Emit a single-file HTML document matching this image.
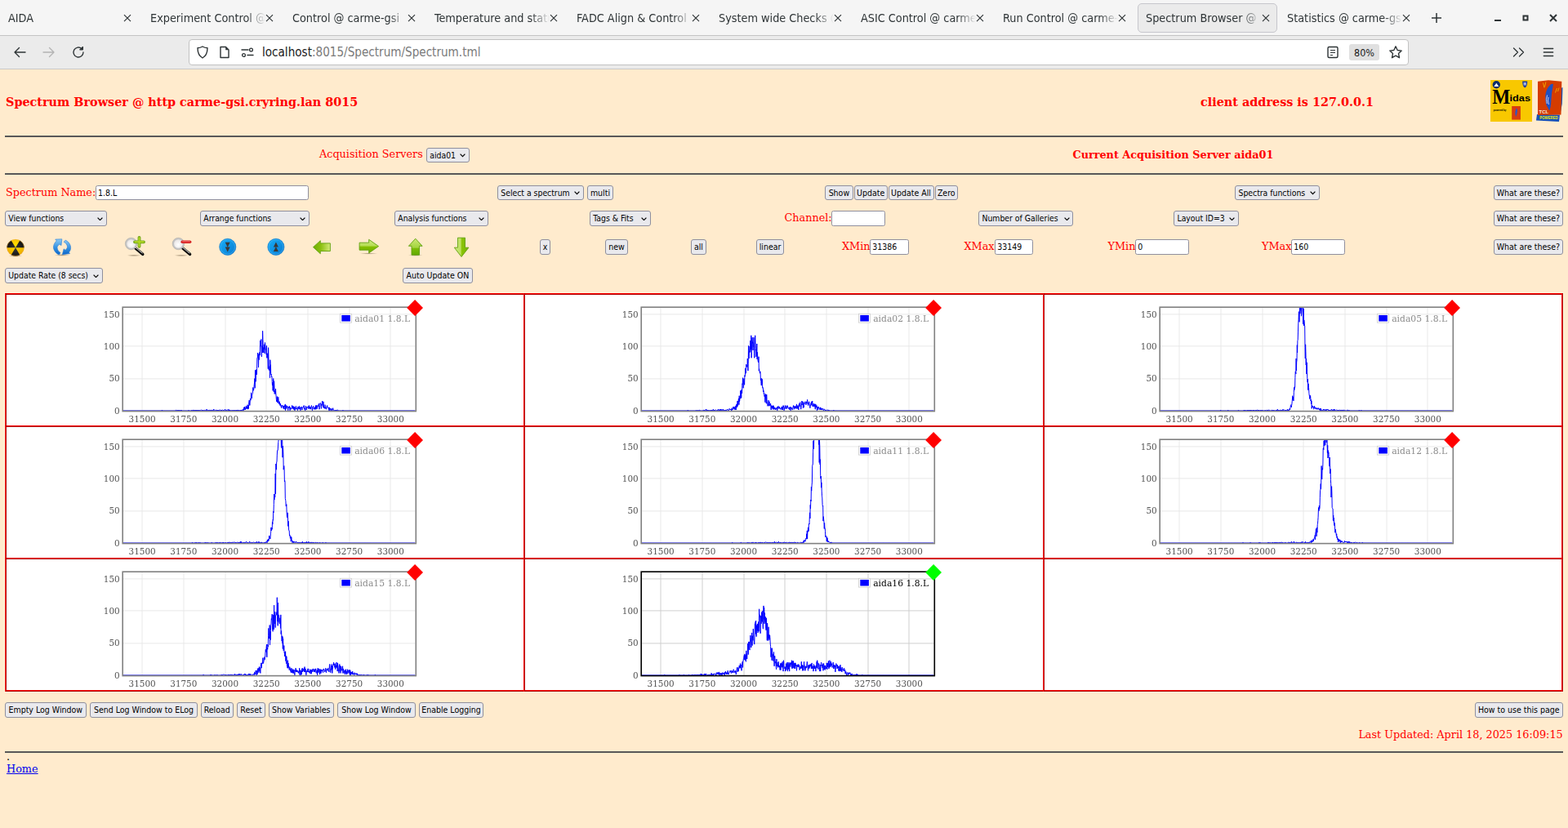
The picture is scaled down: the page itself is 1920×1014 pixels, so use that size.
<!DOCTYPE html>
<html lang="en"><head><meta charset="utf-8"><title>Spectrum Browser @ carme-gsi</title>
<style>
html,body{margin:0;padding:0}
body{width:1920px;height:1014px;overflow:hidden;background:#ffebcd;position:relative;font-family:"DejaVu Serif","Liberation Serif",serif;font-size:12.8px;color:#ff0000}
#chrome{position:absolute;left:0;top:0;width:1920px;height:85px;font-family:"DejaVu Sans Condensed","Liberation Sans",sans-serif;color:#2e3436}
#tabbar{position:absolute;left:0;top:0;width:1920px;height:43px;background:#f5f5f5;border-bottom:1px solid #c4c4c4}
#navbar{position:absolute;left:0;top:44px;width:1920px;height:40px;background:#ebebeb;border-bottom:1px solid #c9c9c9}
.tab{position:absolute;top:4px;height:36px;width:170px;box-sizing:border-box;border:1px solid transparent;border-radius:5px;font-size:14.3px;line-height:34px;white-space:nowrap;overflow:hidden}
.tab.sel{background:#ebebeb;border-color:#c6c6cc}
.tab .t{position:absolute;left:9px;top:0;width:141px;overflow:hidden;-webkit-mask-image:linear-gradient(90deg,#000 84%,transparent 100%);mask-image:linear-gradient(90deg,#000 84%,transparent 100%)}
.tab .x{position:absolute;right:6px;top:10px;width:14px;height:14px}
#urlbox{position:absolute;left:231px;top:4px;width:1492px;height:30px;background:#fff;border:1px solid #c2c2c2;border-radius:4px}
#url{position:absolute;left:89px;top:0;font-size:15.1px;line-height:30px;color:#7a7a7a}
#url b{font-weight:normal;color:#1a1a1a}
.ic{position:absolute}
.abs{position:absolute;white-space:nowrap}
.hr{position:absolute;left:6px;width:1907.7px;height:2px;background:#585858}
.btn,.dd,.inp{position:absolute;box-sizing:border-box;font-family:"DejaVu Sans Condensed","Liberation Sans",sans-serif;font-size:10.5px;color:#000;border:1px solid #8f8f9d;border-radius:3px;white-space:nowrap;overflow:hidden}
.btn{background:#e9e9ed;text-align:center;height:18.5px;line-height:17.3px}
.dd{background:#e9e9ed;height:19px;line-height:17px;padding-left:3.3px;font-size:10.35px}
.dd svg{position:absolute;right:3.4px;top:6.8px}
.inp{background:#fff;height:18.5px;line-height:17.8px;padding-left:2px;border-radius:2.5px}
#grid{position:absolute;left:6px;top:359px;width:1908px;height:488px;background:#fff;box-shadow:0 0 0 1px #fff8dc}
.gl{position:absolute;background:#dd0000}
.ch{position:absolute;overflow:visible;will-change:transform}
.tk{font-family:"DejaVu Serif","Liberation Serif",serif;font-size:10.4px;fill:#545454}
.lg{font-family:"DejaVu Serif","Liberation Serif",serif;font-size:10.75px}
</style></head><body>

<div id="chrome">
 <div id="tabbar">
  <div class="tab" style="left:0px"><span class="t">AIDA</span><svg class="x" viewBox="0 0 14 14"><path d="M3 3.200l8 8M11 3.200l-8 8" stroke="#2e3436" stroke-width="1.150" fill="none"/></svg></div>
  <div class="tab" style="left:174px"><span class="t">Experiment Control @ carme-gsi</span><svg class="x" viewBox="0 0 14 14"><path d="M3 3.200l8 8M11 3.200l-8 8" stroke="#2e3436" stroke-width="1.150" fill="none"/></svg></div>
  <div class="tab" style="left:348px"><span class="t">Control @ carme-gsi</span><svg class="x" viewBox="0 0 14 14"><path d="M3 3.200l8 8M11 3.200l-8 8" stroke="#2e3436" stroke-width="1.150" fill="none"/></svg></div>
  <div class="tab" style="left:522px"><span class="t">Temperature and status</span><svg class="x" viewBox="0 0 14 14"><path d="M3 3.200l8 8M11 3.200l-8 8" stroke="#2e3436" stroke-width="1.150" fill="none"/></svg></div>
  <div class="tab" style="left:696px"><span class="t">FADC Align &amp; Control @</span><svg class="x" viewBox="0 0 14 14"><path d="M3 3.200l8 8M11 3.200l-8 8" stroke="#2e3436" stroke-width="1.150" fill="none"/></svg></div>
  <div class="tab" style="left:870px"><span class="t">System wide Checks @</span><svg class="x" viewBox="0 0 14 14"><path d="M3 3.200l8 8M11 3.200l-8 8" stroke="#2e3436" stroke-width="1.150" fill="none"/></svg></div>
  <div class="tab" style="left:1044px"><span class="t">ASIC Control @ carme-gsi</span><svg class="x" viewBox="0 0 14 14"><path d="M3 3.200l8 8M11 3.200l-8 8" stroke="#2e3436" stroke-width="1.150" fill="none"/></svg></div>
  <div class="tab" style="left:1218px"><span class="t">Run Control @ carme-gsi</span><svg class="x" viewBox="0 0 14 14"><path d="M3 3.200l8 8M11 3.200l-8 8" stroke="#2e3436" stroke-width="1.150" fill="none"/></svg></div>
  <div class="tab sel" style="left:1393px;width:171px"><span class="t">Spectrum Browser @ carme-gsi</span><svg class="x" viewBox="0 0 14 14"><path d="M3 3.200l8 8M11 3.200l-8 8" stroke="#2e3436" stroke-width="1.150" fill="none"/></svg></div>
  <div class="tab" style="left:1566px"><span class="t">Statistics @ carme-gsi</span><svg class="x" viewBox="0 0 14 14"><path d="M3 3.200l8 8M11 3.200l-8 8" stroke="#2e3436" stroke-width="1.150" fill="none"/></svg></div>
  <svg class="ic" style="left:1751px;top:14px" width="16" height="16" viewBox="0 0 16 16"><path d="M8 2v12M2 8h12" stroke="#2e3436" stroke-width="1.5" fill="none"/></svg>
  <svg class="ic" style="left:1826px;top:14px" width="16" height="16" viewBox="0 0 16 16"><path d="M4 11h8" stroke="#2e3436" stroke-width="2" fill="none"/></svg>
  <svg class="ic" style="left:1860px;top:14.200px" width="16" height="16" viewBox="0 0 16 16"><rect x="5.500" y="5.500" width="5" height="5" stroke="#2e3436" stroke-width="2" fill="none"/></svg>
  <svg class="ic" style="left:1894px;top:14px" width="16" height="16" viewBox="0 0 16 16"><path d="M4 4l8 8M12 4l-8 8" stroke="#2e3436" stroke-width="2" fill="none"/></svg>
 </div>
 <div id="navbar">
  <svg class="ic" style="left:15px;top:11px" width="18" height="18" viewBox="0 0 18 18"><path d="M16 9H3M8.5 3.5L3 9l5.500 5.500" stroke="#2e3436" stroke-width="1.350" fill="none" stroke-linecap="round" stroke-linejoin="round"/></svg>
  <svg class="ic" style="left:51px;top:11px" width="18" height="18" viewBox="0 0 18 18"><path d="M2 9h13M9.500 3.500L15 9l-5.500 5.500" stroke="#b4b4b4" stroke-width="1.350" fill="none" stroke-linecap="round" stroke-linejoin="round"/></svg>
  <svg class="ic" style="left:87px;top:11px" width="18" height="18" viewBox="0 0 18 18"><path d="M15 9a6 6 0 1 1-2-4.500" stroke="#2e3436" stroke-width="1.350" fill="none" stroke-linecap="round"/><path d="M14.500 2v4h-4z" fill="#2e3436" stroke="#2e3436" stroke-width="1" stroke-linejoin="round"/></svg>
  <div id="urlbox">
   <svg class="ic" style="left:7px;top:6px" width="18" height="18" viewBox="0 0 18 18"><path d="M9 2c2 1.200 4 1.700 6 1.800 0 6-2 10-6 12.200C5 13.800 3 9.800 3 3.800 5 3.700 7 3.200 9 2z" stroke="#2e3436" stroke-width="1.4" fill="none" stroke-linejoin="round"/></svg>
   <svg class="ic" style="left:34px;top:6px" width="18" height="18" viewBox="0 0 18 18"><path d="M4 2.500h6.500l3.500 3.500v9.500h-10z" stroke="#2e3436" stroke-width="1.400" fill="none" stroke-linejoin="round"/><path d="M10.200 2.500v3.800h3.800z" fill="#2e3436"/></svg>
   <svg class="ic" style="left:62px;top:6px" width="18" height="18" viewBox="0 0 18 18"><path d="M2 6h8M9 12.500h7" stroke="#2e3436" stroke-width="1.400" fill="none" stroke-linecap="round"/><circle cx="13.500" cy="6" r="1.900" stroke="#2e3436" stroke-width="1.300" fill="none"/><circle cx="4.500" cy="12.500" r="1.900" stroke="#2e3436" stroke-width="1.300" fill="none"/></svg>
   <div id="url"><b>localhost</b>:8015/Spectrum/Spectrum.tml</div>
   <svg class="ic" style="left:1391px;top:6px" width="18" height="18" viewBox="0 0 18 18"><rect x="3" y="2.500" width="12" height="13" rx="1.500" stroke="#2e3436" stroke-width="1.400" fill="none"/><path d="M6 6.500h6M6 9.500h6M6 12.500h3" stroke="#2e3436" stroke-width="1.200" fill="none"/></svg>
   <div class="abs" style="left:1420px;top:5px;width:37px;height:20px;background:#e0e0e0;border-radius:3px;font-size:12.500px;line-height:21.500px;text-align:center;color:#1a1a1a">80%</div>
   <svg class="ic" style="left:1468px;top:6px" width="18" height="18" viewBox="0 0 18 18"><path d="M9 1.800l2.200 4.700 5 .6-3.700 3.500 1 5.100L9 13.200l-4.500 2.500 1-5.100L1.800 7.100l5-.6z" stroke="#2e3436" stroke-width="1.400" fill="none" stroke-linejoin="round"/></svg>
  </div>
  <svg class="ic" style="left:1850px;top:11px" width="18" height="18" viewBox="0 0 18 18"><path d="M3.500 4l5 5-5 5M10.500 4l5 5-5 5" stroke="#2e3436" stroke-width="1.300" fill="none" stroke-linecap="round" stroke-linejoin="round"/></svg>
  <svg class="ic" style="left:1887px;top:11px" width="18" height="18" viewBox="0 0 18 18"><path d="M3.300 4.500h11.400M3.300 9h11.400M3.300 13.500h11.400" stroke="#2e3436" stroke-width="1.300" fill="none" stroke-linecap="round"/></svg>
 </div>
</div>

<!-- page -->
<div class="abs" style="left:7px;top:116px;font-size:14.4px;font-weight:bold;line-height:18px">Spectrum Browser @ http carme-gsi.cryring.lan 8015</div>
<div class="abs" style="left:1470px;top:116px;font-size:14.4px;font-weight:bold;line-height:18px">client address is 127.0.0.1</div>
<!-- midas logo -->
<div class="abs" style="left:1825px;top:98px;width:51px;height:51px;background:#f8c800;overflow:hidden;color:#000">
 <svg class="ic" style="left:0;top:0" width="51" height="51" viewBox="0 0 51 51">
  <circle cx="7.300" cy="5.700" r="4.700" fill="#0c2c68"/>
  <path d="M4.300 8l3-4.200 3 4.200z" fill="#fff"/>
  <path d="M39.200 1.500h6c0 4-0.600 6.500-3 8-2.400-1.500-3-4-3-8z" fill="#1c3c9c"/>
  <path d="M40.600 3h3.200v3.500h-3.200z" fill="#c8d0f0" opacity="0.8"/>
  <rect x="26.200" y="32" width="10.700" height="16.600" fill="#d83c10"/>
  <path d="M31.800 34.500c1.500 1 1.500 4 0.500 7l-1 3.500c-1-3-1.500-6 0.500-10.500z" fill="#2858c8"/>
  <text x="2.200" y="28.500" font-family="'Liberation Serif','DejaVu Serif',serif" font-weight="bold" font-size="25" fill="#000" textLength="22" lengthAdjust="spacingAndGlyphs">M</text>
  <text x="23.500" y="26.200" font-family="'Liberation Sans','DejaVu Sans',sans-serif" font-weight="bold" font-size="11.500" fill="#000" textLength="25.500" lengthAdjust="spacingAndGlyphs">idas</text>
  <text x="3.800" y="37.500" font-family="'Liberation Sans','DejaVu Sans',sans-serif" font-weight="bold" font-size="3.800" fill="#000" textLength="15.500" lengthAdjust="spacingAndGlyphs">powered by</text>
 </svg>
</div>
<!-- tcl logo -->
<svg class="ic" style="left:1880px;top:97px" width="36" height="54" viewBox="0 0 36 54">
 <path d="M2 43L30 43.500 29 52 1 50.500z" fill="#1450b8"/>
 <path d="M31 11l2.500-1-0.700 20-2.500 14z" fill="#1450b8"/>
 <path d="M3 2.800L16 1.300 32.300 2.700 31.500 43.600 3 44z" fill="#d43c00"/>
 <path d="M21.900 6.100C20.500 5.200 19.500 5.800 18.700 6.500 16 9 14.300 12 13.600 14.200 12.600 17 12.200 19.500 12.300 21.800 12.300 24.500 12.500 27 12.900 28.900 13.400 31 14 32.800 14.900 34L16.800 37.900 17.400 37.900C18.400 35.500 18.800 33.500 19 31.500 19.400 27 19.500 23 20 18.600 20.500 14 21.500 10 21.900 6.100z" fill="#2050c0"/>
 <path d="M14.600 19.500l-1.200 5 0.800 5.500M16 22l-0.600 4 1 5" stroke="#e8e8f8" stroke-width="0.800" fill="none"/>
 <path d="M9.500 4.500l1.500 6M12.800 3.500l-1.200 6M26.500 11l-2 5.500M29 10.500l-1.500 4.500" stroke="#f0a000" stroke-width="1" fill="none"/>
 <text x="4.600" y="41.700" font-family="'Liberation Sans','DejaVu Sans',sans-serif" font-weight="bold" font-size="5.400" fill="#f4ece0" textLength="11.600" lengthAdjust="spacingAndGlyphs">TCL</text>
 <text x="5.300" y="48.800" font-family="'Liberation Sans','DejaVu Sans',sans-serif" font-weight="bold" font-size="4.800" fill="#f0f000" textLength="22.400" lengthAdjust="spacingAndGlyphs">POWERED</text>
</svg>

<div class="hr" style="top:165.5px"></div>
<div class="abs" style="left:391px;top:180.700px;line-height:16px">Acquisition Servers</div>
<div class="dd" style="left:522px;top:180.500px;width:52.500px;height:18px;line-height:16px">aida01<svg width="7" height="4.500" viewBox="0 0 7 4.500"><path d="M0.600 0.600L3.500 3.600l2.900-3" stroke="#000" stroke-width="1.200" fill="none"/></svg></div>
<div class="abs" style="left:1313.500px;top:181.800px;font-weight:bold;line-height:16px">Current Acquisition Server aida01</div>
<div class="hr" style="top:211.500px"></div>

<div class="abs" style="left:7px;top:227px;line-height:18px">Spectrum Name:</div>
<div class="inp" style="left:117px;top:226.700px;width:261px">1.8.L</div>
<div class="dd" style="left:609px;top:226.700px;width:105.500px;height:18.500px;line-height:16.500px">Select a spectrum<svg width="7" height="4.500" viewBox="0 0 7 4.500"><path d="M0.600 0.600L3.500 3.600l2.900-3" stroke="#000" stroke-width="1.200" fill="none"/></svg></div>
<div class="btn" style="left:719.200px;top:226.700px;width:31.600px">multi</div>
<div class="btn" style="left:1010.200px;top:226.700px;width:34.400px">Show</div>
<div class="btn" style="left:1045.500px;top:226.700px;width:41.300px">Update</div>
<div class="btn" style="left:1087.500px;top:226.700px;width:56px">Update All</div>
<div class="btn" style="left:1144.500px;top:226.700px;width:28.500px">Zero</div>
<div class="dd" style="left:1512.200px;top:226.700px;width:103.600px;height:18.500px;line-height:16.500px">Spectra functions<svg width="7" height="4.500" viewBox="0 0 7 4.500"><path d="M0.600 0.600L3.500 3.600l2.900-3" stroke="#000" stroke-width="1.200" fill="none"/></svg></div>
<div class="btn" style="left:1829px;top:226.700px;width:84.700px">What are these?</div>

<div class="dd" style="left:6px;top:258px;width:124.800px">View functions<svg width="7" height="4.500" viewBox="0 0 7 4.500"><path d="M0.600 0.600L3.500 3.600l2.900-3" stroke="#000" stroke-width="1.200" fill="none"/></svg></div>
<div class="dd" style="left:245px;top:258px;width:133.800px">Arrange functions<svg width="7" height="4.500" viewBox="0 0 7 4.500"><path d="M0.600 0.600L3.500 3.600l2.900-3" stroke="#000" stroke-width="1.200" fill="none"/></svg></div>
<div class="dd" style="left:483px;top:258px;width:114.800px">Analysis functions<svg width="7" height="4.500" viewBox="0 0 7 4.500"><path d="M0.600 0.600L3.500 3.600l2.900-3" stroke="#000" stroke-width="1.200" fill="none"/></svg></div>
<div class="dd" style="left:722px;top:258px;width:74.800px">Tags &amp; Fits<svg width="7" height="4.500" viewBox="0 0 7 4.500"><path d="M0.600 0.600L3.500 3.600l2.900-3" stroke="#000" stroke-width="1.200" fill="none"/></svg></div>
<div class="abs" style="left:960.500px;top:258px;line-height:18px">Channel:</div>
<div class="inp" style="left:1018.200px;top:258px;width:65.800px;height:19px"></div>
<div class="dd" style="left:1198.200px;top:258px;width:115.800px">Number of Galleries<svg width="7" height="4.500" viewBox="0 0 7 4.500"><path d="M0.600 0.600L3.500 3.600l2.900-3" stroke="#000" stroke-width="1.200" fill="none"/></svg></div>
<div class="dd" style="left:1437.200px;top:258px;width:79.700px">Layout ID=3<svg width="7" height="4.500" viewBox="0 0 7 4.500"><path d="M0.600 0.600L3.500 3.600l2.900-3" stroke="#000" stroke-width="1.200" fill="none"/></svg></div>
<div class="btn" style="left:1829px;top:258px;width:84.700px">What are these?</div>

<svg width="0" height="0" style="position:absolute"><defs>
 <radialGradient id="gy" cx="0.5" cy="0.35" r="0.75"><stop offset="0" stop-color="#ffe000"/><stop offset="0.7" stop-color="#f0b400"/><stop offset="1" stop-color="#c88600"/></radialGradient>
 <radialGradient id="gk" cx="0.5" cy="0.5" r="0.6"><stop offset="0" stop-color="#3a3a3a"/><stop offset="1" stop-color="#0a0a0a"/></radialGradient>
 <linearGradient id="gb" x1="0" y1="0" x2="0" y2="1"><stop offset="0" stop-color="#8ccaf4"/><stop offset="0.5" stop-color="#3a96e4"/><stop offset="1" stop-color="#0a64c8"/></linearGradient>
 <linearGradient id="gbc" x1="0" y1="0" x2="1" y2="1"><stop offset="0" stop-color="#18b0f8"/><stop offset="1" stop-color="#0878d0"/></linearGradient>
 <radialGradient id="gl" cx="0.5" cy="0.6" r="0.6"><stop offset="0" stop-color="#ffffff"/><stop offset="1" stop-color="#e4e0e0"/></radialGradient>
 <linearGradient id="ggh" x1="0" y1="0" x2="1" y2="0"><stop offset="0" stop-color="#6cae00"/><stop offset="0.45" stop-color="#8cc010"/><stop offset="1" stop-color="#d4ea78"/></linearGradient>
 <linearGradient id="ggv" x1="0" y1="0" x2="0" y2="1"><stop offset="0" stop-color="#d0ec88"/><stop offset="0.48" stop-color="#b4dc50"/><stop offset="0.52" stop-color="#86c000"/><stop offset="1" stop-color="#6cac00"/></linearGradient>
 <linearGradient id="ggu" x1="0" y1="0" x2="0" y2="1"><stop offset="0" stop-color="#cce874"/><stop offset="0.55" stop-color="#a4d440"/><stop offset="0.6" stop-color="#7cbc08"/><stop offset="1" stop-color="#62a800"/></linearGradient>
 <linearGradient id="ggd" x1="0" y1="0" x2="1" y2="0"><stop offset="0" stop-color="#cce880"/><stop offset="0.45" stop-color="#bce060"/><stop offset="0.5" stop-color="#8cc408"/><stop offset="1" stop-color="#74b400"/></linearGradient>
 <radialGradient id="gsh" cx="0.5" cy="0.5" r="0.5"><stop offset="0" stop-color="#5a4a30" stop-opacity="0.55"/><stop offset="1" stop-color="#5a4a30" stop-opacity="0"/></radialGradient>
</defs></svg>
<!-- nuke -->
<svg class="ic" style="left:6px;top:289px" width="28" height="28" viewBox="0 0 28 28">
 <ellipse cx="13" cy="24.300" rx="8.500" ry="1.500" fill="url(#gsh)"/>
 <ellipse cx="13" cy="14.300" rx="10.600" ry="10.200" fill="url(#gy)"/>
 <path d="M13 14.300L2.400 14.300A10.600 10.200 0 0 1 7.700 5.470zM13 14.300L18.300 5.470A10.600 10.200 0 0 1 23.600 14.300zM13 14.300L18.300 23.130A10.600 10.200 0 0 1 7.700 23.130z" fill="url(#gk)"/>
 <ellipse cx="13" cy="14.300" rx="10.400" ry="10" fill="none" stroke="#f0a848" stroke-width="0.600" opacity="0.700"/>
</svg>
<!-- refresh -->
<svg class="ic" style="left:62px;top:289px" width="28" height="28" viewBox="0 0 28 28">
 <ellipse cx="14" cy="23.400" rx="9.500" ry="1.400" fill="url(#gsh)"/>
 <path d="M5.700 4.100L13.800 3.800L13 11.600L10.900 10.100C9 11.500 8 13 8.100 14.500C8.300 17 9.800 19 12 20.500L10.400 23.100C7.500 22 4.500 19 3.600 15.500C2.900 12 4.500 8.500 7.300 5.900Z" fill="url(#gb)" stroke="#2a7cd4" stroke-width="0.600" stroke-linejoin="round"/>
 <path d="M14.300 22.800L16.100 15.800L18 17.300C19.800 16 20.600 14.200 20.500 13C20.200 10.500 18.500 8.500 16.100 7.200L18.200 5.100C21 6.500 23.400 9 24.300 12C25 15 24.500 18 22.400 20L23.500 21.600Z" fill="url(#gb)" stroke="#2a7cd4" stroke-width="0.600" stroke-linejoin="round"/>
</svg>
<!-- zoom in -->
<svg class="ic" style="left:150px;top:288px" width="30" height="28" viewBox="0 0 30 28">
 <ellipse cx="14" cy="24.800" rx="9" ry="1.300" fill="url(#gsh)"/>
 <path d="M15.600 15.800L24.800 23.400" stroke="#0a0a0a" stroke-width="3.400" stroke-linecap="round"/>
 <path d="M16.300 15.400L24.300 22" stroke="#ffffff" stroke-width="1" stroke-linecap="round" opacity="0.9"/>
 <circle cx="10.600" cy="10.500" r="6.300" fill="url(#gl)" stroke="#c4c4c4" stroke-width="2"/>
 <circle cx="10.600" cy="10.500" r="7.300" fill="none" stroke="#9a9a9a" stroke-width="0.400"/>
 <path d="M20.500 2.800v11M15 8.300h11" stroke="#6ea418" stroke-width="3.800" stroke-linecap="round"/>
 <path d="M20.500 3.200v10.200M15.400 8.300h10.200" stroke="#b4d824" stroke-width="2" stroke-linecap="round"/>
</svg>
<!-- zoom out -->
<svg class="ic" style="left:208px;top:288px" width="30" height="28" viewBox="0 0 30 28">
 <ellipse cx="14" cy="24.800" rx="9" ry="1.300" fill="url(#gsh)"/>
 <path d="M15.400 15.800L24.600 23.400" stroke="#0a0a0a" stroke-width="3.400" stroke-linecap="round"/>
 <path d="M16.100 15.400L24.100 22" stroke="#ffffff" stroke-width="1" stroke-linecap="round" opacity="0.9"/>
 <circle cx="10.400" cy="10.500" r="6.300" fill="url(#gl)" stroke="#c4c4c4" stroke-width="2"/>
 <circle cx="10.400" cy="10.500" r="7.300" fill="none" stroke="#9a9a9a" stroke-width="0.400"/>
 <path d="M15.200 8.300h9.400" stroke="#d42020" stroke-width="3.600" stroke-linecap="round"/>
 <path d="M15.600 7.900h8.600" stroke="#f06060" stroke-width="1.400" stroke-linecap="round"/>
</svg>
<!-- blue down -->
<svg class="ic" style="left:266px;top:290px" width="26" height="26" viewBox="0 0 26 26">
 <circle cx="12.750" cy="12.400" r="10.100" fill="url(#gbc)" stroke="#0a70c8" stroke-width="0.600"/>
 <circle cx="12.750" cy="12.400" r="8.800" fill="none" stroke="#58c0f8" stroke-width="0.600" opacity="0.8"/>
 <path d="M9.700 6.800h6l-3 6zM9.700 12.400h6l-3 6z" fill="#3a3836"/>
</svg>
<!-- blue up -->
<svg class="ic" style="left:325px;top:290px" width="26" height="26" viewBox="0 0 26 26">
 <circle cx="12.900" cy="12.400" r="10.100" fill="url(#gbc)" stroke="#0a70c8" stroke-width="0.600"/>
 <circle cx="12.900" cy="12.400" r="8.800" fill="none" stroke="#58c0f8" stroke-width="0.600" opacity="0.8"/>
 <path d="M9.900 12.400h6l-3-6zM9.900 18h6l-3-6z" fill="#3a3836"/>
</svg>
<!-- left arrow -->
<svg class="ic" style="left:380px;top:290px" width="28" height="26" viewBox="0 0 28 26">
 <path d="M3.500 12.700L12.300 4.700V7.900H24.400V17.500H12.300V20.700z" fill="url(#ggh)" stroke="#62a010" stroke-width="0.900" stroke-linejoin="round"/>
</svg>
<!-- right arrow -->
<svg class="ic" style="left:437px;top:290px" width="28" height="26" viewBox="0 0 28 26">
 <ellipse cx="14.500" cy="20.600" rx="11" ry="1" fill="url(#gsh)"/>
 <path d="M26.600 11.600L14.700 3.300V7.200H3.100V16.200H14.700V19.900z" fill="url(#ggv)" stroke="#62a010" stroke-width="0.900" stroke-linejoin="round"/>
</svg>
<!-- up arrow -->
<svg class="ic" style="left:496px;top:288px" width="26" height="28" viewBox="0 0 26 28">
 <ellipse cx="12.700" cy="24.600" rx="9" ry="1.200" fill="url(#gsh)"/>
 <path d="M12.750 4.200L21.100 13.300H17.500V24.200H8V13.300H4.400z" fill="url(#ggu)" stroke="#62a010" stroke-width="0.900" stroke-linejoin="round"/>
</svg>
<!-- down arrow -->
<svg class="ic" style="left:552px;top:288px" width="26" height="28" viewBox="0 0 26 28">
 <path d="M13 26.500L4.300 15.200H8.500V3.200H17.500V15.200H21.900z" fill="url(#ggd)" stroke="#62a010" stroke-width="0.900" stroke-linejoin="round"/>
</svg>

<div class="btn" style="left:661px;top:293.200px;width:13px">x</div>
<div class="btn" style="left:741.200px;top:293.200px;width:27.800px">new</div>
<div class="btn" style="left:846px;top:293.200px;width:18.800px">all</div>
<div class="btn" style="left:926.200px;top:293.200px;width:33.800px">linear</div>
<div class="abs" style="left:1031px;top:292.800px;line-height:18px">XMin</div>
<div class="inp" style="left:1065.200px;top:293.200px;width:47.500px">31386</div>
<div class="abs" style="left:1180.500px;top:292.800px;line-height:18px">XMax</div>
<div class="inp" style="left:1218.200px;top:293.200px;width:46.800px">33149</div>
<div class="abs" style="left:1356.500px;top:292.800px;line-height:18px">YMin</div>
<div class="inp" style="left:1390.200px;top:293.200px;width:65.800px">0</div>
<div class="abs" style="left:1545px;top:292.800px;line-height:18px">YMax</div>
<div class="inp" style="left:1581.200px;top:293.200px;width:65.800px">160</div>
<div class="btn" style="left:1829px;top:293.200px;width:84.700px">What are these?</div>

<div class="dd" style="left:6px;top:328px;width:119.800px">Update Rate (8 secs)<svg width="7" height="4.500" viewBox="0 0 7 4.500"><path d="M0.600 0.600L3.500 3.600l2.900-3" stroke="#000" stroke-width="1.200" fill="none"/></svg></div>
<div class="btn" style="left:493px;top:328px;width:85.800px;height:19px;line-height:17.500px">Auto Update ON</div>

<div id="grid">
 <div class="gl" style="left:0;top:0px;width:1908px;height:1px;background:#ff0000"></div><div class="gl" style="left:0;top:1px;width:1908px;height:1px;background:#aa0000"></div>
 <div class="gl" style="left:0;top:162px;width:1908px;height:1px;background:#ff0000"></div><div class="gl" style="left:0;top:163px;width:1908px;height:1px;background:#aa0000"></div>
 <div class="gl" style="left:0;top:324px;width:1908px;height:1px;background:#ff0000"></div><div class="gl" style="left:0;top:325px;width:1908px;height:1px;background:#aa0000"></div>
 <div class="gl" style="left:0;top:486px;width:1908px;height:1px;background:#ff0000"></div><div class="gl" style="left:0;top:487px;width:1908px;height:1px;background:#aa0000"></div>
 <div class="gl" style="left:0px;top:0;width:1px;height:488px;background:#ff0000"></div><div class="gl" style="left:1px;top:0;width:1px;height:488px;background:#aa0000"></div>
 <div class="gl" style="left:635px;top:0;width:1px;height:488px;background:#ff0000"></div><div class="gl" style="left:636px;top:0;width:1px;height:488px;background:#aa0000"></div>
 <div class="gl" style="left:1271px;top:0;width:1px;height:488px;background:#ff0000"></div><div class="gl" style="left:1272px;top:0;width:1px;height:488px;background:#aa0000"></div>
 <div class="gl" style="left:1906px;top:0;width:1px;height:488px;background:#ff0000"></div><div class="gl" style="left:1907px;top:0;width:1px;height:488px;background:#aa0000"></div>
</div>
<svg class="ch" style="left:110.5px;top:356.6px" width="420" height="160" viewBox="0 0 420 160">
<g transform="translate(40,20)">
<line x1="23.00" y1="0" x2="23.00" y2="125.8" stroke="#e9e9e9" stroke-width="1"/>
<line x1="74.00" y1="0" x2="74.00" y2="125.8" stroke="#e9e9e9" stroke-width="1"/>
<line x1="125.00" y1="0" x2="125.00" y2="125.8" stroke="#e9e9e9" stroke-width="1"/>
<line x1="175.00" y1="0" x2="175.00" y2="125.8" stroke="#e9e9e9" stroke-width="1"/>
<line x1="226.00" y1="0" x2="226.00" y2="125.8" stroke="#e9e9e9" stroke-width="1"/>
<line x1="277.00" y1="0" x2="277.00" y2="125.8" stroke="#e9e9e9" stroke-width="1"/>
<line x1="327.00" y1="0" x2="327.00" y2="125.8" stroke="#e9e9e9" stroke-width="1"/>
<line x1="0" y1="86.90" x2="357.5" y2="86.90" stroke="#e9e9e9" stroke-width="1"/>
<line x1="0" y1="46.90" x2="357.5" y2="46.90" stroke="#e9e9e9" stroke-width="1"/>
<line x1="0" y1="7.90" x2="357.5" y2="7.90" stroke="#e9e9e9" stroke-width="1"/>
<clipPath id="cp0"><rect x="0" y="0" width="357.5" height="126.8"/></clipPath>
<polyline clip-path="url(#cp0)" fill="none" stroke="#0000ff" stroke-width="1.0" stroke-linejoin="round" points="0.0,125.8 0.3,125.8 0.6,125.8 0.9,125.8 1.2,125.8 1.5,125.8 1.8,125.8 2.1,125.8 2.4,125.8 2.7,125.8 3.0,125.8 3.3,125.8 3.7,125.8 4.0,125.8 4.3,125.8 4.6,125.8 4.9,125.8 5.2,125.8 5.5,125.8 5.8,125.8 6.1,125.8 6.4,125.8 6.7,125.8 7.0,125.8 7.3,125.8 7.6,125.8 7.9,125.8 8.2,125.8 8.5,125.8 8.8,125.8 9.1,125.8 9.4,125.8 9.7,125.8 10.0,125.8 10.3,125.8 10.6,125.8 11.0,125.8 11.3,125.8 11.6,125.8 11.9,125.8 12.2,125.8 12.5,125.8 12.8,125.8 13.1,125.8 13.4,125.8 13.7,125.8 14.0,125.8 14.3,125.8 14.6,125.8 14.9,125.8 15.2,125.8 15.5,125.8 15.8,125.8 16.1,125.8 16.4,125.8 16.7,125.8 17.0,125.8 17.3,125.8 17.6,125.8 17.9,125.8 18.3,125.8 18.6,125.8 18.9,125.8 19.2,125.8 19.5,125.8 19.8,125.8 20.1,125.8 20.4,125.8 20.7,125.8 21.0,125.8 21.3,125.8 21.6,125.8 21.9,125.8 22.2,125.8 22.5,125.8 22.8,125.8 23.1,125.8 23.4,125.8 23.7,125.8 24.0,125.8 24.3,125.8 24.6,125.8 24.9,125.8 25.2,125.8 25.6,125.8 25.9,125.8 26.2,125.8 26.5,125.8 26.8,125.8 27.1,125.8 27.4,125.8 27.7,125.8 28.0,125.8 28.3,125.8 28.6,125.8 28.9,125.8 29.2,125.8 29.5,125.8 29.8,125.8 30.1,125.8 30.4,125.8 30.7,125.8 31.0,125.8 31.3,125.8 31.6,125.8 31.9,125.8 32.2,125.8 32.5,125.8 32.9,125.8 33.2,125.8 33.5,125.8 33.8,125.8 34.1,125.8 34.4,125.8 34.7,125.8 35.0,125.8 35.3,125.8 35.6,125.8 35.9,125.8 36.2,125.8 36.5,125.8 36.8,125.8 37.1,125.8 37.4,125.8 37.7,125.8 38.0,125.8 38.3,125.8 38.6,125.8 38.9,125.8 39.2,125.8 39.5,125.8 39.8,125.8 40.2,125.8 40.5,125.8 40.8,125.8 41.1,125.8 41.4,125.8 41.7,125.8 42.0,125.8 42.3,125.8 42.6,125.8 42.9,125.8 43.2,125.8 43.5,125.8 43.8,125.8 44.1,125.8 44.4,125.8 44.7,125.8 45.0,125.8 45.3,125.8 45.6,125.8 45.9,125.8 46.2,125.8 46.5,125.8 46.8,125.8 47.1,125.8 47.5,125.0 47.8,125.8 48.1,125.8 48.4,125.8 48.7,125.8 49.0,125.8 49.3,125.8 49.6,125.8 49.9,125.8 50.2,125.8 50.5,125.8 50.8,125.8 51.1,125.8 51.4,125.8 51.7,125.8 52.0,125.8 52.3,125.8 52.6,125.8 52.9,125.8 53.2,125.8 53.5,125.8 53.8,125.8 54.1,125.8 54.4,125.8 54.8,125.8 55.1,125.8 55.4,125.8 55.7,125.8 56.0,125.8 56.3,125.8 56.6,125.8 56.9,125.8 57.2,125.8 57.5,125.8 57.8,125.8 58.1,125.8 58.4,125.8 58.7,125.8 59.0,125.8 59.3,125.8 59.6,125.8 59.9,125.8 60.2,125.8 60.5,125.8 60.8,125.8 61.1,125.8 61.4,125.8 61.7,125.8 62.1,125.8 62.4,125.8 62.7,125.8 63.0,125.8 63.3,125.8 63.6,125.8 63.9,125.8 64.2,125.8 64.5,125.0 64.8,125.0 65.1,125.8 65.4,125.8 65.7,125.8 66.0,125.8 66.3,125.0 66.6,125.8 66.9,125.8 67.2,125.8 67.5,125.0 67.8,125.8 68.1,125.8 68.4,125.8 68.7,125.0 69.0,125.8 69.4,125.8 69.7,125.8 70.0,125.8 70.3,125.0 70.6,125.8 70.9,125.8 71.2,125.0 71.5,125.8 71.8,125.8 72.1,125.8 72.4,125.8 72.7,125.8 73.0,125.8 73.3,125.8 73.6,125.8 73.9,125.8 74.2,125.8 74.5,125.8 74.8,125.8 75.1,125.8 75.4,125.8 75.7,125.8 76.0,125.8 76.3,125.8 76.7,125.8 77.0,125.8 77.3,125.8 77.6,125.8 77.9,125.8 78.2,125.8 78.5,125.8 78.8,125.8 79.1,125.8 79.4,125.8 79.7,125.8 80.0,125.0 80.3,125.8 80.6,125.8 80.9,125.8 81.2,125.8 81.5,125.8 81.8,125.8 82.1,125.8 82.4,125.8 82.7,125.8 83.0,125.8 83.3,125.8 83.6,125.0 84.0,125.8 84.3,125.8 84.6,125.8 84.9,125.8 85.2,125.0 85.5,125.8 85.8,125.0 86.1,125.0 86.4,125.8 86.7,125.8 87.0,125.0 87.3,125.8 87.6,125.0 87.9,125.8 88.2,125.8 88.5,125.0 88.8,125.8 89.1,125.0 89.4,125.8 89.7,125.0 90.0,125.8 90.3,125.8 90.6,125.0 90.9,125.8 91.3,125.0 91.6,125.8 91.9,125.8 92.2,125.8 92.5,125.0 92.8,125.8 93.1,125.0 93.4,125.8 93.7,125.8 94.0,125.8 94.3,125.8 94.6,125.8 94.9,125.0 95.2,125.0 95.5,125.0 95.8,125.0 96.1,125.8 96.4,125.8 96.7,125.8 97.0,125.0 97.3,125.8 97.6,125.0 97.9,125.8 98.2,125.8 98.6,125.8 98.9,125.8 99.2,125.0 99.5,125.0 99.8,125.8 100.1,125.8 100.4,125.8 100.7,125.8 101.0,125.8 101.3,125.0 101.6,125.8 101.9,124.2 102.2,125.0 102.5,125.0 102.8,125.8 103.1,125.8 103.4,125.8 103.7,125.0 104.0,125.0 104.3,125.8 104.6,125.8 104.9,125.8 105.2,125.0 105.5,125.0 105.9,125.8 106.2,125.0 106.5,125.8 106.8,125.8 107.1,125.8 107.4,125.0 107.7,125.0 108.0,125.8 108.3,125.0 108.6,125.8 108.9,125.8 109.2,125.8 109.5,125.0 109.8,125.0 110.1,125.8 110.4,125.8 110.7,124.2 111.0,125.0 111.3,125.0 111.6,125.0 111.9,125.8 112.2,125.8 112.5,125.8 112.8,125.8 113.2,125.0 113.5,125.0 113.8,125.0 114.1,125.8 114.4,125.0 114.7,125.8 115.0,125.0 115.3,125.8 115.6,125.0 115.9,125.8 116.2,125.8 116.5,125.8 116.8,125.0 117.1,125.8 117.4,125.8 117.7,125.0 118.0,125.0 118.3,125.0 118.6,125.0 118.9,125.0 119.2,125.8 119.5,125.0 119.8,125.8 120.1,125.0 120.5,125.8 120.8,125.0 121.1,125.0 121.4,125.0 121.7,125.0 122.0,125.8 122.3,125.8 122.6,125.8 122.9,125.0 123.2,125.8 123.5,125.8 123.8,125.8 124.1,125.8 124.4,124.2 124.7,125.0 125.0,125.0 125.3,125.0 125.6,125.8 125.9,125.0 126.2,125.0 126.5,125.0 126.8,125.8 127.1,125.0 127.4,125.0 127.8,125.0 128.1,125.0 128.4,125.8 128.7,125.8 129.0,124.2 129.3,125.8 129.6,125.0 129.9,125.8 130.2,125.0 130.5,125.8 130.8,125.0 131.1,125.8 131.4,125.8 131.7,125.8 132.0,125.8 132.3,125.8 132.6,125.8 132.9,125.8 133.2,125.0 133.5,125.8 133.8,125.8 134.1,125.8 134.4,125.8 134.7,125.8 135.1,125.0 135.4,125.8 135.7,125.0 136.0,125.8 136.3,125.8 136.6,125.8 136.9,125.8 137.2,125.0 137.5,125.8 137.8,125.8 138.1,125.8 138.4,125.0 138.7,125.8 139.0,125.0 139.3,125.8 139.6,125.8 139.9,125.0 140.2,125.0 140.5,125.8 140.8,125.0 141.1,125.8 141.4,125.8 141.7,125.8 142.0,125.0 142.4,125.8 142.7,125.8 143.0,125.8 143.3,125.8 143.6,125.0 143.9,125.8 144.2,125.0 144.5,125.8 144.8,125.0 145.1,125.0 145.4,125.0 145.7,125.8 146.0,125.0 146.3,125.0 146.6,124.2 146.9,125.8 147.2,125.8 147.5,124.2 147.8,121.9 148.1,125.0 148.4,121.1 148.7,124.2 149.0,121.9 149.3,125.0 149.7,124.2 150.0,124.2 150.3,120.3 150.6,123.4 150.9,123.4 151.2,123.4 151.5,121.1 151.8,123.4 152.1,118.7 152.4,121.9 152.7,124.2 153.0,119.5 153.3,123.4 153.6,118.7 153.9,114.8 154.2,113.2 154.5,115.6 154.8,119.5 155.1,116.4 155.4,111.6 155.7,110.9 156.0,113.2 156.3,109.3 156.6,103.8 157.0,105.4 157.3,110.9 157.6,106.9 157.9,106.1 158.2,105.4 158.5,104.6 158.8,97.5 159.1,101.4 159.4,100.6 159.7,100.6 160.0,96.7 160.3,93.6 160.6,91.2 160.9,86.5 161.2,98.3 161.5,76.3 161.8,79.4 162.1,90.4 162.4,84.1 162.7,76.3 163.0,75.5 163.3,81.8 163.6,74.7 163.9,61.3 164.3,61.3 164.6,55.0 164.9,56.6 165.2,60.5 165.5,73.1 165.8,56.6 166.1,63.7 166.4,58.2 166.7,56.6 167.0,54.3 167.3,58.2 167.6,40.1 167.9,47.2 168.2,40.1 168.5,44.8 168.8,38.5 169.1,50.3 169.4,59.8 169.7,50.3 170.0,46.4 170.3,55.0 170.6,28.3 170.9,38.5 171.2,47.2 171.6,55.0 171.9,48.7 172.2,51.1 172.5,46.4 172.8,44.8 173.1,55.8 173.4,42.5 173.7,44.8 174.0,47.2 174.3,51.1 174.6,51.1 174.9,51.1 175.2,57.4 175.5,46.4 175.8,61.3 176.1,58.2 176.4,55.8 176.7,61.3 177.0,62.9 177.3,74.7 177.6,48.7 177.9,59.8 178.2,76.3 178.5,76.3 178.9,74.7 179.2,71.5 179.5,85.7 179.8,63.7 180.1,68.4 180.4,69.2 180.7,80.2 181.0,81.8 181.3,81.0 181.6,84.9 181.9,84.1 182.2,90.4 182.5,95.1 182.8,91.2 183.1,101.4 183.4,95.9 183.7,86.5 184.0,95.9 184.3,103.0 184.6,89.6 184.9,95.9 185.2,105.4 185.5,103.0 185.8,101.4 186.2,105.4 186.5,99.1 186.8,104.6 187.1,108.5 187.4,112.4 187.7,114.8 188.0,111.6 188.3,108.5 188.6,115.6 188.9,112.4 189.2,116.4 189.5,110.9 189.8,109.3 190.1,113.2 190.4,114.8 190.7,117.9 191.0,117.2 191.3,114.8 191.6,118.7 191.9,119.5 192.2,117.9 192.5,117.2 192.8,120.3 193.1,119.5 193.5,122.7 193.8,120.3 194.1,119.5 194.4,119.5 194.7,120.3 195.0,119.5 195.3,121.9 195.6,122.7 195.9,120.3 196.2,123.4 196.5,120.3 196.8,122.7 197.1,124.2 197.4,119.5 197.7,121.1 198.0,119.5 198.3,117.9 198.6,125.8 198.9,123.4 199.2,121.1 199.5,119.5 199.8,123.4 200.1,122.7 200.4,121.1 200.8,120.3 201.1,120.3 201.4,123.4 201.7,125.8 202.0,122.7 202.3,122.7 202.6,121.1 202.9,121.9 203.2,122.7 203.5,120.3 203.8,121.9 204.1,125.8 204.4,121.9 204.7,123.4 205.0,122.7 205.3,123.4 205.6,124.2 205.9,123.4 206.2,123.4 206.5,119.5 206.8,121.1 207.1,121.9 207.4,123.4 207.7,120.3 208.1,120.3 208.4,122.7 208.7,124.2 209.0,121.1 209.3,125.0 209.6,121.1 209.9,125.8 210.2,122.7 210.5,122.7 210.8,122.7 211.1,123.4 211.4,120.3 211.7,124.2 212.0,124.2 212.3,123.4 212.6,122.7 212.9,123.4 213.2,124.2 213.5,125.8 213.8,121.1 214.1,121.9 214.4,121.9 214.7,123.4 215.0,124.2 215.4,120.3 215.7,123.4 216.0,122.7 216.3,123.4 216.6,121.9 216.9,125.8 217.2,122.7 217.5,122.7 217.8,121.1 218.1,121.1 218.4,123.4 218.7,124.2 219.0,125.0 219.3,121.9 219.6,121.9 219.9,121.9 220.2,121.9 220.5,121.1 220.8,121.9 221.1,119.5 221.4,124.2 221.7,123.4 222.0,124.2 222.3,122.7 222.7,125.8 223.0,122.7 223.3,120.3 223.6,121.1 223.9,121.1 224.2,125.0 224.5,122.7 224.8,121.9 225.1,121.1 225.4,121.9 225.7,121.1 226.0,121.9 226.3,123.4 226.6,123.4 226.9,120.3 227.2,121.1 227.5,119.5 227.8,123.4 228.1,121.1 228.4,123.4 228.7,121.1 229.0,124.2 229.3,121.9 229.6,123.4 230.0,121.9 230.3,119.5 230.6,121.1 230.9,121.1 231.2,125.0 231.5,125.8 231.8,121.9 232.1,121.9 232.4,121.9 232.7,120.3 233.0,123.4 233.3,124.2 233.6,122.7 233.9,122.7 234.2,124.2 234.5,121.9 234.8,124.2 235.1,121.1 235.4,124.2 235.7,119.5 236.0,124.2 236.3,119.5 236.6,119.5 236.9,122.7 237.3,123.4 237.6,123.4 237.9,119.5 238.2,119.5 238.5,121.1 238.8,120.3 239.1,117.9 239.4,117.9 239.7,117.2 240.0,124.2 240.3,122.7 240.6,121.1 240.9,119.5 241.2,116.4 241.5,117.2 241.8,117.9 242.1,117.9 242.4,123.4 242.7,117.9 243.0,119.5 243.3,117.2 243.6,114.0 243.9,117.2 244.2,118.7 244.6,121.9 244.9,114.8 245.2,117.2 245.5,122.7 245.8,121.9 246.1,121.1 246.4,122.7 246.7,123.4 247.0,118.7 247.3,119.5 247.6,120.3 247.9,123.4 248.2,121.9 248.5,124.2 248.8,121.9 249.1,121.1 249.4,121.1 249.7,119.5 250.0,121.9 250.3,122.7 250.6,122.7 250.9,121.9 251.2,121.9 251.5,122.7 251.9,125.8 252.2,122.7 252.5,121.9 252.8,125.8 253.1,125.0 253.4,123.4 253.7,123.4 254.0,123.4 254.3,125.8 254.6,124.2 254.9,123.4 255.2,124.2 255.5,124.2 255.8,125.8 256.1,125.8 256.4,124.2 256.7,122.7 257.0,125.0 257.3,125.0 257.6,125.0 257.9,125.8 258.2,125.8 258.5,125.8 258.8,125.8 259.2,125.0 259.5,125.8 259.8,125.8 260.1,125.0 260.4,125.8 260.7,125.0 261.0,125.8 261.3,125.0 261.6,125.0 261.9,125.8 262.2,125.0 262.5,125.0 262.8,125.0 263.1,125.8 263.4,125.8 263.7,125.8 264.0,125.8 264.3,125.8 264.6,125.8 264.9,125.8 265.2,125.8 265.5,125.8 265.8,125.8 266.1,125.8 266.5,125.8 266.8,125.8 267.1,125.8 267.4,125.8 267.7,125.8 268.0,125.8 268.3,125.8 268.6,125.8 268.9,125.0 269.2,125.8 269.5,125.8 269.8,125.8 270.1,125.8 270.4,125.8 270.7,125.8 271.0,125.8 271.3,125.8 271.6,125.8 271.9,125.8 272.2,125.8 272.5,125.8 272.8,125.8 273.1,125.8 273.4,125.8 273.8,125.8 274.1,125.8 274.4,125.8 274.7,125.8 275.0,125.8 275.3,125.8 275.6,125.8 275.9,125.8 276.2,125.8 276.5,125.8 276.8,125.8 277.1,125.8 277.4,125.8 277.7,125.8 278.0,125.8 278.3,125.8 278.6,125.8 278.9,125.8 279.2,125.8 279.5,125.8 279.8,125.8 280.1,125.8 280.4,125.8 280.7,125.8 281.1,125.8 281.4,125.8 281.7,125.8 282.0,125.8 282.3,125.8 282.6,125.8 282.9,125.8 283.2,125.8 283.5,125.8 283.8,125.8 284.1,125.8 284.4,125.8 284.7,125.8 285.0,125.8 285.3,125.8 285.6,125.8 285.9,125.8 286.2,125.8 286.5,125.8 286.8,125.8 287.1,125.8 287.4,125.8 287.7,125.8 288.0,125.8 288.4,125.8 288.7,125.8 289.0,125.8 289.3,125.8 289.6,125.8 289.9,125.8 290.2,125.8 290.5,125.8 290.8,125.8 291.1,125.8 291.4,125.8 291.7,125.8 292.0,125.8 292.3,125.8 292.6,125.8 292.9,125.8 293.2,125.8 293.5,125.8 293.8,125.8 294.1,125.8 294.4,125.8 294.7,125.8 295.0,125.8 295.3,125.8 295.7,125.8 296.0,125.8 296.3,125.8 296.6,125.8 296.9,125.8 297.2,125.8 297.5,125.8 297.8,125.8 298.1,125.8 298.4,125.8 298.7,125.8 299.0,125.8 299.3,125.8 299.6,125.8 299.9,125.8 300.2,125.8 300.5,125.8 300.8,125.8 301.1,125.8 301.4,125.8 301.7,125.8 302.0,125.8 302.3,125.8 302.6,125.8 303.0,125.8 303.3,125.8 303.6,125.8 303.9,125.8 304.2,125.8 304.5,125.8 304.8,125.8 305.1,125.8 305.4,125.8 305.7,125.8 306.0,125.8 306.3,125.8 306.6,125.8 306.9,125.8 307.2,125.8 307.5,125.8 307.8,125.8 308.1,125.8 308.4,125.8 308.7,125.8 309.0,125.8 309.3,125.8 309.6,125.8 309.9,125.8 310.3,125.8 310.6,125.8 310.9,125.8 311.2,125.8 311.5,125.8 311.8,125.8 312.1,125.8 312.4,125.8 312.7,125.8 313.0,125.8 313.3,125.8 313.6,125.8 313.9,125.8 314.2,125.8 314.5,125.8 314.8,125.8 315.1,125.8 315.4,125.8 315.7,125.8 316.0,125.8 316.3,125.8 316.6,125.8 316.9,125.8 317.2,125.8 317.6,125.8 317.9,125.8 318.2,125.8 318.5,125.8 318.8,125.8 319.1,125.8 319.4,125.8 319.7,125.8 320.0,125.8 320.3,125.8 320.6,125.8 320.9,125.8 321.2,125.8 321.5,125.8 321.8,125.8 322.1,125.8 322.4,125.8 322.7,125.8 323.0,125.8 323.3,125.8 323.6,125.8 323.9,125.8 324.2,125.8 324.5,125.8 324.9,125.8 325.2,125.8 325.5,125.8 325.8,125.8 326.1,125.8 326.4,125.8 326.7,125.8 327.0,125.8 327.3,125.8 327.6,125.8 327.9,125.8 328.2,125.8 328.5,125.8 328.8,125.8 329.1,125.8 329.4,125.8 329.7,125.8 330.0,125.8 330.3,125.8 330.6,125.8 330.9,125.8 331.2,125.8 331.5,125.8 331.8,125.8 332.2,125.8 332.5,125.8 332.8,125.8 333.1,125.8 333.4,125.8 333.7,125.8 334.0,125.8 334.3,125.8 334.6,125.8 334.9,125.8 335.2,125.8 335.5,125.8 335.8,125.8 336.1,125.8 336.4,125.8 336.7,125.8 337.0,125.8 337.3,125.8 337.6,125.8 337.9,125.8 338.2,125.8 338.5,125.8 338.8,125.8 339.1,125.8 339.5,125.8 339.8,125.8 340.1,125.8 340.4,125.8 340.7,125.8 341.0,125.8 341.3,125.8 341.6,125.8 341.9,125.8 342.2,125.8 342.5,125.8 342.8,125.8 343.1,125.8 343.4,125.8 343.7,125.8 344.0,125.8 344.3,125.8 344.6,125.8 344.9,125.8 345.2,125.8 345.5,125.8 345.8,125.8 346.1,125.8 346.4,125.8 346.8,125.8 347.1,125.8 347.4,125.8 347.7,125.8 348.0,125.8 348.3,125.8 348.6,125.8 348.9,125.8 349.2,125.8 349.5,125.8 349.8,125.8 350.1,125.8 350.4,125.8 350.7,125.8 351.0,125.8 351.3,125.8 351.6,125.8 351.9,125.8 352.2,125.8 352.5,125.8 352.8,125.8 353.1,125.8 353.4,125.8 353.7,125.8 354.1,125.8 354.4,125.8 354.7,125.8 355.0,125.8 355.3,125.8 355.6,125.8 355.9,125.8 356.2,125.8 356.5,125.8 356.8,125.8 357.1,125.8 357.4,125.8"/>
<rect x="-0.8" y="-0.8" width="359.1" height="127.4" fill="none" stroke="#808080" stroke-width="1.6"/>
<text class="tk" x="23.1" y="139.6" text-anchor="middle">31500</text>
<text class="tk" x="73.8" y="139.6" text-anchor="middle">31750</text>
<text class="tk" x="124.5" y="139.6" text-anchor="middle">32000</text>
<text class="tk" x="175.2" y="139.6" text-anchor="middle">32250</text>
<text class="tk" x="225.9" y="139.6" text-anchor="middle">32500</text>
<text class="tk" x="276.6" y="139.6" text-anchor="middle">32750</text>
<text class="tk" x="327.3" y="139.6" text-anchor="middle">33000</text>
<text class="tk" x="-4.4" y="129.6" text-anchor="end">0</text>
<text class="tk" x="-4.4" y="90.3" text-anchor="end">50</text>
<text class="tk" x="-4.4" y="51.0" text-anchor="end">100</text>
<text class="tk" x="-4.4" y="11.7" text-anchor="end">150</text>
<rect x="265.5" y="7.3" width="14" height="10.8" fill="#fff" stroke="#ccc" stroke-width="0.8"/>
<rect x="267.3" y="8.9" width="10.6" height="7.6" fill="#0000ff"/>
<text class="lg" x="283.2" y="17.1" fill="#8c8c8c">aida01 1.8.L</text>
<path d="M357.1,-9.9 l9.9,9.9 l-9.9,9.9 l-9.9,-9.9 z" fill="#ff0000"/>
</g></svg>
<svg class="ch" style="left:745.5px;top:356.6px" width="420" height="160" viewBox="0 0 420 160">
<g transform="translate(40,20)">
<line x1="23.00" y1="0" x2="23.00" y2="125.8" stroke="#e9e9e9" stroke-width="1"/>
<line x1="74.00" y1="0" x2="74.00" y2="125.8" stroke="#e9e9e9" stroke-width="1"/>
<line x1="125.00" y1="0" x2="125.00" y2="125.8" stroke="#e9e9e9" stroke-width="1"/>
<line x1="175.00" y1="0" x2="175.00" y2="125.8" stroke="#e9e9e9" stroke-width="1"/>
<line x1="226.00" y1="0" x2="226.00" y2="125.8" stroke="#e9e9e9" stroke-width="1"/>
<line x1="277.00" y1="0" x2="277.00" y2="125.8" stroke="#e9e9e9" stroke-width="1"/>
<line x1="327.00" y1="0" x2="327.00" y2="125.8" stroke="#e9e9e9" stroke-width="1"/>
<line x1="0" y1="86.90" x2="357.5" y2="86.90" stroke="#e9e9e9" stroke-width="1"/>
<line x1="0" y1="46.90" x2="357.5" y2="46.90" stroke="#e9e9e9" stroke-width="1"/>
<line x1="0" y1="7.90" x2="357.5" y2="7.90" stroke="#e9e9e9" stroke-width="1"/>
<clipPath id="cp1"><rect x="0" y="0" width="357.5" height="126.8"/></clipPath>
<polyline clip-path="url(#cp1)" fill="none" stroke="#0000ff" stroke-width="1.0" stroke-linejoin="round" points="0.0,125.8 0.3,125.8 0.6,125.8 0.9,125.8 1.2,125.8 1.5,125.8 1.8,125.8 2.1,125.8 2.4,125.8 2.7,125.8 3.0,125.8 3.3,125.8 3.7,125.8 4.0,125.8 4.3,125.8 4.6,125.8 4.9,125.8 5.2,125.8 5.5,125.8 5.8,125.8 6.1,125.8 6.4,125.8 6.7,125.8 7.0,125.8 7.3,125.8 7.6,125.8 7.9,125.8 8.2,125.8 8.5,125.8 8.8,125.8 9.1,125.8 9.4,125.8 9.7,125.8 10.0,125.8 10.3,125.8 10.6,125.8 11.0,125.8 11.3,125.8 11.6,125.8 11.9,125.8 12.2,125.8 12.5,125.8 12.8,125.8 13.1,125.8 13.4,125.8 13.7,125.8 14.0,125.8 14.3,125.8 14.6,125.8 14.9,125.8 15.2,125.8 15.5,125.8 15.8,125.8 16.1,125.8 16.4,125.8 16.7,125.8 17.0,125.8 17.3,125.8 17.6,125.8 17.9,125.8 18.3,125.8 18.6,125.8 18.9,125.8 19.2,125.8 19.5,125.8 19.8,125.8 20.1,125.8 20.4,125.8 20.7,125.8 21.0,125.8 21.3,125.8 21.6,125.8 21.9,125.8 22.2,125.8 22.5,125.8 22.8,125.8 23.1,125.8 23.4,125.8 23.7,125.8 24.0,125.8 24.3,125.8 24.6,125.8 24.9,125.8 25.2,125.8 25.6,125.8 25.9,125.8 26.2,125.8 26.5,125.8 26.8,125.8 27.1,125.8 27.4,125.8 27.7,125.8 28.0,125.8 28.3,125.8 28.6,125.8 28.9,125.8 29.2,125.8 29.5,125.8 29.8,125.8 30.1,125.8 30.4,125.8 30.7,125.8 31.0,125.8 31.3,125.8 31.6,125.8 31.9,125.8 32.2,125.8 32.5,125.8 32.9,125.8 33.2,125.8 33.5,125.8 33.8,125.8 34.1,125.8 34.4,125.8 34.7,125.8 35.0,125.8 35.3,125.8 35.6,125.8 35.9,125.8 36.2,125.8 36.5,125.8 36.8,125.8 37.1,125.8 37.4,125.8 37.7,125.8 38.0,125.8 38.3,125.8 38.6,125.8 38.9,125.8 39.2,125.8 39.5,125.8 39.8,125.8 40.2,125.8 40.5,125.8 40.8,125.8 41.1,125.8 41.4,125.8 41.7,125.8 42.0,125.8 42.3,125.8 42.6,125.8 42.9,125.8 43.2,125.8 43.5,125.8 43.8,125.8 44.1,125.8 44.4,125.8 44.7,125.8 45.0,125.8 45.3,125.8 45.6,125.8 45.9,125.8 46.2,125.8 46.5,125.8 46.8,125.8 47.1,125.8 47.5,125.8 47.8,125.8 48.1,125.8 48.4,125.8 48.7,125.8 49.0,125.8 49.3,125.8 49.6,125.8 49.9,125.8 50.2,125.8 50.5,125.8 50.8,125.8 51.1,125.8 51.4,125.8 51.7,125.8 52.0,125.8 52.3,125.8 52.6,125.8 52.9,125.8 53.2,125.8 53.5,125.8 53.8,125.8 54.1,125.8 54.4,125.8 54.8,125.8 55.1,125.8 55.4,125.8 55.7,125.8 56.0,125.8 56.3,125.0 56.6,125.8 56.9,125.8 57.2,125.8 57.5,125.8 57.8,125.8 58.1,125.8 58.4,125.8 58.7,125.8 59.0,125.8 59.3,125.8 59.6,125.8 59.9,125.8 60.2,125.8 60.5,125.8 60.8,125.8 61.1,125.8 61.4,125.8 61.7,125.8 62.1,125.8 62.4,125.8 62.7,125.8 63.0,125.8 63.3,125.8 63.6,125.8 63.9,125.8 64.2,125.8 64.5,125.8 64.8,125.8 65.1,125.8 65.4,125.8 65.7,125.8 66.0,125.8 66.3,125.8 66.6,125.0 66.9,125.8 67.2,125.8 67.5,125.8 67.8,125.8 68.1,125.8 68.4,125.8 68.7,125.0 69.0,125.8 69.4,125.8 69.7,125.8 70.0,125.8 70.3,125.8 70.6,125.0 70.9,125.0 71.2,125.8 71.5,125.8 71.8,125.8 72.1,125.8 72.4,125.8 72.7,125.8 73.0,125.8 73.3,125.8 73.6,125.8 73.9,125.8 74.2,125.8 74.5,125.8 74.8,125.8 75.1,125.8 75.4,125.0 75.7,125.0 76.0,125.8 76.3,125.0 76.7,125.8 77.0,125.0 77.3,125.0 77.6,125.0 77.9,125.0 78.2,125.8 78.5,125.0 78.8,124.2 79.1,125.0 79.4,125.0 79.7,125.8 80.0,125.0 80.3,125.8 80.6,125.0 80.9,125.8 81.2,125.0 81.5,125.8 81.8,125.8 82.1,125.8 82.4,125.8 82.7,125.8 83.0,125.0 83.3,125.8 83.6,125.8 84.0,125.8 84.3,125.8 84.6,125.0 84.9,125.8 85.2,125.8 85.5,125.0 85.8,125.8 86.1,125.0 86.4,125.8 86.7,125.8 87.0,125.8 87.3,124.2 87.6,125.0 87.9,125.8 88.2,125.0 88.5,125.8 88.8,125.8 89.1,125.0 89.4,125.8 89.7,125.0 90.0,125.0 90.3,125.0 90.6,125.0 90.9,125.0 91.3,125.8 91.6,125.8 91.9,125.8 92.2,125.8 92.5,125.0 92.8,125.0 93.1,125.8 93.4,124.2 93.7,125.0 94.0,125.0 94.3,125.8 94.6,125.8 94.9,125.8 95.2,124.2 95.5,125.8 95.8,125.0 96.1,125.8 96.4,124.2 96.7,125.0 97.0,125.8 97.3,125.8 97.6,125.8 97.9,124.2 98.2,125.8 98.6,125.8 98.9,125.8 99.2,125.0 99.5,124.2 99.8,125.8 100.1,125.8 100.4,125.8 100.7,125.0 101.0,125.0 101.3,125.8 101.6,125.8 101.9,125.0 102.2,125.0 102.5,125.8 102.8,125.0 103.1,125.0 103.4,125.0 103.7,125.8 104.0,125.0 104.3,125.0 104.6,124.2 104.9,125.0 105.2,125.0 105.5,125.0 105.9,125.0 106.2,125.8 106.5,125.0 106.8,125.0 107.1,123.4 107.4,124.2 107.7,124.2 108.0,124.2 108.3,125.0 108.6,124.2 108.9,125.0 109.2,124.2 109.5,125.8 109.8,125.8 110.1,122.7 110.4,125.0 110.7,125.0 111.0,125.0 111.3,124.2 111.6,124.2 111.9,121.1 112.2,122.7 112.5,123.4 112.8,121.1 113.2,124.2 113.5,121.9 113.8,121.9 114.1,125.0 114.4,120.3 114.7,120.3 115.0,121.9 115.3,125.0 115.6,118.7 115.9,119.5 116.2,117.9 116.5,121.9 116.8,116.4 117.1,114.0 117.4,120.3 117.7,114.0 118.0,114.8 118.3,111.6 118.6,110.9 118.9,118.7 119.2,107.7 119.5,114.8 119.8,113.2 120.1,110.1 120.5,110.9 120.8,101.4 121.1,110.9 121.4,101.4 121.7,110.1 122.0,101.4 122.3,99.9 122.6,104.6 122.9,92.8 123.2,93.6 123.5,85.7 123.8,88.8 124.1,98.3 124.4,93.6 124.7,88.8 125.0,86.5 125.3,89.6 125.6,94.3 125.9,82.6 126.2,84.1 126.5,82.6 126.8,73.9 127.1,79.4 127.4,80.2 127.8,69.2 128.1,71.5 128.4,70.8 128.7,72.3 129.0,72.3 129.3,62.1 129.6,69.2 129.9,77.1 130.2,68.4 130.5,46.4 130.8,52.7 131.1,62.1 131.4,53.5 131.7,54.3 132.0,47.2 132.3,48.7 132.6,54.3 132.9,40.1 133.2,51.1 133.5,51.1 133.8,33.8 134.1,61.3 134.4,54.3 134.7,38.5 135.1,36.2 135.4,40.9 135.7,44.8 136.0,51.9 136.3,42.5 136.6,48.0 136.9,36.2 137.2,47.2 137.5,55.8 137.8,61.3 138.1,49.5 138.4,45.6 138.7,33.8 139.0,44.0 139.3,51.9 139.6,51.1 139.9,59.8 140.2,58.2 140.5,53.5 140.8,44.0 141.1,62.9 141.4,54.3 141.7,59.0 142.0,64.5 142.4,66.0 142.7,66.8 143.0,59.8 143.3,77.1 143.6,74.7 143.9,77.8 144.2,77.8 144.5,80.2 144.8,77.8 145.1,79.4 145.4,88.8 145.7,86.5 146.0,92.0 146.3,95.1 146.6,86.5 146.9,92.0 147.2,87.3 147.5,94.3 147.8,98.3 148.1,97.5 148.4,98.3 148.7,103.0 149.0,101.4 149.3,105.4 149.7,104.6 150.0,108.5 150.3,106.9 150.6,107.7 150.9,115.6 151.2,105.4 151.5,110.9 151.8,106.1 152.1,116.4 152.4,117.2 152.7,106.1 153.0,112.4 153.3,114.8 153.6,115.6 153.9,120.3 154.2,119.5 154.5,119.5 154.8,117.9 155.1,113.2 155.4,118.7 155.7,120.3 156.0,114.8 156.3,119.5 156.6,118.7 157.0,119.5 157.3,118.7 157.6,117.2 157.9,121.1 158.2,125.0 158.5,119.5 158.8,121.9 159.1,121.1 159.4,120.3 159.7,122.7 160.0,120.3 160.3,124.2 160.6,119.5 160.9,124.2 161.2,124.2 161.5,120.3 161.8,124.2 162.1,123.4 162.4,121.9 162.7,124.2 163.0,122.7 163.3,123.4 163.6,125.0 163.9,122.7 164.3,123.4 164.6,124.2 164.9,123.4 165.2,121.9 165.5,121.9 165.8,125.8 166.1,121.1 166.4,122.7 166.7,122.7 167.0,120.3 167.3,123.4 167.6,122.7 167.9,122.7 168.2,122.7 168.5,121.1 168.8,123.4 169.1,122.7 169.4,124.2 169.7,124.2 170.0,123.4 170.3,124.2 170.6,123.4 170.9,122.7 171.2,121.1 171.6,125.0 171.9,121.1 172.2,125.0 172.5,122.7 172.8,121.1 173.1,119.5 173.4,121.9 173.7,120.3 174.0,125.8 174.3,125.0 174.6,124.2 174.9,121.9 175.2,123.4 175.5,119.5 175.8,121.1 176.1,120.3 176.4,122.7 176.7,123.4 177.0,123.4 177.3,121.9 177.6,123.4 177.9,119.5 178.2,121.9 178.5,120.3 178.9,121.9 179.2,122.7 179.5,123.4 179.8,123.4 180.1,121.9 180.4,121.9 180.7,125.0 181.0,122.7 181.3,121.9 181.6,123.4 181.9,121.1 182.2,125.8 182.5,125.0 182.8,122.7 183.1,121.9 183.4,123.4 183.7,123.4 184.0,122.7 184.3,125.0 184.6,125.0 184.9,123.4 185.2,121.1 185.5,119.5 185.8,121.9 186.2,120.3 186.5,124.2 186.8,122.7 187.1,121.1 187.4,121.1 187.7,122.7 188.0,120.3 188.3,123.4 188.6,121.1 188.9,121.1 189.2,119.5 189.5,117.9 189.8,123.4 190.1,121.1 190.4,120.3 190.7,123.4 191.0,119.5 191.3,121.9 191.6,123.4 191.9,125.0 192.2,120.3 192.5,117.2 192.8,121.1 193.1,120.3 193.5,116.4 193.8,115.6 194.1,118.7 194.4,121.1 194.7,124.2 195.0,122.7 195.3,117.9 195.6,118.7 195.9,114.0 196.2,118.7 196.5,117.9 196.8,118.7 197.1,114.8 197.4,122.7 197.7,118.7 198.0,119.5 198.3,121.9 198.6,116.4 198.9,117.9 199.2,115.6 199.5,115.6 199.8,114.8 200.1,114.8 200.4,117.2 200.8,118.7 201.1,118.7 201.4,116.4 201.7,114.8 202.0,116.4 202.3,117.2 202.6,112.4 202.9,115.6 203.2,117.2 203.5,119.5 203.8,116.4 204.1,117.9 204.4,117.9 204.7,114.8 205.0,117.9 205.3,119.5 205.6,118.7 205.9,122.7 206.2,119.5 206.5,119.5 206.8,119.5 207.1,116.4 207.4,118.7 207.7,114.8 208.1,119.5 208.4,118.7 208.7,114.0 209.0,117.2 209.3,121.1 209.6,118.7 209.9,120.3 210.2,120.3 210.5,117.2 210.8,117.9 211.1,121.1 211.4,117.9 211.7,121.1 212.0,121.1 212.3,124.2 212.6,117.9 212.9,117.9 213.2,121.9 213.5,121.9 213.8,119.5 214.1,119.5 214.4,125.8 214.7,123.4 215.0,121.1 215.4,124.2 215.7,125.0 216.0,121.1 216.3,121.1 216.6,122.7 216.9,123.4 217.2,123.4 217.5,122.7 217.8,123.4 218.1,125.0 218.4,121.9 218.7,121.9 219.0,125.0 219.3,122.7 219.6,124.2 219.9,123.4 220.2,125.0 220.5,125.0 220.8,123.4 221.1,123.4 221.4,124.2 221.7,123.4 222.0,124.2 222.3,125.8 222.7,125.0 223.0,124.2 223.3,124.2 223.6,124.2 223.9,124.2 224.2,125.8 224.5,125.0 224.8,125.8 225.1,125.0 225.4,125.8 225.7,125.8 226.0,125.8 226.3,125.0 226.6,125.0 226.9,125.0 227.2,125.0 227.5,125.0 227.8,125.8 228.1,125.0 228.4,125.0 228.7,125.8 229.0,125.0 229.3,125.8 229.6,125.8 230.0,125.8 230.3,125.8 230.6,125.8 230.9,125.8 231.2,125.8 231.5,125.8 231.8,125.8 232.1,125.8 232.4,125.8 232.7,125.8 233.0,125.8 233.3,125.8 233.6,125.8 233.9,125.8 234.2,125.8 234.5,125.8 234.8,125.0 235.1,125.8 235.4,125.8 235.7,125.8 236.0,125.8 236.3,125.8 236.6,125.8 236.9,125.8 237.3,125.8 237.6,125.8 237.9,125.8 238.2,125.8 238.5,125.8 238.8,125.8 239.1,125.8 239.4,125.8 239.7,125.8 240.0,125.8 240.3,125.8 240.6,125.8 240.9,125.8 241.2,125.8 241.5,125.8 241.8,125.8 242.1,125.8 242.4,125.8 242.7,125.8 243.0,125.8 243.3,125.8 243.6,125.8 243.9,125.8 244.2,125.8 244.6,125.8 244.9,125.8 245.2,125.8 245.5,125.8 245.8,125.8 246.1,125.8 246.4,125.8 246.7,125.8 247.0,125.8 247.3,125.8 247.6,125.8 247.9,125.8 248.2,125.8 248.5,125.8 248.8,125.8 249.1,125.8 249.4,125.8 249.7,125.8 250.0,125.8 250.3,125.8 250.6,125.8 250.9,125.8 251.2,125.8 251.5,125.8 251.9,125.8 252.2,125.8 252.5,125.8 252.8,125.8 253.1,125.8 253.4,125.8 253.7,125.8 254.0,125.8 254.3,125.8 254.6,125.8 254.9,125.8 255.2,125.8 255.5,125.8 255.8,125.8 256.1,125.8 256.4,125.8 256.7,125.8 257.0,125.8 257.3,125.8 257.6,125.8 257.9,125.8 258.2,125.8 258.5,125.8 258.8,125.8 259.2,125.8 259.5,125.8 259.8,125.8 260.1,125.8 260.4,125.8 260.7,125.8 261.0,125.8 261.3,125.8 261.6,125.8 261.9,125.8 262.2,125.8 262.5,125.8 262.8,125.8 263.1,125.8 263.4,125.8 263.7,125.8 264.0,125.8 264.3,125.8 264.6,125.8 264.9,125.8 265.2,125.8 265.5,125.8 265.8,125.8 266.1,125.8 266.5,125.8 266.8,125.8 267.1,125.8 267.4,125.8 267.7,125.8 268.0,125.8 268.3,125.8 268.6,125.8 268.9,125.8 269.2,125.8 269.5,125.8 269.8,125.8 270.1,125.8 270.4,125.8 270.7,125.8 271.0,125.8 271.3,125.8 271.6,125.8 271.9,125.8 272.2,125.8 272.5,125.8 272.8,125.8 273.1,125.8 273.4,125.8 273.8,125.8 274.1,125.8 274.4,125.8 274.7,125.8 275.0,125.8 275.3,125.8 275.6,125.8 275.9,125.8 276.2,125.8 276.5,125.8 276.8,125.8 277.1,125.8 277.4,125.8 277.7,125.8 278.0,125.8 278.3,125.8 278.6,125.8 278.9,125.8 279.2,125.8 279.5,125.8 279.8,125.8 280.1,125.8 280.4,125.8 280.7,125.8 281.1,125.8 281.4,125.8 281.7,125.8 282.0,125.8 282.3,125.8 282.6,125.8 282.9,125.8 283.2,125.8 283.5,125.8 283.8,125.8 284.1,125.8 284.4,125.8 284.7,125.8 285.0,125.8 285.3,125.8 285.6,125.8 285.9,125.8 286.2,125.8 286.5,125.8 286.8,125.8 287.1,125.8 287.4,125.8 287.7,125.8 288.0,125.8 288.4,125.8 288.7,125.8 289.0,125.8 289.3,125.8 289.6,125.8 289.9,125.8 290.2,125.8 290.5,125.8 290.8,125.8 291.1,125.8 291.4,125.8 291.7,125.8 292.0,125.8 292.3,125.8 292.6,125.8 292.9,125.8 293.2,125.8 293.5,125.8 293.8,125.8 294.1,125.8 294.4,125.8 294.7,125.8 295.0,125.8 295.3,125.8 295.7,125.8 296.0,125.8 296.3,125.8 296.6,125.8 296.9,125.8 297.2,125.8 297.5,125.8 297.8,125.8 298.1,125.8 298.4,125.8 298.7,125.8 299.0,125.8 299.3,125.8 299.6,125.8 299.9,125.8 300.2,125.8 300.5,125.8 300.8,125.8 301.1,125.8 301.4,125.8 301.7,125.8 302.0,125.8 302.3,125.8 302.6,125.8 303.0,125.8 303.3,125.8 303.6,125.8 303.9,125.8 304.2,125.8 304.5,125.8 304.8,125.8 305.1,125.8 305.4,125.8 305.7,125.8 306.0,125.8 306.3,125.8 306.6,125.8 306.9,125.8 307.2,125.8 307.5,125.8 307.8,125.8 308.1,125.8 308.4,125.8 308.7,125.8 309.0,125.8 309.3,125.8 309.6,125.8 309.9,125.8 310.3,125.8 310.6,125.8 310.9,125.8 311.2,125.8 311.5,125.8 311.8,125.8 312.1,125.8 312.4,125.8 312.7,125.8 313.0,125.8 313.3,125.8 313.6,125.8 313.9,125.8 314.2,125.8 314.5,125.8 314.8,125.8 315.1,125.8 315.4,125.8 315.7,125.8 316.0,125.8 316.3,125.8 316.6,125.8 316.9,125.8 317.2,125.8 317.6,125.8 317.9,125.8 318.2,125.8 318.5,125.8 318.8,125.8 319.1,125.8 319.4,125.8 319.7,125.8 320.0,125.8 320.3,125.8 320.6,125.8 320.9,125.8 321.2,125.8 321.5,125.8 321.8,125.8 322.1,125.8 322.4,125.8 322.7,125.8 323.0,125.8 323.3,125.8 323.6,125.8 323.9,125.8 324.2,125.8 324.5,125.8 324.9,125.8 325.2,125.8 325.5,125.8 325.8,125.8 326.1,125.8 326.4,125.8 326.7,125.8 327.0,125.8 327.3,125.8 327.6,125.8 327.9,125.8 328.2,125.8 328.5,125.8 328.8,125.8 329.1,125.8 329.4,125.8 329.7,125.8 330.0,125.8 330.3,125.8 330.6,125.8 330.9,125.8 331.2,125.8 331.5,125.8 331.8,125.8 332.2,125.8 332.5,125.8 332.8,125.8 333.1,125.8 333.4,125.8 333.7,125.8 334.0,125.8 334.3,125.8 334.6,125.8 334.9,125.8 335.2,125.8 335.5,125.8 335.8,125.8 336.1,125.8 336.4,125.8 336.7,125.8 337.0,125.8 337.3,125.8 337.6,125.8 337.9,125.8 338.2,125.8 338.5,125.8 338.8,125.8 339.1,125.8 339.5,125.8 339.8,125.8 340.1,125.8 340.4,125.8 340.7,125.8 341.0,125.8 341.3,125.8 341.6,125.8 341.9,125.8 342.2,125.8 342.5,125.8 342.8,125.8 343.1,125.8 343.4,125.8 343.7,125.8 344.0,125.8 344.3,125.8 344.6,125.8 344.9,125.8 345.2,125.8 345.5,125.8 345.8,125.8 346.1,125.8 346.4,125.8 346.8,125.8 347.1,125.8 347.4,125.8 347.7,125.8 348.0,125.8 348.3,125.8 348.6,125.8 348.9,125.8 349.2,125.8 349.5,125.8 349.8,125.8 350.1,125.8 350.4,125.8 350.7,125.8 351.0,125.8 351.3,125.8 351.6,125.8 351.9,125.8 352.2,125.8 352.5,125.8 352.8,125.8 353.1,125.8 353.4,125.8 353.7,125.8 354.1,125.8 354.4,125.8 354.7,125.8 355.0,125.8 355.3,125.8 355.6,125.8 355.9,125.8 356.2,125.8 356.5,125.8 356.8,125.8 357.1,125.8 357.4,125.8"/>
<rect x="-0.8" y="-0.8" width="359.1" height="127.4" fill="none" stroke="#808080" stroke-width="1.6"/>
<text class="tk" x="23.1" y="139.6" text-anchor="middle">31500</text>
<text class="tk" x="73.8" y="139.6" text-anchor="middle">31750</text>
<text class="tk" x="124.5" y="139.6" text-anchor="middle">32000</text>
<text class="tk" x="175.2" y="139.6" text-anchor="middle">32250</text>
<text class="tk" x="225.9" y="139.6" text-anchor="middle">32500</text>
<text class="tk" x="276.6" y="139.6" text-anchor="middle">32750</text>
<text class="tk" x="327.3" y="139.6" text-anchor="middle">33000</text>
<text class="tk" x="-4.4" y="129.6" text-anchor="end">0</text>
<text class="tk" x="-4.4" y="90.3" text-anchor="end">50</text>
<text class="tk" x="-4.4" y="51.0" text-anchor="end">100</text>
<text class="tk" x="-4.4" y="11.7" text-anchor="end">150</text>
<rect x="265.5" y="7.3" width="14" height="10.8" fill="#fff" stroke="#ccc" stroke-width="0.8"/>
<rect x="267.3" y="8.9" width="10.6" height="7.6" fill="#0000ff"/>
<text class="lg" x="283.2" y="17.1" fill="#8c8c8c">aida02 1.8.L</text>
<path d="M357.1,-9.9 l9.9,9.9 l-9.9,9.9 l-9.9,-9.9 z" fill="#ff0000"/>
</g></svg>
<svg class="ch" style="left:1380.5px;top:356.6px" width="420" height="160" viewBox="0 0 420 160">
<g transform="translate(40,20)">
<line x1="23.00" y1="0" x2="23.00" y2="125.8" stroke="#e9e9e9" stroke-width="1"/>
<line x1="74.00" y1="0" x2="74.00" y2="125.8" stroke="#e9e9e9" stroke-width="1"/>
<line x1="125.00" y1="0" x2="125.00" y2="125.8" stroke="#e9e9e9" stroke-width="1"/>
<line x1="175.00" y1="0" x2="175.00" y2="125.8" stroke="#e9e9e9" stroke-width="1"/>
<line x1="226.00" y1="0" x2="226.00" y2="125.8" stroke="#e9e9e9" stroke-width="1"/>
<line x1="277.00" y1="0" x2="277.00" y2="125.8" stroke="#e9e9e9" stroke-width="1"/>
<line x1="327.00" y1="0" x2="327.00" y2="125.8" stroke="#e9e9e9" stroke-width="1"/>
<line x1="0" y1="86.90" x2="357.5" y2="86.90" stroke="#e9e9e9" stroke-width="1"/>
<line x1="0" y1="46.90" x2="357.5" y2="46.90" stroke="#e9e9e9" stroke-width="1"/>
<line x1="0" y1="7.90" x2="357.5" y2="7.90" stroke="#e9e9e9" stroke-width="1"/>
<clipPath id="cp2"><rect x="0" y="0" width="357.5" height="126.8"/></clipPath>
<polyline clip-path="url(#cp2)" fill="none" stroke="#0000ff" stroke-width="1.0" stroke-linejoin="round" points="0.0,125.8 0.3,125.8 0.6,125.8 0.9,125.8 1.2,125.8 1.5,125.8 1.8,125.8 2.1,125.8 2.4,125.8 2.7,125.8 3.0,125.8 3.3,125.8 3.7,125.8 4.0,125.8 4.3,125.8 4.6,125.8 4.9,125.8 5.2,125.8 5.5,125.8 5.8,125.8 6.1,125.8 6.4,125.8 6.7,125.8 7.0,125.8 7.3,125.8 7.6,125.8 7.9,125.8 8.2,125.8 8.5,125.8 8.8,125.8 9.1,125.8 9.4,125.8 9.7,125.8 10.0,125.8 10.3,125.8 10.6,125.8 11.0,125.8 11.3,125.8 11.6,125.8 11.9,125.8 12.2,125.8 12.5,125.8 12.8,125.8 13.1,125.8 13.4,125.8 13.7,125.8 14.0,125.8 14.3,125.8 14.6,125.8 14.9,125.8 15.2,125.8 15.5,125.8 15.8,125.8 16.1,125.8 16.4,125.8 16.7,125.8 17.0,125.8 17.3,125.8 17.6,125.8 17.9,125.8 18.3,125.8 18.6,125.8 18.9,125.8 19.2,125.8 19.5,125.8 19.8,125.8 20.1,125.8 20.4,125.8 20.7,125.8 21.0,125.8 21.3,125.8 21.6,125.8 21.9,125.8 22.2,125.8 22.5,125.8 22.8,125.8 23.1,125.8 23.4,125.8 23.7,125.8 24.0,125.8 24.3,125.8 24.6,125.8 24.9,125.8 25.2,125.8 25.6,125.8 25.9,125.8 26.2,125.8 26.5,125.8 26.8,125.8 27.1,125.8 27.4,125.8 27.7,125.8 28.0,125.8 28.3,125.8 28.6,125.8 28.9,125.8 29.2,125.8 29.5,125.8 29.8,125.8 30.1,125.8 30.4,125.8 30.7,125.8 31.0,125.8 31.3,125.8 31.6,125.8 31.9,125.8 32.2,125.8 32.5,125.8 32.9,125.8 33.2,125.8 33.5,125.8 33.8,125.8 34.1,125.8 34.4,125.8 34.7,125.8 35.0,125.8 35.3,125.8 35.6,125.8 35.9,125.8 36.2,125.8 36.5,125.8 36.8,125.8 37.1,125.8 37.4,125.8 37.7,125.8 38.0,125.8 38.3,125.8 38.6,125.8 38.9,125.8 39.2,125.8 39.5,125.8 39.8,125.8 40.2,125.8 40.5,125.8 40.8,125.8 41.1,125.8 41.4,125.8 41.7,125.8 42.0,125.8 42.3,125.8 42.6,125.8 42.9,125.8 43.2,125.8 43.5,125.8 43.8,125.8 44.1,125.8 44.4,125.8 44.7,125.8 45.0,125.8 45.3,125.8 45.6,125.8 45.9,125.8 46.2,125.8 46.5,125.8 46.8,125.8 47.1,125.8 47.5,125.8 47.8,125.8 48.1,125.8 48.4,125.8 48.7,125.8 49.0,125.8 49.3,125.8 49.6,125.8 49.9,125.8 50.2,125.8 50.5,125.8 50.8,125.8 51.1,125.8 51.4,125.8 51.7,125.8 52.0,125.8 52.3,125.8 52.6,125.8 52.9,125.8 53.2,125.8 53.5,125.8 53.8,125.8 54.1,125.8 54.4,125.8 54.8,125.8 55.1,125.8 55.4,125.8 55.7,125.8 56.0,125.8 56.3,125.8 56.6,125.8 56.9,125.8 57.2,125.8 57.5,125.8 57.8,125.8 58.1,125.8 58.4,125.8 58.7,125.8 59.0,125.8 59.3,125.8 59.6,125.8 59.9,125.8 60.2,125.8 60.5,125.8 60.8,125.8 61.1,125.8 61.4,125.8 61.7,125.8 62.1,125.8 62.4,125.8 62.7,125.8 63.0,125.8 63.3,125.8 63.6,125.8 63.9,125.8 64.2,125.8 64.5,125.8 64.8,125.8 65.1,125.8 65.4,125.8 65.7,125.8 66.0,125.8 66.3,125.8 66.6,125.8 66.9,125.8 67.2,125.8 67.5,125.8 67.8,125.8 68.1,125.8 68.4,125.8 68.7,125.8 69.0,125.8 69.4,125.8 69.7,125.8 70.0,125.8 70.3,125.8 70.6,125.8 70.9,125.8 71.2,125.8 71.5,125.8 71.8,125.8 72.1,125.8 72.4,125.8 72.7,125.8 73.0,125.8 73.3,125.8 73.6,125.0 73.9,125.8 74.2,125.8 74.5,125.8 74.8,125.8 75.1,125.8 75.4,125.8 75.7,125.8 76.0,125.8 76.3,125.8 76.7,125.8 77.0,125.8 77.3,125.8 77.6,125.8 77.9,125.8 78.2,125.8 78.5,125.8 78.8,125.8 79.1,125.8 79.4,125.8 79.7,125.8 80.0,125.8 80.3,125.8 80.6,125.8 80.9,125.8 81.2,125.8 81.5,125.8 81.8,125.8 82.1,125.8 82.4,125.8 82.7,125.0 83.0,125.8 83.3,125.8 83.6,125.8 84.0,125.8 84.3,125.8 84.6,125.8 84.9,125.8 85.2,125.8 85.5,125.8 85.8,125.8 86.1,125.8 86.4,125.8 86.7,125.8 87.0,125.8 87.3,125.8 87.6,125.8 87.9,125.8 88.2,125.8 88.5,125.8 88.8,125.8 89.1,125.8 89.4,125.8 89.7,125.8 90.0,125.8 90.3,125.8 90.6,125.8 90.9,125.8 91.3,125.8 91.6,125.8 91.9,125.8 92.2,125.8 92.5,125.8 92.8,125.8 93.1,125.8 93.4,125.8 93.7,125.8 94.0,125.8 94.3,125.8 94.6,125.8 94.9,125.8 95.2,125.8 95.5,125.0 95.8,125.8 96.1,125.8 96.4,125.8 96.7,125.8 97.0,125.8 97.3,125.8 97.6,125.8 97.9,125.8 98.2,125.8 98.6,125.8 98.9,125.8 99.2,125.8 99.5,125.8 99.8,125.8 100.1,125.8 100.4,125.8 100.7,125.8 101.0,125.8 101.3,125.8 101.6,125.8 101.9,125.8 102.2,125.0 102.5,125.8 102.8,125.0 103.1,125.8 103.4,125.8 103.7,125.8 104.0,125.0 104.3,125.8 104.6,125.8 104.9,125.8 105.2,125.8 105.5,125.8 105.9,125.8 106.2,125.0 106.5,125.8 106.8,125.0 107.1,125.8 107.4,125.8 107.7,125.0 108.0,125.8 108.3,125.8 108.6,125.8 108.9,125.0 109.2,125.8 109.5,125.0 109.8,125.8 110.1,125.0 110.4,125.8 110.7,125.0 111.0,125.8 111.3,125.8 111.6,125.8 111.9,125.0 112.2,125.8 112.5,125.8 112.8,125.8 113.2,125.8 113.5,125.0 113.8,125.8 114.1,125.0 114.4,125.8 114.7,125.0 115.0,125.8 115.3,125.8 115.6,125.8 115.9,125.8 116.2,125.8 116.5,125.0 116.8,125.8 117.1,125.8 117.4,125.0 117.7,125.8 118.0,125.8 118.3,125.0 118.6,125.0 118.9,125.0 119.2,125.8 119.5,125.0 119.8,125.8 120.1,125.0 120.5,125.8 120.8,125.0 121.1,125.8 121.4,125.8 121.7,125.8 122.0,125.8 122.3,125.8 122.6,125.0 122.9,125.8 123.2,125.8 123.5,125.8 123.8,125.0 124.1,125.8 124.4,125.8 124.7,125.8 125.0,125.0 125.3,125.8 125.6,125.8 125.9,125.8 126.2,125.8 126.5,125.8 126.8,125.8 127.1,125.8 127.4,125.8 127.8,125.8 128.1,125.0 128.4,125.8 128.7,125.8 129.0,125.8 129.3,125.8 129.6,125.8 129.9,125.8 130.2,125.0 130.5,125.0 130.8,125.8 131.1,125.8 131.4,125.8 131.7,125.0 132.0,125.8 132.3,125.0 132.6,125.0 132.9,125.0 133.2,125.0 133.5,125.8 133.8,125.8 134.1,125.8 134.4,125.8 134.7,125.8 135.1,125.8 135.4,125.8 135.7,125.8 136.0,125.8 136.3,125.0 136.6,125.0 136.9,125.8 137.2,125.8 137.5,125.8 137.8,125.0 138.1,125.8 138.4,125.8 138.7,125.8 139.0,125.0 139.3,125.8 139.6,125.8 139.9,125.8 140.2,125.8 140.5,125.8 140.8,125.8 141.1,125.8 141.4,125.8 141.7,125.0 142.0,125.8 142.4,125.0 142.7,125.8 143.0,125.8 143.3,124.2 143.6,125.8 143.9,125.8 144.2,125.0 144.5,125.8 144.8,125.8 145.1,125.0 145.4,125.8 145.7,125.8 146.0,125.8 146.3,125.8 146.6,125.0 146.9,125.0 147.2,125.8 147.5,125.0 147.8,125.0 148.1,125.8 148.4,125.8 148.7,125.0 149.0,125.8 149.3,125.8 149.7,125.0 150.0,124.2 150.3,125.8 150.6,125.8 150.9,125.0 151.2,125.0 151.5,125.0 151.8,125.0 152.1,125.8 152.4,125.8 152.7,125.0 153.0,125.8 153.3,125.0 153.6,125.8 153.9,125.8 154.2,125.8 154.5,125.0 154.8,125.0 155.1,125.8 155.4,125.8 155.7,124.2 156.0,125.0 156.3,125.8 156.6,125.0 157.0,125.0 157.3,125.8 157.6,125.0 157.9,125.0 158.2,123.4 158.5,125.0 158.8,122.7 159.1,121.9 159.4,119.5 159.7,118.7 160.0,119.5 160.3,121.9 160.6,119.5 160.9,117.9 161.2,114.8 161.5,110.9 161.8,107.7 162.1,112.4 162.4,109.3 162.7,113.2 163.0,114.0 163.3,103.8 163.6,97.5 163.9,100.6 164.3,96.7 164.6,97.5 164.9,85.7 165.2,77.8 165.5,78.6 165.8,81.0 166.1,62.1 166.4,77.1 166.7,66.0 167.0,64.5 167.3,45.6 167.6,55.0 167.9,40.1 168.2,39.3 168.5,29.1 168.8,18.9 169.1,14.2 169.4,4.7 169.7,11.8 170.0,17.3 170.3,3.9 170.6,-0.8 170.9,7.1 171.2,2.4 171.6,-11.0 171.9,3.1 172.2,-3.1 172.5,10.2 172.8,6.3 173.1,0.8 173.4,-16.5 173.7,-18.9 174.0,0.0 174.3,-7.1 174.6,19.7 174.9,4.7 175.2,0.8 175.5,22.0 175.8,14.9 176.1,16.5 176.4,21.2 176.7,22.0 177.0,48.7 177.3,62.1 177.6,44.8 177.9,53.5 178.2,70.0 178.5,62.1 178.9,81.0 179.2,66.8 179.5,78.6 179.8,86.5 180.1,91.2 180.4,87.3 180.7,100.6 181.0,92.8 181.3,97.5 181.6,98.3 181.9,104.6 182.2,106.9 182.5,108.5 182.8,111.6 183.1,106.9 183.4,110.1 183.7,108.5 184.0,114.0 184.3,112.4 184.6,117.9 184.9,114.0 185.2,123.4 185.5,119.5 185.8,121.9 186.2,120.3 186.5,120.3 186.8,121.9 187.1,121.1 187.4,121.1 187.7,124.2 188.0,123.4 188.3,122.7 188.6,120.3 188.9,122.7 189.2,122.7 189.5,122.7 189.8,123.4 190.1,121.9 190.4,122.7 190.7,124.2 191.0,122.7 191.3,123.4 191.6,123.4 191.9,124.2 192.2,124.2 192.5,122.7 192.8,124.2 193.1,123.4 193.5,122.7 193.8,124.2 194.1,124.2 194.4,124.2 194.7,125.0 195.0,123.4 195.3,125.8 195.6,123.4 195.9,125.8 196.2,125.0 196.5,123.4 196.8,125.8 197.1,125.0 197.4,125.0 197.7,125.8 198.0,125.8 198.3,125.8 198.6,125.0 198.9,125.0 199.2,125.0 199.5,124.2 199.8,125.8 200.1,125.8 200.4,125.0 200.8,124.2 201.1,125.0 201.4,125.0 201.7,125.8 202.0,125.0 202.3,125.8 202.6,125.0 202.9,124.2 203.2,125.8 203.5,125.8 203.8,125.0 204.1,124.2 204.4,125.0 204.7,125.0 205.0,124.2 205.3,125.0 205.6,125.8 205.9,125.8 206.2,125.0 206.5,125.8 206.8,125.8 207.1,125.0 207.4,125.8 207.7,125.8 208.1,125.0 208.4,125.0 208.7,125.0 209.0,125.8 209.3,125.0 209.6,124.2 209.9,125.0 210.2,125.0 210.5,125.8 210.8,125.0 211.1,125.8 211.4,125.8 211.7,125.0 212.0,124.2 212.3,125.8 212.6,125.0 212.9,125.8 213.2,124.2 213.5,125.8 213.8,125.8 214.1,125.8 214.4,125.8 214.7,125.8 215.0,125.0 215.4,125.0 215.7,125.0 216.0,125.0 216.3,125.8 216.6,125.8 216.9,125.0 217.2,125.0 217.5,125.8 217.8,125.8 218.1,125.0 218.4,125.8 218.7,125.8 219.0,125.8 219.3,125.0 219.6,125.0 219.9,125.0 220.2,125.8 220.5,125.0 220.8,125.8 221.1,125.0 221.4,125.0 221.7,125.8 222.0,125.8 222.3,125.0 222.7,125.8 223.0,125.0 223.3,125.0 223.6,125.8 223.9,125.0 224.2,125.0 224.5,125.8 224.8,125.8 225.1,125.8 225.4,125.0 225.7,125.0 226.0,125.8 226.3,125.8 226.6,125.8 226.9,125.8 227.2,125.8 227.5,125.8 227.8,125.8 228.1,125.8 228.4,125.8 228.7,125.0 229.0,125.0 229.3,125.0 229.6,125.8 230.0,125.8 230.3,125.8 230.6,125.8 230.9,125.0 231.2,125.8 231.5,125.8 231.8,125.8 232.1,125.8 232.4,125.8 232.7,125.8 233.0,125.8 233.3,125.8 233.6,125.8 233.9,125.8 234.2,125.8 234.5,125.8 234.8,125.8 235.1,125.8 235.4,125.8 235.7,125.8 236.0,125.8 236.3,125.8 236.6,125.8 236.9,125.8 237.3,125.8 237.6,125.8 237.9,125.8 238.2,125.8 238.5,125.8 238.8,125.8 239.1,125.8 239.4,125.8 239.7,125.8 240.0,125.8 240.3,125.8 240.6,125.8 240.9,125.8 241.2,125.8 241.5,125.8 241.8,125.8 242.1,125.8 242.4,125.8 242.7,125.8 243.0,125.8 243.3,125.0 243.6,125.8 243.9,125.8 244.2,125.8 244.6,125.8 244.9,125.8 245.2,125.8 245.5,125.8 245.8,125.0 246.1,125.8 246.4,125.8 246.7,125.8 247.0,125.8 247.3,125.8 247.6,125.8 247.9,125.8 248.2,125.8 248.5,125.8 248.8,125.8 249.1,125.8 249.4,125.8 249.7,125.8 250.0,125.8 250.3,125.8 250.6,125.8 250.9,125.8 251.2,125.8 251.5,125.8 251.9,125.8 252.2,125.8 252.5,125.8 252.8,125.8 253.1,125.8 253.4,125.8 253.7,125.8 254.0,125.8 254.3,125.8 254.6,125.8 254.9,125.8 255.2,125.8 255.5,125.8 255.8,125.8 256.1,125.8 256.4,125.8 256.7,125.8 257.0,125.8 257.3,125.8 257.6,125.8 257.9,125.8 258.2,125.8 258.5,125.8 258.8,125.8 259.2,125.8 259.5,125.8 259.8,125.8 260.1,125.8 260.4,125.8 260.7,125.8 261.0,125.8 261.3,125.8 261.6,125.8 261.9,125.8 262.2,125.8 262.5,125.8 262.8,125.8 263.1,125.8 263.4,125.8 263.7,125.8 264.0,125.8 264.3,125.8 264.6,125.8 264.9,125.8 265.2,125.8 265.5,125.8 265.8,125.8 266.1,125.8 266.5,125.8 266.8,125.8 267.1,125.8 267.4,125.8 267.7,125.8 268.0,125.8 268.3,125.8 268.6,125.8 268.9,125.8 269.2,125.8 269.5,125.8 269.8,125.8 270.1,125.8 270.4,125.8 270.7,125.8 271.0,125.8 271.3,125.8 271.6,125.8 271.9,125.8 272.2,125.8 272.5,125.8 272.8,125.8 273.1,125.8 273.4,125.8 273.8,125.8 274.1,125.8 274.4,125.8 274.7,125.8 275.0,125.8 275.3,125.8 275.6,125.8 275.9,125.8 276.2,125.8 276.5,125.8 276.8,125.8 277.1,125.8 277.4,125.8 277.7,125.8 278.0,125.8 278.3,125.8 278.6,125.8 278.9,125.8 279.2,125.8 279.5,125.8 279.8,125.8 280.1,125.8 280.4,125.8 280.7,125.8 281.1,125.8 281.4,125.8 281.7,125.8 282.0,125.8 282.3,125.8 282.6,125.8 282.9,125.8 283.2,125.8 283.5,125.8 283.8,125.8 284.1,125.8 284.4,125.8 284.7,125.8 285.0,125.8 285.3,125.8 285.6,125.8 285.9,125.8 286.2,125.8 286.5,125.8 286.8,125.8 287.1,125.8 287.4,125.8 287.7,125.8 288.0,125.8 288.4,125.8 288.7,125.8 289.0,125.8 289.3,125.8 289.6,125.8 289.9,125.8 290.2,125.8 290.5,125.8 290.8,125.8 291.1,125.8 291.4,125.8 291.7,125.8 292.0,125.8 292.3,125.8 292.6,125.8 292.9,125.8 293.2,125.8 293.5,125.8 293.8,125.8 294.1,125.8 294.4,125.8 294.7,125.8 295.0,125.8 295.3,125.8 295.7,125.8 296.0,125.8 296.3,125.8 296.6,125.8 296.9,125.8 297.2,125.8 297.5,125.8 297.8,125.8 298.1,125.8 298.4,125.8 298.7,125.8 299.0,125.8 299.3,125.8 299.6,125.8 299.9,125.8 300.2,125.8 300.5,125.8 300.8,125.8 301.1,125.8 301.4,125.8 301.7,125.8 302.0,125.8 302.3,125.8 302.6,125.8 303.0,125.8 303.3,125.8 303.6,125.8 303.9,125.8 304.2,125.8 304.5,125.8 304.8,125.8 305.1,125.8 305.4,125.8 305.7,125.8 306.0,125.8 306.3,125.8 306.6,125.8 306.9,125.8 307.2,125.8 307.5,125.8 307.8,125.8 308.1,125.8 308.4,125.8 308.7,125.8 309.0,125.8 309.3,125.8 309.6,125.8 309.9,125.8 310.3,125.8 310.6,125.8 310.9,125.8 311.2,125.8 311.5,125.8 311.8,125.8 312.1,125.8 312.4,125.8 312.7,125.8 313.0,125.8 313.3,125.8 313.6,125.8 313.9,125.8 314.2,125.8 314.5,125.8 314.8,125.8 315.1,125.8 315.4,125.8 315.7,125.8 316.0,125.8 316.3,125.8 316.6,125.8 316.9,125.8 317.2,125.8 317.6,125.8 317.9,125.8 318.2,125.8 318.5,125.8 318.8,125.8 319.1,125.8 319.4,125.8 319.7,125.8 320.0,125.8 320.3,125.8 320.6,125.8 320.9,125.8 321.2,125.8 321.5,125.8 321.8,125.8 322.1,125.8 322.4,125.8 322.7,125.8 323.0,125.8 323.3,125.8 323.6,125.8 323.9,125.8 324.2,125.8 324.5,125.8 324.9,125.8 325.2,125.8 325.5,125.8 325.8,125.8 326.1,125.8 326.4,125.8 326.7,125.8 327.0,125.8 327.3,125.8 327.6,125.8 327.9,125.8 328.2,125.8 328.5,125.8 328.8,125.8 329.1,125.8 329.4,125.8 329.7,125.8 330.0,125.8 330.3,125.8 330.6,125.8 330.9,125.8 331.2,125.8 331.5,125.8 331.8,125.8 332.2,125.8 332.5,125.8 332.8,125.8 333.1,125.8 333.4,125.8 333.7,125.8 334.0,125.8 334.3,125.8 334.6,125.8 334.9,125.8 335.2,125.8 335.5,125.8 335.8,125.8 336.1,125.8 336.4,125.8 336.7,125.8 337.0,125.8 337.3,125.8 337.6,125.8 337.9,125.8 338.2,125.8 338.5,125.8 338.8,125.8 339.1,125.8 339.5,125.8 339.8,125.8 340.1,125.8 340.4,125.8 340.7,125.8 341.0,125.8 341.3,125.8 341.6,125.8 341.9,125.8 342.2,125.8 342.5,125.8 342.8,125.8 343.1,125.8 343.4,125.8 343.7,125.8 344.0,125.8 344.3,125.8 344.6,125.8 344.9,125.8 345.2,125.8 345.5,125.8 345.8,125.8 346.1,125.8 346.4,125.8 346.8,125.8 347.1,125.8 347.4,125.8 347.7,125.8 348.0,125.8 348.3,125.8 348.6,125.8 348.9,125.8 349.2,125.8 349.5,125.8 349.8,125.8 350.1,125.8 350.4,125.8 350.7,125.8 351.0,125.8 351.3,125.8 351.6,125.8 351.9,125.8 352.2,125.8 352.5,125.8 352.8,125.8 353.1,125.8 353.4,125.8 353.7,125.8 354.1,125.8 354.4,125.8 354.7,125.8 355.0,125.8 355.3,125.8 355.6,125.8 355.9,125.8 356.2,125.8 356.5,125.8 356.8,125.8 357.1,125.8 357.4,125.8"/>
<rect x="-0.8" y="-0.8" width="359.1" height="127.4" fill="none" stroke="#808080" stroke-width="1.6"/>
<text class="tk" x="23.1" y="139.6" text-anchor="middle">31500</text>
<text class="tk" x="73.8" y="139.6" text-anchor="middle">31750</text>
<text class="tk" x="124.5" y="139.6" text-anchor="middle">32000</text>
<text class="tk" x="175.2" y="139.6" text-anchor="middle">32250</text>
<text class="tk" x="225.9" y="139.6" text-anchor="middle">32500</text>
<text class="tk" x="276.6" y="139.6" text-anchor="middle">32750</text>
<text class="tk" x="327.3" y="139.6" text-anchor="middle">33000</text>
<text class="tk" x="-4.4" y="129.6" text-anchor="end">0</text>
<text class="tk" x="-4.4" y="90.3" text-anchor="end">50</text>
<text class="tk" x="-4.4" y="51.0" text-anchor="end">100</text>
<text class="tk" x="-4.4" y="11.7" text-anchor="end">150</text>
<rect x="265.5" y="7.3" width="14" height="10.8" fill="#fff" stroke="#ccc" stroke-width="0.8"/>
<rect x="267.3" y="8.9" width="10.6" height="7.6" fill="#0000ff"/>
<text class="lg" x="283.2" y="17.1" fill="#8c8c8c">aida05 1.8.L</text>
<path d="M357.1,-9.9 l9.9,9.9 l-9.9,9.9 l-9.9,-9.9 z" fill="#ff0000"/>
</g></svg>
<svg class="ch" style="left:110.5px;top:518.6px" width="420" height="160" viewBox="0 0 420 160">
<g transform="translate(40,20)">
<line x1="23.00" y1="0" x2="23.00" y2="125.8" stroke="#e9e9e9" stroke-width="1"/>
<line x1="74.00" y1="0" x2="74.00" y2="125.8" stroke="#e9e9e9" stroke-width="1"/>
<line x1="125.00" y1="0" x2="125.00" y2="125.8" stroke="#e9e9e9" stroke-width="1"/>
<line x1="175.00" y1="0" x2="175.00" y2="125.8" stroke="#e9e9e9" stroke-width="1"/>
<line x1="226.00" y1="0" x2="226.00" y2="125.8" stroke="#e9e9e9" stroke-width="1"/>
<line x1="277.00" y1="0" x2="277.00" y2="125.8" stroke="#e9e9e9" stroke-width="1"/>
<line x1="327.00" y1="0" x2="327.00" y2="125.8" stroke="#e9e9e9" stroke-width="1"/>
<line x1="0" y1="86.90" x2="357.5" y2="86.90" stroke="#e9e9e9" stroke-width="1"/>
<line x1="0" y1="46.90" x2="357.5" y2="46.90" stroke="#e9e9e9" stroke-width="1"/>
<line x1="0" y1="7.90" x2="357.5" y2="7.90" stroke="#e9e9e9" stroke-width="1"/>
<clipPath id="cp3"><rect x="0" y="0" width="357.5" height="126.8"/></clipPath>
<polyline clip-path="url(#cp3)" fill="none" stroke="#0000ff" stroke-width="1.0" stroke-linejoin="round" points="0.0,125.8 0.3,125.8 0.6,125.8 0.9,125.8 1.2,125.8 1.5,125.8 1.8,125.8 2.1,125.8 2.4,125.8 2.7,125.8 3.0,125.8 3.3,125.8 3.7,125.8 4.0,125.8 4.3,125.8 4.6,125.8 4.9,125.8 5.2,125.8 5.5,125.8 5.8,125.8 6.1,125.8 6.4,125.8 6.7,125.8 7.0,125.8 7.3,125.8 7.6,125.8 7.9,125.8 8.2,125.8 8.5,125.8 8.8,125.8 9.1,125.8 9.4,125.8 9.7,125.8 10.0,125.8 10.3,125.8 10.6,125.8 11.0,125.8 11.3,125.8 11.6,125.8 11.9,125.8 12.2,125.8 12.5,125.8 12.8,125.8 13.1,125.8 13.4,125.8 13.7,125.8 14.0,125.8 14.3,125.8 14.6,125.8 14.9,125.8 15.2,125.8 15.5,125.8 15.8,125.8 16.1,125.8 16.4,125.8 16.7,125.8 17.0,125.8 17.3,125.8 17.6,125.8 17.9,125.8 18.3,125.8 18.6,125.8 18.9,125.8 19.2,125.8 19.5,125.8 19.8,125.8 20.1,125.8 20.4,125.8 20.7,125.8 21.0,125.8 21.3,125.8 21.6,125.8 21.9,125.8 22.2,125.8 22.5,125.8 22.8,125.8 23.1,125.8 23.4,125.8 23.7,125.8 24.0,125.8 24.3,125.8 24.6,125.8 24.9,125.8 25.2,125.8 25.6,125.8 25.9,125.8 26.2,125.8 26.5,125.8 26.8,125.8 27.1,125.8 27.4,125.8 27.7,125.8 28.0,125.8 28.3,125.8 28.6,125.8 28.9,125.8 29.2,125.8 29.5,125.8 29.8,125.8 30.1,125.8 30.4,125.8 30.7,125.8 31.0,125.8 31.3,125.8 31.6,125.8 31.9,125.8 32.2,125.8 32.5,125.8 32.9,125.8 33.2,125.8 33.5,125.8 33.8,125.8 34.1,125.8 34.4,125.8 34.7,125.8 35.0,125.8 35.3,125.8 35.6,125.8 35.9,125.8 36.2,125.8 36.5,125.8 36.8,125.8 37.1,125.8 37.4,125.8 37.7,125.8 38.0,125.8 38.3,125.8 38.6,125.8 38.9,125.8 39.2,125.8 39.5,125.8 39.8,125.8 40.2,125.8 40.5,125.8 40.8,125.8 41.1,125.8 41.4,125.8 41.7,125.8 42.0,125.8 42.3,125.8 42.6,125.8 42.9,125.8 43.2,125.8 43.5,125.8 43.8,125.8 44.1,125.8 44.4,125.8 44.7,125.8 45.0,125.8 45.3,125.8 45.6,125.8 45.9,125.8 46.2,125.8 46.5,125.8 46.8,125.8 47.1,125.8 47.5,125.8 47.8,125.8 48.1,125.8 48.4,125.8 48.7,125.8 49.0,125.8 49.3,125.8 49.6,125.8 49.9,125.8 50.2,125.8 50.5,125.8 50.8,125.8 51.1,125.8 51.4,125.8 51.7,125.8 52.0,125.8 52.3,125.8 52.6,125.8 52.9,125.8 53.2,125.8 53.5,125.8 53.8,125.8 54.1,125.8 54.4,125.8 54.8,125.8 55.1,125.8 55.4,125.8 55.7,125.8 56.0,125.8 56.3,125.8 56.6,125.8 56.9,125.8 57.2,125.8 57.5,125.8 57.8,125.8 58.1,125.8 58.4,125.8 58.7,125.8 59.0,125.8 59.3,125.8 59.6,125.8 59.9,125.8 60.2,125.8 60.5,125.8 60.8,125.8 61.1,125.8 61.4,125.8 61.7,125.8 62.1,125.8 62.4,125.8 62.7,125.8 63.0,125.8 63.3,125.8 63.6,125.8 63.9,125.8 64.2,125.8 64.5,125.8 64.8,125.8 65.1,125.8 65.4,125.8 65.7,125.8 66.0,125.8 66.3,125.8 66.6,125.8 66.9,125.8 67.2,125.8 67.5,125.8 67.8,125.8 68.1,125.8 68.4,125.8 68.7,125.8 69.0,125.8 69.4,125.8 69.7,125.8 70.0,125.8 70.3,125.8 70.6,125.8 70.9,125.8 71.2,125.8 71.5,125.8 71.8,125.8 72.1,125.8 72.4,125.8 72.7,125.8 73.0,125.8 73.3,125.8 73.6,125.8 73.9,125.8 74.2,125.8 74.5,125.8 74.8,125.8 75.1,125.8 75.4,125.8 75.7,125.8 76.0,125.8 76.3,125.8 76.7,125.8 77.0,125.8 77.3,125.8 77.6,125.8 77.9,125.8 78.2,125.8 78.5,125.8 78.8,125.8 79.1,125.8 79.4,125.8 79.7,125.8 80.0,125.8 80.3,125.8 80.6,125.8 80.9,125.8 81.2,125.8 81.5,125.8 81.8,125.8 82.1,125.8 82.4,125.8 82.7,125.8 83.0,125.8 83.3,125.8 83.6,125.8 84.0,125.8 84.3,125.8 84.6,125.0 84.9,125.8 85.2,125.8 85.5,125.8 85.8,125.8 86.1,125.8 86.4,125.8 86.7,125.8 87.0,125.8 87.3,125.8 87.6,125.8 87.9,125.8 88.2,125.0 88.5,125.8 88.8,125.8 89.1,125.8 89.4,125.8 89.7,125.0 90.0,125.8 90.3,125.8 90.6,125.8 90.9,125.8 91.3,125.8 91.6,125.8 91.9,125.8 92.2,125.0 92.5,125.8 92.8,125.8 93.1,125.8 93.4,125.8 93.7,125.8 94.0,125.0 94.3,125.8 94.6,125.8 94.9,125.8 95.2,125.8 95.5,125.8 95.8,125.8 96.1,125.8 96.4,125.8 96.7,125.8 97.0,125.8 97.3,125.8 97.6,125.8 97.9,125.8 98.2,125.8 98.6,125.8 98.9,125.8 99.2,125.8 99.5,125.8 99.8,125.8 100.1,125.0 100.4,125.8 100.7,125.8 101.0,125.8 101.3,125.0 101.6,125.8 101.9,125.8 102.2,125.8 102.5,125.8 102.8,125.8 103.1,125.8 103.4,125.0 103.7,125.8 104.0,125.8 104.3,125.8 104.6,125.8 104.9,125.8 105.2,125.8 105.5,125.8 105.9,125.8 106.2,125.8 106.5,125.8 106.8,125.8 107.1,125.8 107.4,125.8 107.7,125.8 108.0,125.8 108.3,125.0 108.6,125.8 108.9,125.8 109.2,125.8 109.5,125.8 109.8,125.8 110.1,125.8 110.4,125.8 110.7,125.8 111.0,125.8 111.3,125.8 111.6,125.8 111.9,125.8 112.2,125.8 112.5,125.8 112.8,125.8 113.2,125.0 113.5,125.8 113.8,125.8 114.1,125.0 114.4,125.8 114.7,125.8 115.0,125.8 115.3,125.8 115.6,125.0 115.9,125.8 116.2,125.8 116.5,125.8 116.8,125.8 117.1,125.8 117.4,125.8 117.7,125.0 118.0,125.8 118.3,125.8 118.6,125.8 118.9,125.8 119.2,125.0 119.5,125.0 119.8,125.8 120.1,125.8 120.5,125.8 120.8,125.8 121.1,125.8 121.4,125.8 121.7,125.0 122.0,125.8 122.3,125.0 122.6,125.8 122.9,125.0 123.2,125.8 123.5,125.8 123.8,125.8 124.1,125.8 124.4,125.8 124.7,125.8 125.0,125.8 125.3,125.0 125.6,125.8 125.9,125.8 126.2,125.8 126.5,125.8 126.8,125.8 127.1,125.8 127.4,125.8 127.8,125.0 128.1,125.8 128.4,125.0 128.7,125.0 129.0,125.8 129.3,125.0 129.6,125.0 129.9,125.8 130.2,125.0 130.5,125.0 130.8,125.0 131.1,125.8 131.4,125.8 131.7,125.0 132.0,125.8 132.3,125.8 132.6,125.0 132.9,125.8 133.2,125.8 133.5,125.0 133.8,125.0 134.1,125.0 134.4,125.0 134.7,125.8 135.1,125.0 135.4,125.0 135.7,125.0 136.0,125.0 136.3,125.0 136.6,125.0 136.9,125.8 137.2,125.0 137.5,125.8 137.8,125.8 138.1,125.0 138.4,125.8 138.7,125.8 139.0,125.8 139.3,125.0 139.6,125.0 139.9,125.0 140.2,125.0 140.5,125.8 140.8,125.8 141.1,125.0 141.4,125.8 141.7,125.0 142.0,125.8 142.4,125.8 142.7,125.0 143.0,125.8 143.3,124.2 143.6,125.8 143.9,125.8 144.2,124.2 144.5,125.8 144.8,125.0 145.1,125.0 145.4,125.8 145.7,125.8 146.0,125.8 146.3,125.8 146.6,125.8 146.9,125.0 147.2,125.0 147.5,125.8 147.8,125.8 148.1,125.0 148.4,125.8 148.7,125.8 149.0,125.0 149.3,125.0 149.7,125.8 150.0,125.0 150.3,125.0 150.6,124.2 150.9,125.0 151.2,125.0 151.5,125.8 151.8,125.8 152.1,125.8 152.4,125.8 152.7,125.0 153.0,125.8 153.3,125.8 153.6,125.8 153.9,125.8 154.2,125.8 154.5,124.2 154.8,125.0 155.1,125.0 155.4,125.0 155.7,125.0 156.0,125.8 156.3,125.0 156.6,125.8 157.0,125.8 157.3,125.8 157.6,125.8 157.9,125.0 158.2,125.8 158.5,125.8 158.8,125.0 159.1,125.0 159.4,125.0 159.7,125.0 160.0,125.0 160.3,125.8 160.6,125.8 160.9,125.0 161.2,125.0 161.5,125.8 161.8,125.8 162.1,125.8 162.4,125.0 162.7,125.8 163.0,125.0 163.3,124.2 163.6,125.0 163.9,125.8 164.3,125.0 164.6,125.0 164.9,125.8 165.2,125.8 165.5,125.8 165.8,124.2 166.1,124.2 166.4,125.8 166.7,125.0 167.0,125.8 167.3,125.8 167.6,125.8 167.9,125.8 168.2,125.0 168.5,125.8 168.8,125.0 169.1,125.0 169.4,125.8 169.7,125.0 170.0,125.0 170.3,125.8 170.6,125.8 170.9,125.8 171.2,125.8 171.6,125.8 171.9,125.8 172.2,125.8 172.5,125.0 172.8,125.8 173.1,125.0 173.4,125.8 173.7,125.8 174.0,125.0 174.3,125.8 174.6,125.8 174.9,124.2 175.2,124.2 175.5,124.2 175.8,124.2 176.1,125.8 176.4,121.9 176.7,123.4 177.0,124.2 177.3,122.7 177.6,121.1 177.9,123.4 178.2,121.9 178.5,117.2 178.9,117.2 179.2,117.9 179.5,118.7 179.8,121.1 180.1,118.7 180.4,114.8 180.7,112.4 181.0,106.9 181.3,110.9 181.6,107.7 181.9,107.7 182.2,109.3 182.5,99.9 182.8,103.0 183.1,97.5 183.4,98.3 183.7,87.3 184.0,88.8 184.3,78.6 184.6,66.0 184.9,73.1 185.2,66.8 185.5,69.2 185.8,70.0 186.2,40.9 186.5,66.0 186.8,29.1 187.1,31.5 187.4,36.2 187.7,26.7 188.0,26.7 188.3,18.1 188.6,12.6 188.9,12.6 189.2,12.6 189.5,7.1 189.8,2.4 190.1,0.0 190.4,-3.9 190.7,-11.0 191.0,-7.1 191.3,-8.6 191.6,-5.5 191.9,-9.4 192.2,-10.2 192.5,-9.4 192.8,-11.0 193.1,-1.6 193.5,9.4 193.8,-11.0 194.1,-5.5 194.4,-3.9 194.7,0.0 195.0,21.2 195.3,7.1 195.6,11.0 195.9,17.3 196.2,36.2 196.5,33.0 196.8,31.5 197.1,35.4 197.4,51.1 197.7,49.5 198.0,51.1 198.3,71.5 198.6,73.1 198.9,74.7 199.2,81.0 199.5,81.0 199.8,78.6 200.1,88.1 200.4,93.6 200.8,95.1 201.1,88.8 201.4,91.2 201.7,105.4 202.0,99.1 202.3,102.2 202.6,110.1 202.9,110.9 203.2,110.9 203.5,117.2 203.8,116.4 204.1,116.4 204.4,120.3 204.7,119.5 205.0,117.9 205.3,124.2 205.6,118.7 205.9,118.7 206.2,122.7 206.5,122.7 206.8,123.4 207.1,125.8 207.4,123.4 207.7,125.0 208.1,124.2 208.4,125.8 208.7,124.2 209.0,125.0 209.3,125.0 209.6,125.0 209.9,124.2 210.2,125.8 210.5,125.8 210.8,125.8 211.1,125.0 211.4,125.0 211.7,124.2 212.0,125.0 212.3,125.0 212.6,125.0 212.9,125.8 213.2,125.8 213.5,125.0 213.8,125.8 214.1,125.8 214.4,125.8 214.7,125.0 215.0,125.8 215.4,125.0 215.7,125.8 216.0,125.8 216.3,125.8 216.6,125.0 216.9,125.0 217.2,125.8 217.5,125.8 217.8,125.8 218.1,125.0 218.4,125.8 218.7,125.0 219.0,125.8 219.3,124.2 219.6,125.8 219.9,125.8 220.2,125.0 220.5,125.8 220.8,125.8 221.1,125.8 221.4,125.0 221.7,125.8 222.0,125.0 222.3,125.0 222.7,125.8 223.0,125.0 223.3,125.0 223.6,125.8 223.9,125.0 224.2,125.8 224.5,124.2 224.8,125.8 225.1,125.0 225.4,125.8 225.7,125.8 226.0,125.0 226.3,125.8 226.6,125.0 226.9,124.2 227.2,125.0 227.5,125.8 227.8,125.8 228.1,125.0 228.4,125.8 228.7,125.8 229.0,125.0 229.3,125.0 229.6,125.8 230.0,125.0 230.3,125.0 230.6,125.8 230.9,125.8 231.2,125.0 231.5,125.0 231.8,125.8 232.1,125.8 232.4,125.0 232.7,125.8 233.0,125.8 233.3,125.8 233.6,125.0 233.9,125.8 234.2,125.8 234.5,125.8 234.8,125.8 235.1,125.8 235.4,125.8 235.7,125.0 236.0,125.0 236.3,125.8 236.6,125.8 236.9,125.8 237.3,125.8 237.6,125.8 237.9,125.0 238.2,125.8 238.5,125.8 238.8,125.8 239.1,125.8 239.4,125.8 239.7,125.8 240.0,125.8 240.3,125.8 240.6,125.0 240.9,125.8 241.2,125.8 241.5,125.8 241.8,125.8 242.1,125.8 242.4,125.8 242.7,125.8 243.0,125.8 243.3,125.8 243.6,125.8 243.9,125.8 244.2,125.0 244.6,125.8 244.9,125.8 245.2,125.8 245.5,125.8 245.8,125.8 246.1,125.8 246.4,125.8 246.7,125.8 247.0,125.8 247.3,125.8 247.6,125.8 247.9,125.0 248.2,125.8 248.5,125.8 248.8,125.8 249.1,125.8 249.4,125.8 249.7,125.8 250.0,125.8 250.3,125.8 250.6,125.8 250.9,125.8 251.2,125.8 251.5,125.8 251.9,125.8 252.2,125.8 252.5,125.8 252.8,125.8 253.1,125.8 253.4,125.8 253.7,125.8 254.0,125.8 254.3,125.8 254.6,125.8 254.9,125.8 255.2,125.8 255.5,125.8 255.8,125.8 256.1,125.8 256.4,125.8 256.7,125.8 257.0,125.8 257.3,125.8 257.6,125.8 257.9,125.8 258.2,125.8 258.5,125.8 258.8,125.8 259.2,125.8 259.5,125.8 259.8,125.8 260.1,125.8 260.4,125.8 260.7,125.8 261.0,125.8 261.3,125.8 261.6,125.8 261.9,125.8 262.2,125.8 262.5,125.8 262.8,125.8 263.1,125.8 263.4,125.8 263.7,125.8 264.0,125.8 264.3,125.8 264.6,125.8 264.9,125.8 265.2,125.8 265.5,125.8 265.8,125.8 266.1,125.8 266.5,125.8 266.8,125.8 267.1,125.8 267.4,125.8 267.7,125.8 268.0,125.8 268.3,125.8 268.6,125.8 268.9,125.8 269.2,125.8 269.5,125.8 269.8,125.8 270.1,125.8 270.4,125.8 270.7,125.8 271.0,125.8 271.3,125.8 271.6,125.8 271.9,125.8 272.2,125.8 272.5,125.8 272.8,125.8 273.1,125.8 273.4,125.8 273.8,125.8 274.1,125.8 274.4,125.8 274.7,125.8 275.0,125.8 275.3,125.8 275.6,125.8 275.9,125.8 276.2,125.8 276.5,125.8 276.8,125.8 277.1,125.8 277.4,125.8 277.7,125.8 278.0,125.8 278.3,125.8 278.6,125.8 278.9,125.8 279.2,125.8 279.5,125.8 279.8,125.8 280.1,125.8 280.4,125.8 280.7,125.8 281.1,125.8 281.4,125.8 281.7,125.8 282.0,125.8 282.3,125.8 282.6,125.8 282.9,125.8 283.2,125.8 283.5,125.8 283.8,125.8 284.1,125.8 284.4,125.8 284.7,125.8 285.0,125.8 285.3,125.8 285.6,125.8 285.9,125.8 286.2,125.8 286.5,125.8 286.8,125.8 287.1,125.8 287.4,125.8 287.7,125.8 288.0,125.8 288.4,125.8 288.7,125.8 289.0,125.8 289.3,125.8 289.6,125.8 289.9,125.8 290.2,125.8 290.5,125.8 290.8,125.8 291.1,125.8 291.4,125.8 291.7,125.8 292.0,125.8 292.3,125.8 292.6,125.8 292.9,125.8 293.2,125.8 293.5,125.8 293.8,125.8 294.1,125.8 294.4,125.8 294.7,125.8 295.0,125.8 295.3,125.8 295.7,125.8 296.0,125.8 296.3,125.8 296.6,125.8 296.9,125.8 297.2,125.8 297.5,125.8 297.8,125.8 298.1,125.8 298.4,125.8 298.7,125.8 299.0,125.8 299.3,125.8 299.6,125.8 299.9,125.8 300.2,125.8 300.5,125.8 300.8,125.8 301.1,125.8 301.4,125.8 301.7,125.8 302.0,125.8 302.3,125.8 302.6,125.8 303.0,125.8 303.3,125.8 303.6,125.8 303.9,125.8 304.2,125.8 304.5,125.8 304.8,125.8 305.1,125.8 305.4,125.8 305.7,125.8 306.0,125.8 306.3,125.8 306.6,125.8 306.9,125.8 307.2,125.8 307.5,125.8 307.8,125.8 308.1,125.8 308.4,125.8 308.7,125.8 309.0,125.8 309.3,125.8 309.6,125.8 309.9,125.8 310.3,125.8 310.6,125.8 310.9,125.8 311.2,125.8 311.5,125.8 311.8,125.8 312.1,125.8 312.4,125.8 312.7,125.8 313.0,125.8 313.3,125.8 313.6,125.8 313.9,125.8 314.2,125.8 314.5,125.8 314.8,125.8 315.1,125.8 315.4,125.8 315.7,125.8 316.0,125.8 316.3,125.8 316.6,125.8 316.9,125.8 317.2,125.8 317.6,125.8 317.9,125.8 318.2,125.8 318.5,125.8 318.8,125.8 319.1,125.8 319.4,125.8 319.7,125.8 320.0,125.8 320.3,125.8 320.6,125.8 320.9,125.8 321.2,125.8 321.5,125.8 321.8,125.8 322.1,125.8 322.4,125.8 322.7,125.8 323.0,125.8 323.3,125.8 323.6,125.8 323.9,125.8 324.2,125.8 324.5,125.8 324.9,125.8 325.2,125.8 325.5,125.8 325.8,125.8 326.1,125.8 326.4,125.8 326.7,125.8 327.0,125.8 327.3,125.8 327.6,125.8 327.9,125.8 328.2,125.8 328.5,125.8 328.8,125.8 329.1,125.8 329.4,125.8 329.7,125.8 330.0,125.8 330.3,125.8 330.6,125.8 330.9,125.8 331.2,125.8 331.5,125.8 331.8,125.8 332.2,125.8 332.5,125.8 332.8,125.8 333.1,125.8 333.4,125.8 333.7,125.8 334.0,125.8 334.3,125.8 334.6,125.8 334.9,125.8 335.2,125.8 335.5,125.8 335.8,125.8 336.1,125.8 336.4,125.8 336.7,125.8 337.0,125.8 337.3,125.8 337.6,125.8 337.9,125.8 338.2,125.8 338.5,125.8 338.8,125.8 339.1,125.8 339.5,125.8 339.8,125.8 340.1,125.8 340.4,125.8 340.7,125.8 341.0,125.8 341.3,125.8 341.6,125.8 341.9,125.8 342.2,125.8 342.5,125.8 342.8,125.8 343.1,125.8 343.4,125.8 343.7,125.8 344.0,125.8 344.3,125.8 344.6,125.8 344.9,125.8 345.2,125.8 345.5,125.8 345.8,125.8 346.1,125.8 346.4,125.8 346.8,125.8 347.1,125.8 347.4,125.8 347.7,125.8 348.0,125.8 348.3,125.8 348.6,125.8 348.9,125.8 349.2,125.8 349.5,125.8 349.8,125.8 350.1,125.8 350.4,125.8 350.7,125.8 351.0,125.8 351.3,125.8 351.6,125.8 351.9,125.8 352.2,125.8 352.5,125.8 352.8,125.8 353.1,125.8 353.4,125.8 353.7,125.8 354.1,125.8 354.4,125.8 354.7,125.8 355.0,125.8 355.3,125.8 355.6,125.8 355.9,125.8 356.2,125.8 356.5,125.8 356.8,125.8 357.1,125.8 357.4,125.8"/>
<rect x="-0.8" y="-0.8" width="359.1" height="127.4" fill="none" stroke="#808080" stroke-width="1.6"/>
<text class="tk" x="23.1" y="139.6" text-anchor="middle">31500</text>
<text class="tk" x="73.8" y="139.6" text-anchor="middle">31750</text>
<text class="tk" x="124.5" y="139.6" text-anchor="middle">32000</text>
<text class="tk" x="175.2" y="139.6" text-anchor="middle">32250</text>
<text class="tk" x="225.9" y="139.6" text-anchor="middle">32500</text>
<text class="tk" x="276.6" y="139.6" text-anchor="middle">32750</text>
<text class="tk" x="327.3" y="139.6" text-anchor="middle">33000</text>
<text class="tk" x="-4.4" y="129.6" text-anchor="end">0</text>
<text class="tk" x="-4.4" y="90.3" text-anchor="end">50</text>
<text class="tk" x="-4.4" y="51.0" text-anchor="end">100</text>
<text class="tk" x="-4.4" y="11.7" text-anchor="end">150</text>
<rect x="265.5" y="7.3" width="14" height="10.8" fill="#fff" stroke="#ccc" stroke-width="0.8"/>
<rect x="267.3" y="8.9" width="10.6" height="7.6" fill="#0000ff"/>
<text class="lg" x="283.2" y="17.1" fill="#8c8c8c">aida06 1.8.L</text>
<path d="M357.1,-9.9 l9.9,9.9 l-9.9,9.9 l-9.9,-9.9 z" fill="#ff0000"/>
</g></svg>
<svg class="ch" style="left:745.5px;top:518.6px" width="420" height="160" viewBox="0 0 420 160">
<g transform="translate(40,20)">
<line x1="23.00" y1="0" x2="23.00" y2="125.8" stroke="#e9e9e9" stroke-width="1"/>
<line x1="74.00" y1="0" x2="74.00" y2="125.8" stroke="#e9e9e9" stroke-width="1"/>
<line x1="125.00" y1="0" x2="125.00" y2="125.8" stroke="#e9e9e9" stroke-width="1"/>
<line x1="175.00" y1="0" x2="175.00" y2="125.8" stroke="#e9e9e9" stroke-width="1"/>
<line x1="226.00" y1="0" x2="226.00" y2="125.8" stroke="#e9e9e9" stroke-width="1"/>
<line x1="277.00" y1="0" x2="277.00" y2="125.8" stroke="#e9e9e9" stroke-width="1"/>
<line x1="327.00" y1="0" x2="327.00" y2="125.8" stroke="#e9e9e9" stroke-width="1"/>
<line x1="0" y1="86.90" x2="357.5" y2="86.90" stroke="#e9e9e9" stroke-width="1"/>
<line x1="0" y1="46.90" x2="357.5" y2="46.90" stroke="#e9e9e9" stroke-width="1"/>
<line x1="0" y1="7.90" x2="357.5" y2="7.90" stroke="#e9e9e9" stroke-width="1"/>
<clipPath id="cp4"><rect x="0" y="0" width="357.5" height="126.8"/></clipPath>
<polyline clip-path="url(#cp4)" fill="none" stroke="#0000ff" stroke-width="1.0" stroke-linejoin="round" points="0.0,125.8 0.3,125.8 0.6,125.8 0.9,125.8 1.2,125.8 1.5,125.8 1.8,125.8 2.1,125.8 2.4,125.8 2.7,125.8 3.0,125.8 3.3,125.8 3.7,125.8 4.0,125.8 4.3,125.8 4.6,125.8 4.9,125.8 5.2,125.8 5.5,125.8 5.8,125.8 6.1,125.8 6.4,125.8 6.7,125.8 7.0,125.8 7.3,125.8 7.6,125.8 7.9,125.8 8.2,125.8 8.5,125.8 8.8,125.8 9.1,125.8 9.4,125.8 9.7,125.8 10.0,125.8 10.3,125.8 10.6,125.8 11.0,125.8 11.3,125.8 11.6,125.8 11.9,125.8 12.2,125.8 12.5,125.8 12.8,125.8 13.1,125.8 13.4,125.8 13.7,125.8 14.0,125.8 14.3,125.8 14.6,125.8 14.9,125.8 15.2,125.8 15.5,125.8 15.8,125.8 16.1,125.8 16.4,125.8 16.7,125.8 17.0,125.8 17.3,125.8 17.6,125.8 17.9,125.8 18.3,125.8 18.6,125.8 18.9,125.8 19.2,125.8 19.5,125.8 19.8,125.8 20.1,125.8 20.4,125.8 20.7,125.8 21.0,125.8 21.3,125.8 21.6,125.8 21.9,125.8 22.2,125.8 22.5,125.8 22.8,125.8 23.1,125.8 23.4,125.8 23.7,125.8 24.0,125.8 24.3,125.8 24.6,125.8 24.9,125.8 25.2,125.8 25.6,125.8 25.9,125.8 26.2,125.8 26.5,125.8 26.8,125.8 27.1,125.8 27.4,125.8 27.7,125.8 28.0,125.8 28.3,125.8 28.6,125.8 28.9,125.8 29.2,125.8 29.5,125.8 29.8,125.8 30.1,125.8 30.4,125.8 30.7,125.8 31.0,125.8 31.3,125.8 31.6,125.8 31.9,125.8 32.2,125.8 32.5,125.8 32.9,125.8 33.2,125.8 33.5,125.8 33.8,125.8 34.1,125.8 34.4,125.8 34.7,125.8 35.0,125.8 35.3,125.8 35.6,125.8 35.9,125.8 36.2,125.8 36.5,125.8 36.8,125.8 37.1,125.8 37.4,125.8 37.7,125.8 38.0,125.8 38.3,125.8 38.6,125.8 38.9,125.8 39.2,125.8 39.5,125.8 39.8,125.8 40.2,125.8 40.5,125.8 40.8,125.8 41.1,125.8 41.4,125.8 41.7,125.8 42.0,125.8 42.3,125.8 42.6,125.8 42.9,125.8 43.2,125.8 43.5,125.8 43.8,125.8 44.1,125.8 44.4,125.8 44.7,125.8 45.0,125.8 45.3,125.8 45.6,125.8 45.9,125.8 46.2,125.8 46.5,125.8 46.8,125.8 47.1,125.8 47.5,125.8 47.8,125.8 48.1,125.8 48.4,125.8 48.7,125.8 49.0,125.8 49.3,125.8 49.6,125.8 49.9,125.8 50.2,125.8 50.5,125.8 50.8,125.8 51.1,125.8 51.4,125.8 51.7,125.8 52.0,125.8 52.3,125.8 52.6,125.8 52.9,125.8 53.2,125.8 53.5,125.8 53.8,125.8 54.1,125.8 54.4,125.8 54.8,125.8 55.1,125.8 55.4,125.8 55.7,125.8 56.0,125.8 56.3,125.8 56.6,125.8 56.9,125.8 57.2,125.8 57.5,125.8 57.8,125.8 58.1,125.8 58.4,125.8 58.7,125.8 59.0,125.8 59.3,125.8 59.6,125.8 59.9,125.8 60.2,125.8 60.5,125.8 60.8,125.8 61.1,125.8 61.4,125.8 61.7,125.8 62.1,125.8 62.4,125.8 62.7,125.8 63.0,125.8 63.3,125.8 63.6,125.8 63.9,125.8 64.2,125.8 64.5,125.8 64.8,125.8 65.1,125.8 65.4,125.8 65.7,125.8 66.0,125.8 66.3,125.8 66.6,125.8 66.9,125.8 67.2,125.8 67.5,125.8 67.8,125.8 68.1,125.8 68.4,125.8 68.7,125.8 69.0,125.8 69.4,125.8 69.7,125.8 70.0,125.8 70.3,125.8 70.6,125.8 70.9,125.8 71.2,125.8 71.5,125.8 71.8,125.8 72.1,125.8 72.4,125.8 72.7,125.8 73.0,125.8 73.3,125.8 73.6,125.8 73.9,125.8 74.2,125.8 74.5,125.8 74.8,125.8 75.1,125.8 75.4,125.8 75.7,125.8 76.0,125.8 76.3,125.8 76.7,125.8 77.0,125.8 77.3,125.8 77.6,125.8 77.9,125.8 78.2,125.8 78.5,125.8 78.8,125.8 79.1,125.8 79.4,125.8 79.7,125.8 80.0,125.8 80.3,125.8 80.6,125.8 80.9,125.8 81.2,125.8 81.5,125.8 81.8,125.8 82.1,125.8 82.4,125.8 82.7,125.8 83.0,125.8 83.3,125.8 83.6,125.8 84.0,125.8 84.3,125.8 84.6,125.8 84.9,125.8 85.2,125.8 85.5,125.8 85.8,125.8 86.1,125.8 86.4,125.8 86.7,125.8 87.0,125.8 87.3,125.8 87.6,125.8 87.9,125.8 88.2,125.8 88.5,125.8 88.8,125.8 89.1,125.8 89.4,125.8 89.7,125.8 90.0,125.8 90.3,125.8 90.6,125.8 90.9,125.8 91.3,125.8 91.6,125.8 91.9,125.8 92.2,125.8 92.5,125.8 92.8,125.8 93.1,125.8 93.4,125.8 93.7,125.8 94.0,125.8 94.3,125.8 94.6,125.8 94.9,125.8 95.2,125.8 95.5,125.8 95.8,125.8 96.1,125.8 96.4,125.8 96.7,125.8 97.0,125.8 97.3,125.8 97.6,125.8 97.9,125.8 98.2,125.8 98.6,125.8 98.9,125.8 99.2,125.8 99.5,125.8 99.8,125.8 100.1,125.8 100.4,125.8 100.7,125.8 101.0,125.8 101.3,125.8 101.6,125.8 101.9,125.8 102.2,125.8 102.5,125.8 102.8,125.8 103.1,125.8 103.4,125.8 103.7,125.8 104.0,125.8 104.3,125.8 104.6,125.8 104.9,125.8 105.2,125.8 105.5,125.8 105.9,125.8 106.2,125.8 106.5,125.8 106.8,125.8 107.1,125.8 107.4,125.8 107.7,125.8 108.0,125.8 108.3,125.8 108.6,125.8 108.9,125.8 109.2,125.8 109.5,125.8 109.8,125.8 110.1,125.8 110.4,125.8 110.7,125.0 111.0,125.8 111.3,125.8 111.6,125.8 111.9,125.8 112.2,125.8 112.5,125.8 112.8,125.8 113.2,125.8 113.5,125.8 113.8,125.8 114.1,125.8 114.4,125.8 114.7,125.8 115.0,125.8 115.3,125.8 115.6,125.8 115.9,125.8 116.2,125.8 116.5,125.8 116.8,125.8 117.1,125.8 117.4,125.8 117.7,125.8 118.0,125.8 118.3,125.8 118.6,125.8 118.9,125.8 119.2,125.8 119.5,125.8 119.8,125.8 120.1,125.8 120.5,125.8 120.8,125.8 121.1,125.0 121.4,125.0 121.7,125.8 122.0,125.8 122.3,125.8 122.6,125.8 122.9,125.8 123.2,125.8 123.5,125.8 123.8,125.8 124.1,125.8 124.4,125.8 124.7,125.8 125.0,125.8 125.3,125.8 125.6,125.8 125.9,125.8 126.2,125.8 126.5,125.8 126.8,125.8 127.1,125.8 127.4,125.8 127.8,125.8 128.1,125.8 128.4,125.8 128.7,125.8 129.0,125.8 129.3,125.0 129.6,125.8 129.9,125.8 130.2,125.8 130.5,125.8 130.8,125.8 131.1,125.0 131.4,125.8 131.7,125.8 132.0,125.8 132.3,125.8 132.6,125.8 132.9,125.8 133.2,125.8 133.5,125.8 133.8,125.8 134.1,125.0 134.4,125.8 134.7,125.8 135.1,125.0 135.4,125.0 135.7,125.8 136.0,125.0 136.3,125.0 136.6,125.8 136.9,125.8 137.2,125.8 137.5,125.8 137.8,125.8 138.1,125.8 138.4,125.8 138.7,125.0 139.0,125.8 139.3,125.0 139.6,125.8 139.9,125.8 140.2,125.0 140.5,125.8 140.8,125.8 141.1,125.8 141.4,125.8 141.7,125.8 142.0,125.8 142.4,125.8 142.7,125.0 143.0,125.8 143.3,125.8 143.6,125.8 143.9,125.0 144.2,125.0 144.5,125.8 144.8,125.0 145.1,125.8 145.4,125.8 145.7,125.0 146.0,125.0 146.3,125.8 146.6,125.8 146.9,125.8 147.2,125.0 147.5,125.8 147.8,125.0 148.1,125.8 148.4,125.8 148.7,125.8 149.0,125.8 149.3,125.8 149.7,125.8 150.0,125.0 150.3,125.0 150.6,125.8 150.9,125.0 151.2,125.0 151.5,125.0 151.8,125.0 152.1,125.0 152.4,125.0 152.7,125.8 153.0,125.8 153.3,125.8 153.6,125.8 153.9,125.0 154.2,125.8 154.5,125.0 154.8,125.8 155.1,125.8 155.4,125.8 155.7,125.8 156.0,125.0 156.3,125.8 156.6,125.0 157.0,125.8 157.3,125.8 157.6,125.8 157.9,125.0 158.2,125.8 158.5,125.8 158.8,125.8 159.1,125.8 159.4,125.0 159.7,125.0 160.0,125.8 160.3,125.0 160.6,125.8 160.9,125.8 161.2,125.8 161.5,125.8 161.8,125.0 162.1,125.0 162.4,124.2 162.7,125.8 163.0,125.8 163.3,125.0 163.6,125.8 163.9,125.0 164.3,125.0 164.6,125.0 164.9,125.0 165.2,125.8 165.5,125.8 165.8,125.0 166.1,125.8 166.4,125.0 166.7,125.8 167.0,125.0 167.3,124.2 167.6,125.0 167.9,125.8 168.2,125.8 168.5,125.8 168.8,125.0 169.1,125.8 169.4,125.0 169.7,125.0 170.0,125.8 170.3,125.8 170.6,125.0 170.9,125.8 171.2,125.8 171.6,125.8 171.9,125.8 172.2,125.8 172.5,125.8 172.8,125.0 173.1,125.8 173.4,125.0 173.7,125.0 174.0,125.8 174.3,125.0 174.6,125.0 174.9,125.0 175.2,125.0 175.5,125.8 175.8,125.0 176.1,125.8 176.4,125.8 176.7,125.8 177.0,125.0 177.3,125.0 177.6,125.0 177.9,125.8 178.2,125.8 178.5,125.8 178.9,125.8 179.2,125.8 179.5,125.8 179.8,125.0 180.1,125.8 180.4,125.0 180.7,125.0 181.0,125.0 181.3,125.8 181.6,125.8 181.9,125.0 182.2,125.8 182.5,125.0 182.8,125.8 183.1,125.8 183.4,125.0 183.7,125.0 184.0,125.8 184.3,125.8 184.6,125.0 184.9,125.8 185.2,125.8 185.5,125.8 185.8,125.0 186.2,125.0 186.5,125.0 186.8,125.8 187.1,125.0 187.4,125.0 187.7,125.0 188.0,125.8 188.3,125.0 188.6,125.8 188.9,125.8 189.2,125.8 189.5,125.8 189.8,125.8 190.1,125.8 190.4,125.8 190.7,125.0 191.0,125.0 191.3,125.8 191.6,125.8 191.9,125.8 192.2,125.8 192.5,125.8 192.8,125.8 193.1,125.8 193.5,125.8 193.8,125.8 194.1,125.8 194.4,125.0 194.7,125.0 195.0,125.0 195.3,125.8 195.6,125.0 195.9,125.8 196.2,125.8 196.5,125.0 196.8,125.8 197.1,125.0 197.4,124.2 197.7,125.0 198.0,125.8 198.3,122.7 198.6,125.0 198.9,122.7 199.2,122.7 199.5,122.7 199.8,123.4 200.1,124.2 200.4,121.1 200.8,120.3 201.1,121.1 201.4,121.1 201.7,114.8 202.0,118.7 202.3,110.9 202.6,121.1 202.9,110.9 203.2,112.4 203.5,106.9 203.8,106.9 204.1,111.6 204.4,103.0 204.7,102.2 205.0,103.0 205.3,93.6 205.6,88.8 205.9,95.9 206.2,79.4 206.5,84.1 206.8,73.1 207.1,74.7 207.4,57.4 207.7,62.1 208.1,55.0 208.4,51.9 208.7,31.5 209.0,29.9 209.3,29.9 209.6,14.9 209.9,0.8 210.2,8.6 210.5,11.0 210.8,-8.6 211.1,-7.1 211.4,-17.3 211.7,-11.8 212.0,-0.8 212.3,-18.1 212.6,-5.5 212.9,-25.2 213.2,-20.4 213.5,-25.2 213.8,-25.2 214.1,-25.2 214.4,-18.1 214.7,-9.4 215.0,-7.1 215.4,-14.9 215.7,-3.9 216.0,-9.4 216.3,-15.7 216.6,5.5 216.9,-4.7 217.2,27.5 217.5,0.0 217.8,8.6 218.1,29.9 218.4,23.6 218.7,43.2 219.0,47.2 219.3,44.0 219.6,58.2 219.9,51.9 220.2,62.1 220.5,68.4 220.8,70.8 221.1,79.4 221.4,81.0 221.7,80.2 222.0,99.1 222.3,93.6 222.7,97.5 223.0,100.6 223.3,108.5 223.6,101.4 223.9,107.7 224.2,107.7 224.5,111.6 224.8,118.7 225.1,117.2 225.4,117.2 225.7,117.9 226.0,118.7 226.3,124.2 226.6,118.7 226.9,121.1 227.2,120.3 227.5,123.4 227.8,125.0 228.1,123.4 228.4,125.0 228.7,124.2 229.0,125.0 229.3,125.0 229.6,125.0 230.0,125.0 230.3,125.0 230.6,125.8 230.9,125.8 231.2,125.0 231.5,125.8 231.8,125.0 232.1,125.0 232.4,125.0 232.7,125.8 233.0,125.8 233.3,125.8 233.6,125.8 233.9,125.8 234.2,125.8 234.5,125.8 234.8,125.8 235.1,125.8 235.4,125.8 235.7,125.8 236.0,125.8 236.3,125.8 236.6,125.8 236.9,125.8 237.3,125.8 237.6,125.8 237.9,125.8 238.2,125.8 238.5,125.8 238.8,125.8 239.1,125.8 239.4,125.8 239.7,125.8 240.0,125.8 240.3,125.8 240.6,125.8 240.9,125.8 241.2,125.8 241.5,125.8 241.8,125.8 242.1,125.8 242.4,125.8 242.7,125.8 243.0,125.8 243.3,125.8 243.6,125.8 243.9,125.8 244.2,125.8 244.6,125.8 244.9,125.8 245.2,125.8 245.5,125.8 245.8,125.8 246.1,125.8 246.4,125.8 246.7,125.8 247.0,125.8 247.3,125.8 247.6,125.8 247.9,125.8 248.2,125.8 248.5,125.8 248.8,125.8 249.1,125.8 249.4,125.8 249.7,125.8 250.0,125.8 250.3,125.8 250.6,125.8 250.9,125.8 251.2,125.8 251.5,125.8 251.9,125.8 252.2,125.8 252.5,125.8 252.8,125.8 253.1,125.8 253.4,125.8 253.7,125.8 254.0,125.8 254.3,125.8 254.6,125.8 254.9,125.8 255.2,125.8 255.5,125.8 255.8,125.8 256.1,125.8 256.4,125.8 256.7,125.8 257.0,125.8 257.3,125.8 257.6,125.8 257.9,125.8 258.2,125.8 258.5,125.8 258.8,125.8 259.2,125.8 259.5,125.8 259.8,125.8 260.1,125.8 260.4,125.8 260.7,125.8 261.0,125.8 261.3,125.8 261.6,125.8 261.9,125.8 262.2,125.8 262.5,125.8 262.8,125.8 263.1,125.8 263.4,125.8 263.7,125.8 264.0,125.8 264.3,125.8 264.6,125.8 264.9,125.8 265.2,125.8 265.5,125.8 265.8,125.8 266.1,125.8 266.5,125.8 266.8,125.8 267.1,125.8 267.4,125.8 267.7,125.8 268.0,125.8 268.3,125.8 268.6,125.8 268.9,125.8 269.2,125.8 269.5,125.8 269.8,125.8 270.1,125.8 270.4,125.8 270.7,125.8 271.0,125.8 271.3,125.8 271.6,125.8 271.9,125.8 272.2,125.8 272.5,125.8 272.8,125.8 273.1,125.8 273.4,125.8 273.8,125.8 274.1,125.8 274.4,125.8 274.7,125.8 275.0,125.8 275.3,125.8 275.6,125.8 275.9,125.8 276.2,125.8 276.5,125.8 276.8,125.8 277.1,125.8 277.4,125.8 277.7,125.8 278.0,125.8 278.3,125.8 278.6,125.8 278.9,125.8 279.2,125.8 279.5,125.8 279.8,125.8 280.1,125.8 280.4,125.8 280.7,125.8 281.1,125.8 281.4,125.8 281.7,125.8 282.0,125.8 282.3,125.8 282.6,125.8 282.9,125.8 283.2,125.8 283.5,125.8 283.8,125.8 284.1,125.8 284.4,125.8 284.7,125.8 285.0,125.8 285.3,125.8 285.6,125.8 285.9,125.8 286.2,125.8 286.5,125.8 286.8,125.8 287.1,125.8 287.4,125.8 287.7,125.8 288.0,125.8 288.4,125.8 288.7,125.8 289.0,125.8 289.3,125.8 289.6,125.8 289.9,125.8 290.2,125.8 290.5,125.8 290.8,125.8 291.1,125.8 291.4,125.8 291.7,125.8 292.0,125.8 292.3,125.8 292.6,125.8 292.9,125.8 293.2,125.8 293.5,125.8 293.8,125.8 294.1,125.8 294.4,125.8 294.7,125.8 295.0,125.8 295.3,125.8 295.7,125.8 296.0,125.8 296.3,125.8 296.6,125.8 296.9,125.8 297.2,125.8 297.5,125.8 297.8,125.8 298.1,125.8 298.4,125.8 298.7,125.8 299.0,125.8 299.3,125.8 299.6,125.8 299.9,125.8 300.2,125.8 300.5,125.8 300.8,125.8 301.1,125.8 301.4,125.8 301.7,125.8 302.0,125.8 302.3,125.8 302.6,125.8 303.0,125.8 303.3,125.8 303.6,125.8 303.9,125.8 304.2,125.8 304.5,125.8 304.8,125.8 305.1,125.8 305.4,125.8 305.7,125.8 306.0,125.8 306.3,125.8 306.6,125.8 306.9,125.8 307.2,125.8 307.5,125.8 307.8,125.8 308.1,125.8 308.4,125.8 308.7,125.8 309.0,125.8 309.3,125.8 309.6,125.8 309.9,125.8 310.3,125.8 310.6,125.8 310.9,125.8 311.2,125.8 311.5,125.8 311.8,125.8 312.1,125.8 312.4,125.8 312.7,125.8 313.0,125.8 313.3,125.8 313.6,125.8 313.9,125.8 314.2,125.8 314.5,125.8 314.8,125.8 315.1,125.8 315.4,125.8 315.7,125.8 316.0,125.8 316.3,125.8 316.6,125.8 316.9,125.8 317.2,125.8 317.6,125.8 317.9,125.8 318.2,125.8 318.5,125.8 318.8,125.8 319.1,125.8 319.4,125.8 319.7,125.8 320.0,125.8 320.3,125.8 320.6,125.8 320.9,125.8 321.2,125.8 321.5,125.8 321.8,125.8 322.1,125.8 322.4,125.8 322.7,125.8 323.0,125.8 323.3,125.8 323.6,125.8 323.9,125.8 324.2,125.8 324.5,125.8 324.9,125.8 325.2,125.8 325.5,125.8 325.8,125.8 326.1,125.8 326.4,125.8 326.7,125.8 327.0,125.8 327.3,125.8 327.6,125.8 327.9,125.8 328.2,125.8 328.5,125.8 328.8,125.8 329.1,125.8 329.4,125.8 329.7,125.8 330.0,125.8 330.3,125.8 330.6,125.8 330.9,125.8 331.2,125.8 331.5,125.8 331.8,125.8 332.2,125.8 332.5,125.8 332.8,125.8 333.1,125.8 333.4,125.8 333.7,125.8 334.0,125.8 334.3,125.8 334.6,125.8 334.9,125.8 335.2,125.8 335.5,125.8 335.8,125.8 336.1,125.8 336.4,125.8 336.7,125.8 337.0,125.8 337.3,125.8 337.6,125.8 337.9,125.8 338.2,125.8 338.5,125.8 338.8,125.8 339.1,125.8 339.5,125.8 339.8,125.8 340.1,125.8 340.4,125.8 340.7,125.8 341.0,125.8 341.3,125.8 341.6,125.8 341.9,125.8 342.2,125.8 342.5,125.8 342.8,125.8 343.1,125.8 343.4,125.8 343.7,125.8 344.0,125.8 344.3,125.8 344.6,125.8 344.9,125.8 345.2,125.8 345.5,125.8 345.8,125.8 346.1,125.8 346.4,125.8 346.8,125.8 347.1,125.8 347.4,125.8 347.7,125.8 348.0,125.8 348.3,125.8 348.6,125.8 348.9,125.8 349.2,125.8 349.5,125.8 349.8,125.8 350.1,125.8 350.4,125.8 350.7,125.8 351.0,125.8 351.3,125.8 351.6,125.8 351.9,125.8 352.2,125.8 352.5,125.8 352.8,125.8 353.1,125.8 353.4,125.8 353.7,125.8 354.1,125.8 354.4,125.8 354.7,125.8 355.0,125.8 355.3,125.8 355.6,125.8 355.9,125.8 356.2,125.8 356.5,125.8 356.8,125.8 357.1,125.8 357.4,125.8"/>
<rect x="-0.8" y="-0.8" width="359.1" height="127.4" fill="none" stroke="#808080" stroke-width="1.6"/>
<text class="tk" x="23.1" y="139.6" text-anchor="middle">31500</text>
<text class="tk" x="73.8" y="139.6" text-anchor="middle">31750</text>
<text class="tk" x="124.5" y="139.6" text-anchor="middle">32000</text>
<text class="tk" x="175.2" y="139.6" text-anchor="middle">32250</text>
<text class="tk" x="225.9" y="139.6" text-anchor="middle">32500</text>
<text class="tk" x="276.6" y="139.6" text-anchor="middle">32750</text>
<text class="tk" x="327.3" y="139.6" text-anchor="middle">33000</text>
<text class="tk" x="-4.4" y="129.6" text-anchor="end">0</text>
<text class="tk" x="-4.4" y="90.3" text-anchor="end">50</text>
<text class="tk" x="-4.4" y="51.0" text-anchor="end">100</text>
<text class="tk" x="-4.4" y="11.7" text-anchor="end">150</text>
<rect x="265.5" y="7.3" width="14" height="10.8" fill="#fff" stroke="#ccc" stroke-width="0.8"/>
<rect x="267.3" y="8.9" width="10.6" height="7.6" fill="#0000ff"/>
<text class="lg" x="283.2" y="17.1" fill="#8c8c8c">aida11 1.8.L</text>
<path d="M357.1,-9.9 l9.9,9.9 l-9.9,9.9 l-9.9,-9.9 z" fill="#ff0000"/>
</g></svg>
<svg class="ch" style="left:1380.5px;top:518.6px" width="420" height="160" viewBox="0 0 420 160">
<g transform="translate(40,20)">
<line x1="23.00" y1="0" x2="23.00" y2="125.8" stroke="#e9e9e9" stroke-width="1"/>
<line x1="74.00" y1="0" x2="74.00" y2="125.8" stroke="#e9e9e9" stroke-width="1"/>
<line x1="125.00" y1="0" x2="125.00" y2="125.8" stroke="#e9e9e9" stroke-width="1"/>
<line x1="175.00" y1="0" x2="175.00" y2="125.8" stroke="#e9e9e9" stroke-width="1"/>
<line x1="226.00" y1="0" x2="226.00" y2="125.8" stroke="#e9e9e9" stroke-width="1"/>
<line x1="277.00" y1="0" x2="277.00" y2="125.8" stroke="#e9e9e9" stroke-width="1"/>
<line x1="327.00" y1="0" x2="327.00" y2="125.8" stroke="#e9e9e9" stroke-width="1"/>
<line x1="0" y1="86.90" x2="357.5" y2="86.90" stroke="#e9e9e9" stroke-width="1"/>
<line x1="0" y1="46.90" x2="357.5" y2="46.90" stroke="#e9e9e9" stroke-width="1"/>
<line x1="0" y1="7.90" x2="357.5" y2="7.90" stroke="#e9e9e9" stroke-width="1"/>
<clipPath id="cp5"><rect x="0" y="0" width="357.5" height="126.8"/></clipPath>
<polyline clip-path="url(#cp5)" fill="none" stroke="#0000ff" stroke-width="1.0" stroke-linejoin="round" points="0.0,125.8 0.3,125.8 0.6,125.8 0.9,125.8 1.2,125.8 1.5,125.8 1.8,125.8 2.1,125.8 2.4,125.8 2.7,125.8 3.0,125.8 3.3,125.8 3.7,125.8 4.0,125.8 4.3,125.8 4.6,125.8 4.9,125.8 5.2,125.8 5.5,125.8 5.8,125.8 6.1,125.8 6.4,125.8 6.7,125.8 7.0,125.8 7.3,125.8 7.6,125.8 7.9,125.8 8.2,125.8 8.5,125.8 8.8,125.8 9.1,125.8 9.4,125.8 9.7,125.8 10.0,125.8 10.3,125.8 10.6,125.8 11.0,125.8 11.3,125.8 11.6,125.8 11.9,125.8 12.2,125.8 12.5,125.8 12.8,125.8 13.1,125.8 13.4,125.8 13.7,125.8 14.0,125.8 14.3,125.8 14.6,125.8 14.9,125.8 15.2,125.8 15.5,125.8 15.8,125.8 16.1,125.8 16.4,125.8 16.7,125.8 17.0,125.8 17.3,125.8 17.6,125.8 17.9,125.8 18.3,125.8 18.6,125.8 18.9,125.8 19.2,125.8 19.5,125.8 19.8,125.8 20.1,125.8 20.4,125.8 20.7,125.8 21.0,125.8 21.3,125.8 21.6,125.8 21.9,125.8 22.2,125.8 22.5,125.8 22.8,125.8 23.1,125.8 23.4,125.8 23.7,125.8 24.0,125.8 24.3,125.8 24.6,125.8 24.9,125.8 25.2,125.8 25.6,125.8 25.9,125.8 26.2,125.8 26.5,125.8 26.8,125.8 27.1,125.8 27.4,125.8 27.7,125.8 28.0,125.8 28.3,125.8 28.6,125.8 28.9,125.8 29.2,125.8 29.5,125.8 29.8,125.8 30.1,125.8 30.4,125.8 30.7,125.8 31.0,125.8 31.3,125.8 31.6,125.8 31.9,125.8 32.2,125.8 32.5,125.8 32.9,125.8 33.2,125.8 33.5,125.8 33.8,125.8 34.1,125.8 34.4,125.8 34.7,125.8 35.0,125.8 35.3,125.8 35.6,125.8 35.9,125.8 36.2,125.8 36.5,125.8 36.8,125.8 37.1,125.8 37.4,125.8 37.7,125.8 38.0,125.8 38.3,125.8 38.6,125.8 38.9,125.8 39.2,125.8 39.5,125.8 39.8,125.8 40.2,125.8 40.5,125.8 40.8,125.8 41.1,125.8 41.4,125.8 41.7,125.8 42.0,125.8 42.3,125.8 42.6,125.8 42.9,125.8 43.2,125.8 43.5,125.8 43.8,125.8 44.1,125.8 44.4,125.8 44.7,125.8 45.0,125.8 45.3,125.8 45.6,125.8 45.9,125.8 46.2,125.8 46.5,125.8 46.8,125.8 47.1,125.8 47.5,125.8 47.8,125.8 48.1,125.8 48.4,125.8 48.7,125.8 49.0,125.8 49.3,125.8 49.6,125.8 49.9,125.8 50.2,125.8 50.5,125.8 50.8,125.8 51.1,125.8 51.4,125.8 51.7,125.8 52.0,125.8 52.3,125.8 52.6,125.8 52.9,125.8 53.2,125.8 53.5,125.8 53.8,125.8 54.1,125.8 54.4,125.8 54.8,125.8 55.1,125.8 55.4,125.8 55.7,125.8 56.0,125.8 56.3,125.8 56.6,125.8 56.9,125.8 57.2,125.8 57.5,125.8 57.8,125.8 58.1,125.8 58.4,125.8 58.7,125.8 59.0,125.8 59.3,125.8 59.6,125.8 59.9,125.8 60.2,125.8 60.5,125.8 60.8,125.8 61.1,125.8 61.4,125.8 61.7,125.8 62.1,125.8 62.4,125.8 62.7,125.8 63.0,125.8 63.3,125.8 63.6,125.8 63.9,125.8 64.2,125.8 64.5,125.8 64.8,125.8 65.1,125.8 65.4,125.8 65.7,125.8 66.0,125.8 66.3,125.8 66.6,125.8 66.9,125.8 67.2,125.8 67.5,125.8 67.8,125.8 68.1,125.8 68.4,125.8 68.7,125.8 69.0,125.8 69.4,125.8 69.7,125.8 70.0,125.8 70.3,125.8 70.6,125.8 70.9,125.8 71.2,125.8 71.5,125.8 71.8,125.8 72.1,125.8 72.4,125.8 72.7,125.8 73.0,125.8 73.3,125.8 73.6,125.8 73.9,125.8 74.2,125.8 74.5,125.8 74.8,125.8 75.1,125.8 75.4,125.8 75.7,125.8 76.0,125.8 76.3,125.8 76.7,125.8 77.0,125.8 77.3,125.8 77.6,125.8 77.9,125.8 78.2,125.8 78.5,125.8 78.8,125.8 79.1,125.8 79.4,125.8 79.7,125.8 80.0,125.8 80.3,125.8 80.6,125.8 80.9,125.8 81.2,125.8 81.5,125.8 81.8,125.8 82.1,125.8 82.4,125.8 82.7,125.8 83.0,125.8 83.3,125.8 83.6,125.8 84.0,125.8 84.3,125.8 84.6,125.8 84.9,125.8 85.2,125.8 85.5,125.8 85.8,125.8 86.1,125.8 86.4,125.8 86.7,125.8 87.0,125.8 87.3,125.8 87.6,125.8 87.9,125.8 88.2,125.8 88.5,125.8 88.8,125.8 89.1,125.8 89.4,125.8 89.7,125.8 90.0,125.8 90.3,125.8 90.6,125.8 90.9,125.8 91.3,125.8 91.6,125.8 91.9,125.8 92.2,125.8 92.5,125.8 92.8,125.8 93.1,125.8 93.4,125.8 93.7,125.8 94.0,125.8 94.3,125.8 94.6,125.8 94.9,125.8 95.2,125.8 95.5,125.8 95.8,125.8 96.1,125.8 96.4,125.8 96.7,125.8 97.0,125.8 97.3,125.8 97.6,125.8 97.9,125.8 98.2,125.8 98.6,125.8 98.9,125.8 99.2,125.8 99.5,125.8 99.8,125.8 100.1,125.8 100.4,125.8 100.7,125.8 101.0,125.0 101.3,125.8 101.6,125.8 101.9,125.8 102.2,125.8 102.5,125.8 102.8,125.8 103.1,125.8 103.4,125.8 103.7,125.8 104.0,125.8 104.3,125.8 104.6,125.8 104.9,125.8 105.2,125.8 105.5,125.8 105.9,125.8 106.2,125.8 106.5,125.8 106.8,125.8 107.1,125.8 107.4,125.8 107.7,125.8 108.0,125.8 108.3,125.8 108.6,125.8 108.9,125.8 109.2,125.8 109.5,125.8 109.8,125.8 110.1,125.0 110.4,125.8 110.7,125.8 111.0,125.8 111.3,125.8 111.6,125.8 111.9,125.8 112.2,125.8 112.5,125.8 112.8,125.8 113.2,125.8 113.5,125.8 113.8,125.8 114.1,125.8 114.4,125.8 114.7,125.8 115.0,125.8 115.3,125.8 115.6,125.8 115.9,125.8 116.2,125.8 116.5,125.8 116.8,125.8 117.1,125.8 117.4,125.8 117.7,125.8 118.0,125.8 118.3,125.8 118.6,125.8 118.9,125.8 119.2,125.8 119.5,125.8 119.8,125.8 120.1,125.8 120.5,125.8 120.8,125.0 121.1,125.8 121.4,125.8 121.7,125.8 122.0,125.0 122.3,125.8 122.6,125.8 122.9,125.8 123.2,125.8 123.5,125.8 123.8,125.8 124.1,125.8 124.4,125.8 124.7,125.8 125.0,125.8 125.3,125.8 125.6,125.8 125.9,125.8 126.2,125.8 126.5,125.8 126.8,125.8 127.1,125.8 127.4,125.8 127.8,125.8 128.1,125.8 128.4,125.8 128.7,125.8 129.0,125.8 129.3,125.8 129.6,125.8 129.9,125.8 130.2,125.8 130.5,125.8 130.8,125.8 131.1,125.8 131.4,125.8 131.7,125.0 132.0,125.8 132.3,125.0 132.6,125.8 132.9,125.8 133.2,125.8 133.5,125.8 133.8,125.8 134.1,125.0 134.4,125.8 134.7,125.8 135.1,125.8 135.4,125.8 135.7,125.8 136.0,125.8 136.3,125.8 136.6,125.8 136.9,125.0 137.2,125.8 137.5,125.0 137.8,125.8 138.1,125.8 138.4,125.8 138.7,125.8 139.0,125.8 139.3,125.0 139.6,125.8 139.9,125.0 140.2,125.8 140.5,125.0 140.8,125.8 141.1,125.0 141.4,125.8 141.7,125.0 142.0,125.8 142.4,125.0 142.7,125.8 143.0,125.8 143.3,125.8 143.6,125.8 143.9,125.0 144.2,125.8 144.5,125.8 144.8,125.8 145.1,125.8 145.4,125.0 145.7,125.0 146.0,125.8 146.3,125.8 146.6,125.0 146.9,125.8 147.2,125.8 147.5,125.0 147.8,125.0 148.1,125.0 148.4,125.0 148.7,125.8 149.0,125.8 149.3,125.8 149.7,125.0 150.0,125.8 150.3,125.8 150.6,125.8 150.9,125.8 151.2,125.8 151.5,125.8 151.8,125.8 152.1,125.8 152.4,125.8 152.7,125.0 153.0,125.0 153.3,125.8 153.6,125.8 153.9,125.8 154.2,125.8 154.5,125.8 154.8,125.8 155.1,125.8 155.4,125.8 155.7,125.8 156.0,125.8 156.3,125.8 156.6,125.0 157.0,125.0 157.3,125.0 157.6,125.8 157.9,125.8 158.2,125.8 158.5,125.8 158.8,125.0 159.1,125.8 159.4,125.8 159.7,125.8 160.0,125.8 160.3,124.2 160.6,125.0 160.9,125.8 161.2,125.8 161.5,125.8 161.8,125.0 162.1,125.0 162.4,125.0 162.7,125.0 163.0,125.0 163.3,125.8 163.6,124.2 163.9,125.0 164.3,125.8 164.6,125.8 164.9,125.8 165.2,125.8 165.5,125.8 165.8,125.8 166.1,125.0 166.4,125.0 166.7,125.0 167.0,125.8 167.3,125.0 167.6,125.8 167.9,125.8 168.2,125.8 168.5,125.8 168.8,125.8 169.1,125.0 169.4,125.0 169.7,125.8 170.0,125.8 170.3,125.8 170.6,125.8 170.9,125.8 171.2,125.0 171.6,125.8 171.9,125.0 172.2,125.8 172.5,125.8 172.8,125.0 173.1,125.0 173.4,124.2 173.7,125.8 174.0,125.8 174.3,125.0 174.6,125.0 174.9,125.0 175.2,125.0 175.5,125.0 175.8,125.0 176.1,125.8 176.4,125.8 176.7,125.0 177.0,125.8 177.3,125.8 177.6,124.2 177.9,125.8 178.2,125.8 178.5,125.8 178.9,125.8 179.2,125.0 179.5,125.8 179.8,125.8 180.1,125.8 180.4,125.0 180.7,125.8 181.0,125.8 181.3,125.8 181.6,125.0 181.9,125.8 182.2,125.0 182.5,125.0 182.8,125.8 183.1,124.2 183.4,124.2 183.7,124.2 184.0,124.2 184.3,124.2 184.6,125.8 184.9,122.7 185.2,125.0 185.5,125.0 185.8,124.2 186.2,122.7 186.5,124.2 186.8,124.2 187.1,121.1 187.4,123.4 187.7,121.9 188.0,121.1 188.3,119.5 188.6,119.5 188.9,119.5 189.2,116.4 189.5,121.9 189.8,113.2 190.1,113.2 190.4,108.5 190.7,109.3 191.0,117.9 191.3,113.2 191.6,106.9 191.9,113.2 192.2,103.8 192.5,102.2 192.8,98.3 193.1,94.3 193.5,82.6 193.8,82.6 194.1,86.5 194.4,80.2 194.7,84.1 195.0,82.6 195.3,70.8 195.6,61.3 195.9,61.3 196.2,53.5 196.5,59.8 196.8,47.2 197.1,31.5 197.4,37.7 197.7,48.0 198.0,37.0 198.3,34.6 198.6,36.2 198.9,29.1 199.2,10.2 199.5,9.4 199.8,11.8 200.1,0.8 200.4,7.1 200.8,3.9 201.1,-7.9 201.4,-10.2 201.7,6.3 202.0,-11.8 202.3,-7.1 202.6,-13.4 202.9,-11.8 203.2,3.1 203.5,-24.4 203.8,-13.4 204.1,3.1 204.4,15.7 204.7,6.3 205.0,22.0 205.3,12.6 205.6,16.5 205.9,14.9 206.2,20.4 206.5,22.8 206.8,31.5 207.1,32.2 207.4,21.2 207.7,40.9 208.1,35.4 208.4,48.7 208.7,53.5 209.0,70.0 209.3,62.9 209.6,56.6 209.9,66.0 210.2,82.6 210.5,83.3 210.8,84.1 211.1,84.1 211.4,98.3 211.7,92.0 212.0,99.1 212.3,95.1 212.6,102.2 212.9,104.6 213.2,101.4 213.5,106.1 213.8,113.2 214.1,113.2 214.4,109.3 214.7,112.4 215.0,114.0 215.4,117.2 215.7,114.8 216.0,119.5 216.3,117.9 216.6,120.3 216.9,121.9 217.2,120.3 217.5,125.0 217.8,122.7 218.1,123.4 218.4,121.1 218.7,121.9 219.0,124.2 219.3,124.2 219.6,123.4 219.9,121.9 220.2,125.8 220.5,124.2 220.8,123.4 221.1,123.4 221.4,125.0 221.7,125.0 222.0,123.4 222.3,124.2 222.7,125.0 223.0,125.0 223.3,125.0 223.6,125.0 223.9,125.0 224.2,125.8 224.5,125.8 224.8,125.8 225.1,125.0 225.4,123.4 225.7,125.0 226.0,125.0 226.3,124.2 226.6,125.0 226.9,124.2 227.2,125.0 227.5,124.2 227.8,124.2 228.1,124.2 228.4,125.0 228.7,125.8 229.0,124.2 229.3,124.2 229.6,125.8 230.0,125.8 230.3,125.0 230.6,124.2 230.9,125.8 231.2,124.2 231.5,125.0 231.8,125.8 232.1,125.0 232.4,125.0 232.7,125.0 233.0,125.8 233.3,125.0 233.6,125.8 233.9,125.0 234.2,125.0 234.5,125.8 234.8,125.8 235.1,125.8 235.4,125.8 235.7,125.8 236.0,125.8 236.3,125.8 236.6,125.0 236.9,125.8 237.3,125.0 237.6,125.8 237.9,125.0 238.2,125.0 238.5,125.0 238.8,125.0 239.1,125.8 239.4,125.8 239.7,125.8 240.0,125.8 240.3,125.8 240.6,125.0 240.9,125.8 241.2,125.8 241.5,125.8 241.8,125.8 242.1,125.8 242.4,125.8 242.7,125.8 243.0,125.8 243.3,125.8 243.6,125.0 243.9,125.8 244.2,125.8 244.6,125.8 244.9,125.8 245.2,125.8 245.5,125.8 245.8,125.8 246.1,125.8 246.4,125.8 246.7,125.8 247.0,125.8 247.3,125.0 247.6,125.8 247.9,125.8 248.2,125.8 248.5,125.8 248.8,125.8 249.1,125.8 249.4,125.8 249.7,125.8 250.0,125.8 250.3,125.8 250.6,125.8 250.9,125.8 251.2,125.8 251.5,125.8 251.9,125.8 252.2,125.8 252.5,125.8 252.8,125.8 253.1,125.8 253.4,125.8 253.7,125.8 254.0,125.8 254.3,125.8 254.6,125.8 254.9,125.8 255.2,125.8 255.5,125.8 255.8,125.8 256.1,125.8 256.4,125.8 256.7,125.8 257.0,125.8 257.3,125.8 257.6,125.8 257.9,125.8 258.2,125.8 258.5,125.8 258.8,125.8 259.2,125.8 259.5,125.8 259.8,125.8 260.1,125.8 260.4,125.8 260.7,125.8 261.0,125.8 261.3,125.8 261.6,125.8 261.9,125.8 262.2,125.8 262.5,125.8 262.8,125.8 263.1,125.8 263.4,125.8 263.7,125.8 264.0,125.8 264.3,125.8 264.6,125.8 264.9,125.8 265.2,125.8 265.5,125.8 265.8,125.8 266.1,125.8 266.5,125.8 266.8,125.8 267.1,125.8 267.4,125.8 267.7,125.8 268.0,125.8 268.3,125.8 268.6,125.8 268.9,125.8 269.2,125.8 269.5,125.8 269.8,125.8 270.1,125.8 270.4,125.8 270.7,125.8 271.0,125.8 271.3,125.8 271.6,125.8 271.9,125.8 272.2,125.8 272.5,125.8 272.8,125.8 273.1,125.8 273.4,125.8 273.8,125.8 274.1,125.8 274.4,125.8 274.7,125.8 275.0,125.8 275.3,125.8 275.6,125.8 275.9,125.8 276.2,125.8 276.5,125.8 276.8,125.8 277.1,125.8 277.4,125.8 277.7,125.8 278.0,125.8 278.3,125.8 278.6,125.8 278.9,125.8 279.2,125.8 279.5,125.8 279.8,125.8 280.1,125.8 280.4,125.8 280.7,125.8 281.1,125.8 281.4,125.8 281.7,125.8 282.0,125.8 282.3,125.8 282.6,125.8 282.9,125.8 283.2,125.8 283.5,125.8 283.8,125.8 284.1,125.8 284.4,125.8 284.7,125.8 285.0,125.8 285.3,125.8 285.6,125.8 285.9,125.8 286.2,125.8 286.5,125.8 286.8,125.8 287.1,125.8 287.4,125.8 287.7,125.8 288.0,125.8 288.4,125.8 288.7,125.8 289.0,125.8 289.3,125.8 289.6,125.8 289.9,125.8 290.2,125.8 290.5,125.8 290.8,125.8 291.1,125.8 291.4,125.8 291.7,125.8 292.0,125.8 292.3,125.8 292.6,125.8 292.9,125.8 293.2,125.8 293.5,125.8 293.8,125.8 294.1,125.8 294.4,125.8 294.7,125.8 295.0,125.8 295.3,125.8 295.7,125.8 296.0,125.8 296.3,125.8 296.6,125.8 296.9,125.8 297.2,125.8 297.5,125.8 297.8,125.8 298.1,125.8 298.4,125.8 298.7,125.8 299.0,125.8 299.3,125.8 299.6,125.8 299.9,125.8 300.2,125.8 300.5,125.8 300.8,125.8 301.1,125.8 301.4,125.8 301.7,125.8 302.0,125.8 302.3,125.8 302.6,125.8 303.0,125.8 303.3,125.8 303.6,125.8 303.9,125.8 304.2,125.8 304.5,125.8 304.8,125.8 305.1,125.8 305.4,125.8 305.7,125.8 306.0,125.8 306.3,125.8 306.6,125.8 306.9,125.8 307.2,125.8 307.5,125.8 307.8,125.8 308.1,125.8 308.4,125.8 308.7,125.8 309.0,125.8 309.3,125.8 309.6,125.8 309.9,125.8 310.3,125.8 310.6,125.8 310.9,125.8 311.2,125.8 311.5,125.8 311.8,125.8 312.1,125.8 312.4,125.8 312.7,125.8 313.0,125.8 313.3,125.8 313.6,125.8 313.9,125.8 314.2,125.8 314.5,125.8 314.8,125.8 315.1,125.8 315.4,125.8 315.7,125.8 316.0,125.8 316.3,125.8 316.6,125.8 316.9,125.8 317.2,125.8 317.6,125.8 317.9,125.8 318.2,125.8 318.5,125.8 318.8,125.8 319.1,125.8 319.4,125.8 319.7,125.8 320.0,125.8 320.3,125.8 320.6,125.8 320.9,125.8 321.2,125.8 321.5,125.8 321.8,125.8 322.1,125.8 322.4,125.8 322.7,125.8 323.0,125.8 323.3,125.8 323.6,125.8 323.9,125.8 324.2,125.8 324.5,125.8 324.9,125.8 325.2,125.8 325.5,125.8 325.8,125.8 326.1,125.8 326.4,125.8 326.7,125.8 327.0,125.8 327.3,125.8 327.6,125.8 327.9,125.8 328.2,125.8 328.5,125.8 328.8,125.8 329.1,125.8 329.4,125.8 329.7,125.8 330.0,125.8 330.3,125.8 330.6,125.8 330.9,125.8 331.2,125.8 331.5,125.8 331.8,125.8 332.2,125.8 332.5,125.8 332.8,125.8 333.1,125.8 333.4,125.8 333.7,125.8 334.0,125.8 334.3,125.8 334.6,125.8 334.9,125.8 335.2,125.8 335.5,125.8 335.8,125.8 336.1,125.8 336.4,125.8 336.7,125.8 337.0,125.8 337.3,125.8 337.6,125.8 337.9,125.8 338.2,125.8 338.5,125.8 338.8,125.8 339.1,125.8 339.5,125.8 339.8,125.8 340.1,125.8 340.4,125.8 340.7,125.8 341.0,125.8 341.3,125.8 341.6,125.8 341.9,125.8 342.2,125.8 342.5,125.8 342.8,125.8 343.1,125.8 343.4,125.8 343.7,125.8 344.0,125.8 344.3,125.8 344.6,125.8 344.9,125.8 345.2,125.8 345.5,125.8 345.8,125.8 346.1,125.8 346.4,125.8 346.8,125.8 347.1,125.8 347.4,125.8 347.7,125.8 348.0,125.8 348.3,125.8 348.6,125.8 348.9,125.8 349.2,125.8 349.5,125.8 349.8,125.8 350.1,125.8 350.4,125.8 350.7,125.8 351.0,125.8 351.3,125.8 351.6,125.8 351.9,125.8 352.2,125.8 352.5,125.8 352.8,125.8 353.1,125.8 353.4,125.8 353.7,125.8 354.1,125.8 354.4,125.8 354.7,125.8 355.0,125.8 355.3,125.8 355.6,125.8 355.9,125.8 356.2,125.8 356.5,125.8 356.8,125.8 357.1,125.8 357.4,125.8"/>
<rect x="-0.8" y="-0.8" width="359.1" height="127.4" fill="none" stroke="#808080" stroke-width="1.6"/>
<text class="tk" x="23.1" y="139.6" text-anchor="middle">31500</text>
<text class="tk" x="73.8" y="139.6" text-anchor="middle">31750</text>
<text class="tk" x="124.5" y="139.6" text-anchor="middle">32000</text>
<text class="tk" x="175.2" y="139.6" text-anchor="middle">32250</text>
<text class="tk" x="225.9" y="139.6" text-anchor="middle">32500</text>
<text class="tk" x="276.6" y="139.6" text-anchor="middle">32750</text>
<text class="tk" x="327.3" y="139.6" text-anchor="middle">33000</text>
<text class="tk" x="-4.4" y="129.6" text-anchor="end">0</text>
<text class="tk" x="-4.4" y="90.3" text-anchor="end">50</text>
<text class="tk" x="-4.4" y="51.0" text-anchor="end">100</text>
<text class="tk" x="-4.4" y="11.7" text-anchor="end">150</text>
<rect x="265.5" y="7.3" width="14" height="10.8" fill="#fff" stroke="#ccc" stroke-width="0.8"/>
<rect x="267.3" y="8.9" width="10.6" height="7.6" fill="#0000ff"/>
<text class="lg" x="283.2" y="17.1" fill="#8c8c8c">aida12 1.8.L</text>
<path d="M357.1,-9.9 l9.9,9.9 l-9.9,9.9 l-9.9,-9.9 z" fill="#ff0000"/>
</g></svg>
<svg class="ch" style="left:110.5px;top:680.6px" width="420" height="160" viewBox="0 0 420 160">
<g transform="translate(40,20)">
<line x1="23.00" y1="0" x2="23.00" y2="125.8" stroke="#e9e9e9" stroke-width="1"/>
<line x1="74.00" y1="0" x2="74.00" y2="125.8" stroke="#e9e9e9" stroke-width="1"/>
<line x1="125.00" y1="0" x2="125.00" y2="125.8" stroke="#e9e9e9" stroke-width="1"/>
<line x1="175.00" y1="0" x2="175.00" y2="125.8" stroke="#e9e9e9" stroke-width="1"/>
<line x1="226.00" y1="0" x2="226.00" y2="125.8" stroke="#e9e9e9" stroke-width="1"/>
<line x1="277.00" y1="0" x2="277.00" y2="125.8" stroke="#e9e9e9" stroke-width="1"/>
<line x1="327.00" y1="0" x2="327.00" y2="125.8" stroke="#e9e9e9" stroke-width="1"/>
<line x1="0" y1="86.90" x2="357.5" y2="86.90" stroke="#e9e9e9" stroke-width="1"/>
<line x1="0" y1="46.90" x2="357.5" y2="46.90" stroke="#e9e9e9" stroke-width="1"/>
<line x1="0" y1="7.90" x2="357.5" y2="7.90" stroke="#e9e9e9" stroke-width="1"/>
<clipPath id="cp6"><rect x="0" y="0" width="357.5" height="126.8"/></clipPath>
<polyline clip-path="url(#cp6)" fill="none" stroke="#0000ff" stroke-width="1.0" stroke-linejoin="round" points="0.0,125.8 0.3,125.8 0.6,125.8 0.9,125.8 1.2,125.8 1.5,125.8 1.8,125.8 2.1,125.8 2.4,125.8 2.7,125.8 3.0,125.8 3.3,125.8 3.7,125.8 4.0,125.8 4.3,125.8 4.6,125.8 4.9,125.8 5.2,125.8 5.5,125.8 5.8,125.8 6.1,125.8 6.4,125.8 6.7,125.8 7.0,125.8 7.3,125.8 7.6,125.8 7.9,125.8 8.2,125.8 8.5,125.8 8.8,125.8 9.1,125.8 9.4,125.8 9.7,125.8 10.0,125.8 10.3,125.8 10.6,125.8 11.0,125.8 11.3,125.8 11.6,125.8 11.9,125.8 12.2,125.8 12.5,125.8 12.8,125.8 13.1,125.8 13.4,125.8 13.7,125.8 14.0,125.8 14.3,125.8 14.6,125.8 14.9,125.8 15.2,125.8 15.5,125.8 15.8,125.8 16.1,125.8 16.4,125.8 16.7,125.8 17.0,125.8 17.3,125.8 17.6,125.8 17.9,125.8 18.3,125.8 18.6,125.8 18.9,125.8 19.2,125.8 19.5,125.8 19.8,125.8 20.1,125.8 20.4,125.8 20.7,125.8 21.0,125.8 21.3,125.8 21.6,125.8 21.9,125.8 22.2,125.8 22.5,125.8 22.8,125.8 23.1,125.8 23.4,125.8 23.7,125.8 24.0,125.8 24.3,125.8 24.6,125.8 24.9,125.8 25.2,125.8 25.6,125.8 25.9,125.8 26.2,125.8 26.5,125.8 26.8,125.8 27.1,125.8 27.4,125.8 27.7,125.8 28.0,125.8 28.3,125.8 28.6,125.8 28.9,125.8 29.2,125.8 29.5,125.8 29.8,125.8 30.1,125.8 30.4,125.8 30.7,125.8 31.0,125.8 31.3,125.8 31.6,125.8 31.9,125.8 32.2,125.8 32.5,125.8 32.9,125.8 33.2,125.8 33.5,125.8 33.8,125.8 34.1,125.8 34.4,125.8 34.7,125.8 35.0,125.8 35.3,125.8 35.6,125.8 35.9,125.8 36.2,125.8 36.5,125.8 36.8,125.8 37.1,125.8 37.4,125.8 37.7,125.8 38.0,125.8 38.3,125.8 38.6,125.8 38.9,125.8 39.2,125.8 39.5,125.8 39.8,125.8 40.2,125.8 40.5,125.8 40.8,125.8 41.1,125.8 41.4,125.8 41.7,125.8 42.0,125.8 42.3,125.8 42.6,125.8 42.9,125.8 43.2,125.8 43.5,125.8 43.8,125.8 44.1,125.8 44.4,125.8 44.7,125.8 45.0,125.8 45.3,125.8 45.6,125.8 45.9,125.8 46.2,125.8 46.5,125.8 46.8,125.8 47.1,125.8 47.5,125.8 47.8,125.8 48.1,125.8 48.4,125.8 48.7,125.8 49.0,125.8 49.3,125.8 49.6,125.8 49.9,125.8 50.2,125.8 50.5,125.8 50.8,125.8 51.1,125.8 51.4,125.8 51.7,125.8 52.0,125.8 52.3,125.8 52.6,125.8 52.9,125.8 53.2,125.8 53.5,125.8 53.8,125.8 54.1,125.8 54.4,125.8 54.8,125.8 55.1,125.8 55.4,125.8 55.7,125.8 56.0,125.8 56.3,125.8 56.6,125.8 56.9,125.8 57.2,125.8 57.5,125.8 57.8,125.8 58.1,125.8 58.4,125.8 58.7,125.8 59.0,125.8 59.3,125.8 59.6,125.8 59.9,125.8 60.2,125.8 60.5,125.8 60.8,125.8 61.1,125.8 61.4,125.8 61.7,125.8 62.1,125.8 62.4,125.8 62.7,125.8 63.0,125.8 63.3,125.8 63.6,125.8 63.9,125.8 64.2,125.8 64.5,125.8 64.8,125.8 65.1,125.8 65.4,125.8 65.7,125.8 66.0,125.8 66.3,125.8 66.6,125.8 66.9,125.8 67.2,125.8 67.5,125.8 67.8,125.8 68.1,125.8 68.4,125.8 68.7,125.8 69.0,125.8 69.4,125.8 69.7,125.8 70.0,125.8 70.3,125.8 70.6,125.8 70.9,125.8 71.2,125.8 71.5,125.8 71.8,125.8 72.1,125.8 72.4,125.8 72.7,125.8 73.0,125.8 73.3,125.8 73.6,125.8 73.9,125.8 74.2,125.8 74.5,125.8 74.8,125.8 75.1,125.8 75.4,125.8 75.7,125.8 76.0,125.8 76.3,125.8 76.7,125.8 77.0,125.8 77.3,125.8 77.6,125.8 77.9,125.8 78.2,125.8 78.5,125.8 78.8,125.8 79.1,125.8 79.4,125.8 79.7,125.8 80.0,125.8 80.3,125.8 80.6,125.8 80.9,125.8 81.2,125.8 81.5,125.8 81.8,125.8 82.1,125.8 82.4,125.8 82.7,125.8 83.0,125.8 83.3,125.8 83.6,125.8 84.0,125.8 84.3,125.8 84.6,125.8 84.9,125.8 85.2,125.8 85.5,125.8 85.8,125.8 86.1,125.8 86.4,125.8 86.7,125.8 87.0,125.8 87.3,125.8 87.6,125.8 87.9,125.8 88.2,125.8 88.5,125.8 88.8,125.8 89.1,125.8 89.4,125.8 89.7,125.8 90.0,125.8 90.3,125.8 90.6,125.8 90.9,125.8 91.3,125.8 91.6,125.8 91.9,125.8 92.2,125.8 92.5,125.8 92.8,125.8 93.1,125.8 93.4,125.8 93.7,125.8 94.0,125.8 94.3,125.8 94.6,125.8 94.9,125.8 95.2,125.8 95.5,125.8 95.8,125.8 96.1,125.8 96.4,125.8 96.7,125.8 97.0,125.8 97.3,125.8 97.6,125.8 97.9,125.0 98.2,125.0 98.6,125.8 98.9,125.8 99.2,125.8 99.5,125.8 99.8,125.8 100.1,125.8 100.4,125.8 100.7,125.8 101.0,125.8 101.3,125.8 101.6,125.8 101.9,125.8 102.2,125.8 102.5,125.8 102.8,125.8 103.1,125.8 103.4,125.8 103.7,125.8 104.0,125.8 104.3,125.8 104.6,125.8 104.9,125.8 105.2,125.8 105.5,125.8 105.9,125.8 106.2,125.8 106.5,125.8 106.8,125.0 107.1,125.8 107.4,125.8 107.7,125.0 108.0,125.8 108.3,125.8 108.6,125.8 108.9,125.8 109.2,125.8 109.5,125.8 109.8,125.8 110.1,125.8 110.4,125.8 110.7,125.8 111.0,125.8 111.3,125.8 111.6,125.8 111.9,125.8 112.2,125.0 112.5,125.8 112.8,125.8 113.2,125.8 113.5,125.8 113.8,125.8 114.1,125.8 114.4,125.8 114.7,125.0 115.0,125.8 115.3,125.8 115.6,125.8 115.9,125.8 116.2,125.8 116.5,125.8 116.8,125.8 117.1,125.8 117.4,125.8 117.7,125.8 118.0,125.8 118.3,125.8 118.6,125.8 118.9,125.8 119.2,125.8 119.5,125.8 119.8,125.8 120.1,125.0 120.5,125.8 120.8,125.8 121.1,125.0 121.4,125.8 121.7,125.8 122.0,125.8 122.3,125.0 122.6,125.0 122.9,125.0 123.2,125.0 123.5,125.0 123.8,125.0 124.1,125.8 124.4,125.8 124.7,125.8 125.0,125.0 125.3,125.8 125.6,125.8 125.9,125.0 126.2,125.8 126.5,125.8 126.8,125.8 127.1,125.8 127.4,125.8 127.8,125.8 128.1,125.0 128.4,125.0 128.7,125.8 129.0,125.0 129.3,125.8 129.6,125.8 129.9,125.0 130.2,125.8 130.5,125.8 130.8,125.0 131.1,125.0 131.4,125.0 131.7,125.8 132.0,125.8 132.3,125.8 132.6,125.0 132.9,125.0 133.2,125.8 133.5,125.8 133.8,125.0 134.1,125.8 134.4,125.8 134.7,125.8 135.1,125.8 135.4,125.8 135.7,125.0 136.0,125.8 136.3,125.8 136.6,124.2 136.9,125.0 137.2,125.8 137.5,125.8 137.8,125.8 138.1,125.0 138.4,125.8 138.7,125.0 139.0,125.0 139.3,125.0 139.6,125.8 139.9,125.0 140.2,125.8 140.5,125.0 140.8,125.8 141.1,124.2 141.4,125.8 141.7,125.8 142.0,125.8 142.4,124.2 142.7,125.8 143.0,125.8 143.3,125.8 143.6,125.8 143.9,125.0 144.2,124.2 144.5,125.8 144.8,125.8 145.1,125.8 145.4,125.8 145.7,125.8 146.0,125.8 146.3,125.8 146.6,125.8 146.9,125.0 147.2,125.8 147.5,125.0 147.8,125.0 148.1,125.0 148.4,124.2 148.7,125.0 149.0,125.8 149.3,124.2 149.7,125.8 150.0,125.8 150.3,125.0 150.6,125.8 150.9,125.8 151.2,125.8 151.5,125.0 151.8,125.8 152.1,125.8 152.4,125.0 152.7,125.0 153.0,125.0 153.3,125.8 153.6,124.2 153.9,124.2 154.2,125.8 154.5,124.2 154.8,125.8 155.1,125.0 155.4,124.2 155.7,125.8 156.0,125.8 156.3,125.8 156.6,125.0 157.0,125.0 157.3,125.0 157.6,125.0 157.9,125.0 158.2,125.0 158.5,125.8 158.8,125.0 159.1,125.0 159.4,125.0 159.7,124.2 160.0,124.2 160.3,125.8 160.6,124.2 160.9,121.9 161.2,125.0 161.5,124.2 161.8,124.2 162.1,120.3 162.4,121.1 162.7,120.3 163.0,125.8 163.3,125.0 163.6,120.3 163.9,125.0 164.3,123.4 164.6,117.9 164.9,119.5 165.2,117.2 165.5,118.7 165.8,122.7 166.1,121.1 166.4,115.6 166.7,120.3 167.0,116.4 167.3,118.7 167.6,121.9 167.9,123.4 168.2,115.6 168.5,112.4 168.8,110.9 169.1,117.2 169.4,115.6 169.7,110.9 170.0,110.9 170.3,111.6 170.6,110.1 170.9,104.6 171.2,111.6 171.6,110.9 171.9,109.3 172.2,108.5 172.5,103.8 172.8,106.1 173.1,106.9 173.4,104.6 173.7,103.0 174.0,97.5 174.3,94.3 174.6,97.5 174.9,96.7 175.2,91.2 175.5,88.1 175.8,103.8 176.1,92.8 176.4,92.0 176.7,94.3 177.0,88.1 177.3,91.2 177.6,77.8 177.9,68.4 178.2,77.1 178.5,81.0 178.9,79.4 179.2,64.5 179.5,88.8 179.8,72.3 180.1,82.6 180.4,71.5 180.7,64.5 181.0,62.9 181.3,56.6 181.6,58.2 181.9,55.0 182.2,51.1 182.5,70.0 182.8,63.7 183.1,72.3 183.4,59.0 183.7,51.9 184.0,52.7 184.3,70.0 184.6,40.1 184.9,61.3 185.2,62.9 185.5,48.0 185.8,48.7 186.2,67.6 186.5,52.7 186.8,52.7 187.1,52.7 187.4,48.7 187.7,51.9 188.0,50.3 188.3,30.7 188.6,59.8 188.9,52.7 189.2,65.3 189.5,37.0 189.8,60.5 190.1,52.7 190.4,51.9 190.7,53.5 191.0,61.3 191.3,62.9 191.6,62.9 191.9,55.8 192.2,61.3 192.5,68.4 192.8,51.9 193.1,75.5 193.5,71.5 193.8,77.1 194.1,84.1 194.4,77.8 194.7,86.5 195.0,78.6 195.3,93.6 195.6,81.0 195.9,91.2 196.2,95.9 196.5,94.3 196.8,89.6 197.1,98.3 197.4,97.5 197.7,103.0 198.0,98.3 198.3,102.2 198.6,96.7 198.9,108.5 199.2,102.2 199.5,111.6 199.8,103.0 200.1,107.7 200.4,114.0 200.8,115.6 201.1,117.2 201.4,107.7 201.7,117.2 202.0,110.9 202.3,112.4 202.6,116.4 202.9,117.2 203.2,119.5 203.5,118.7 203.8,115.6 204.1,117.9 204.4,117.9 204.7,121.1 205.0,121.1 205.3,122.7 205.6,121.9 205.9,117.2 206.2,119.5 206.5,122.7 206.8,118.7 207.1,118.7 207.4,120.3 207.7,123.4 208.1,118.7 208.4,123.4 208.7,121.1 209.0,119.5 209.3,121.9 209.6,122.7 209.9,125.8 210.2,119.5 210.5,121.1 210.8,121.1 211.1,117.2 211.4,121.9 211.7,121.9 212.0,120.3 212.3,121.9 212.6,119.5 212.9,121.9 213.2,121.1 213.5,121.1 213.8,120.3 214.1,122.7 214.4,121.9 214.7,123.4 215.0,121.1 215.4,121.9 215.7,117.2 216.0,125.8 216.3,119.5 216.6,119.5 216.9,121.1 217.2,124.2 217.5,125.8 217.8,120.3 218.1,125.0 218.4,122.7 218.7,117.9 219.0,120.3 219.3,117.2 219.6,121.9 219.9,118.7 220.2,120.3 220.5,118.7 220.8,120.3 221.1,118.7 221.4,117.2 221.7,121.9 222.0,115.6 222.3,120.3 222.7,121.9 223.0,117.9 223.3,119.5 223.6,124.2 223.9,125.8 224.2,121.9 224.5,121.1 224.8,120.3 225.1,121.9 225.4,121.9 225.7,120.3 226.0,117.9 226.3,121.9 226.6,117.9 226.9,121.9 227.2,121.1 227.5,122.7 227.8,121.9 228.1,121.1 228.4,121.9 228.7,118.7 229.0,124.2 229.3,119.5 229.6,120.3 230.0,122.7 230.3,124.2 230.6,119.5 230.9,120.3 231.2,118.7 231.5,119.5 231.8,121.9 232.1,119.5 232.4,117.9 232.7,119.5 233.0,118.7 233.3,121.1 233.6,120.3 233.9,121.9 234.2,118.7 234.5,121.9 234.8,121.9 235.1,117.9 235.4,119.5 235.7,117.9 236.0,122.7 236.3,123.4 236.6,122.7 236.9,120.3 237.3,119.5 237.6,125.8 237.9,119.5 238.2,117.2 238.5,121.9 238.8,122.7 239.1,122.7 239.4,119.5 239.7,117.9 240.0,121.9 240.3,121.9 240.6,125.0 240.9,118.7 241.2,123.4 241.5,120.3 241.8,118.7 242.1,123.4 242.4,119.5 242.7,121.1 243.0,119.5 243.3,120.3 243.6,119.5 243.9,119.5 244.2,121.1 244.6,122.7 244.9,119.5 245.2,117.9 245.5,119.5 245.8,118.7 246.1,119.5 246.4,121.1 246.7,121.9 247.0,120.3 247.3,120.3 247.6,120.3 247.9,117.2 248.2,121.9 248.5,122.7 248.8,120.3 249.1,118.7 249.4,119.5 249.7,118.7 250.0,118.7 250.3,120.3 250.6,117.2 250.9,117.2 251.2,120.3 251.5,120.3 251.9,121.9 252.2,118.7 252.5,112.4 252.8,117.9 253.1,117.9 253.4,118.7 253.7,122.7 254.0,118.7 254.3,114.0 254.6,112.4 254.9,119.5 255.2,114.0 255.5,116.4 255.8,123.4 256.1,118.7 256.4,118.7 256.7,112.4 257.0,113.2 257.3,113.2 257.6,110.1 257.9,113.2 258.2,112.4 258.5,114.8 258.8,116.4 259.2,111.6 259.5,118.7 259.8,117.9 260.1,115.6 260.4,114.0 260.7,116.4 261.0,110.1 261.3,112.4 261.6,116.4 261.9,114.0 262.2,121.1 262.5,110.9 262.8,114.0 263.1,116.4 263.4,120.3 263.7,119.5 264.0,123.4 264.3,114.8 264.6,113.2 264.9,112.4 265.2,121.1 265.5,114.0 265.8,119.5 266.1,123.4 266.5,115.6 266.8,114.8 267.1,118.7 267.4,118.7 267.7,120.3 268.0,117.9 268.3,116.4 268.6,114.8 268.9,123.4 269.2,117.9 269.5,119.5 269.8,120.3 270.1,123.4 270.4,121.9 270.7,121.1 271.0,119.5 271.3,124.2 271.6,125.0 271.9,120.3 272.2,123.4 272.5,118.7 272.8,122.7 273.1,121.9 273.4,125.0 273.8,121.1 274.1,124.2 274.4,118.7 274.7,121.9 275.0,119.5 275.3,121.1 275.6,122.7 275.9,123.4 276.2,123.4 276.5,119.5 276.8,121.1 277.1,121.9 277.4,125.8 277.7,119.5 278.0,121.1 278.3,125.8 278.6,121.9 278.9,123.4 279.2,124.2 279.5,122.7 279.8,121.9 280.1,125.0 280.4,125.0 280.7,121.1 281.1,125.0 281.4,124.2 281.7,123.4 282.0,123.4 282.3,125.0 282.6,125.8 282.9,125.8 283.2,122.7 283.5,124.2 283.8,123.4 284.1,124.2 284.4,125.0 284.7,124.2 285.0,125.0 285.3,124.2 285.6,125.0 285.9,123.4 286.2,125.8 286.5,124.2 286.8,125.8 287.1,125.0 287.4,125.0 287.7,125.0 288.0,125.8 288.4,125.0 288.7,125.8 289.0,125.8 289.3,125.0 289.6,125.8 289.9,125.8 290.2,125.0 290.5,125.8 290.8,125.8 291.1,125.8 291.4,125.0 291.7,125.0 292.0,125.8 292.3,125.8 292.6,125.8 292.9,125.8 293.2,125.8 293.5,125.8 293.8,125.8 294.1,125.0 294.4,125.8 294.7,125.0 295.0,125.8 295.3,125.8 295.7,125.8 296.0,125.8 296.3,125.8 296.6,125.8 296.9,125.8 297.2,125.8 297.5,125.8 297.8,125.8 298.1,125.8 298.4,125.0 298.7,125.8 299.0,125.8 299.3,125.8 299.6,125.8 299.9,125.0 300.2,125.8 300.5,125.8 300.8,125.8 301.1,125.8 301.4,125.8 301.7,125.8 302.0,125.8 302.3,125.8 302.6,125.8 303.0,125.8 303.3,125.8 303.6,125.8 303.9,125.8 304.2,125.8 304.5,125.8 304.8,125.8 305.1,125.8 305.4,125.8 305.7,125.8 306.0,125.8 306.3,125.8 306.6,125.8 306.9,125.8 307.2,125.8 307.5,125.8 307.8,125.8 308.1,125.8 308.4,125.0 308.7,125.8 309.0,125.8 309.3,125.8 309.6,125.8 309.9,125.8 310.3,125.8 310.6,125.8 310.9,125.8 311.2,125.8 311.5,125.8 311.8,125.8 312.1,125.8 312.4,125.8 312.7,125.8 313.0,125.8 313.3,125.8 313.6,125.8 313.9,125.8 314.2,125.8 314.5,125.8 314.8,125.8 315.1,125.8 315.4,125.8 315.7,125.8 316.0,125.8 316.3,125.8 316.6,125.8 316.9,125.8 317.2,125.8 317.6,125.8 317.9,125.8 318.2,125.8 318.5,125.8 318.8,125.8 319.1,125.8 319.4,125.8 319.7,125.8 320.0,125.8 320.3,125.8 320.6,125.8 320.9,125.8 321.2,125.8 321.5,125.8 321.8,125.8 322.1,125.8 322.4,125.8 322.7,125.8 323.0,125.8 323.3,125.8 323.6,125.8 323.9,125.8 324.2,125.8 324.5,125.8 324.9,125.8 325.2,125.8 325.5,125.8 325.8,125.8 326.1,125.8 326.4,125.8 326.7,125.8 327.0,125.8 327.3,125.8 327.6,125.8 327.9,125.8 328.2,125.8 328.5,125.8 328.8,125.8 329.1,125.8 329.4,125.8 329.7,125.8 330.0,125.8 330.3,125.8 330.6,125.8 330.9,125.8 331.2,125.8 331.5,125.8 331.8,125.8 332.2,125.8 332.5,125.8 332.8,125.8 333.1,125.8 333.4,125.8 333.7,125.8 334.0,125.8 334.3,125.8 334.6,125.8 334.9,125.8 335.2,125.8 335.5,125.8 335.8,125.8 336.1,125.8 336.4,125.8 336.7,125.8 337.0,125.8 337.3,125.8 337.6,125.8 337.9,125.8 338.2,125.8 338.5,125.8 338.8,125.8 339.1,125.8 339.5,125.8 339.8,125.8 340.1,125.8 340.4,125.8 340.7,125.8 341.0,125.8 341.3,125.8 341.6,125.8 341.9,125.8 342.2,125.8 342.5,125.8 342.8,125.8 343.1,125.8 343.4,125.8 343.7,125.8 344.0,125.8 344.3,125.8 344.6,125.8 344.9,125.8 345.2,125.8 345.5,125.8 345.8,125.8 346.1,125.8 346.4,125.8 346.8,125.8 347.1,125.8 347.4,125.8 347.7,125.8 348.0,125.8 348.3,125.8 348.6,125.8 348.9,125.8 349.2,125.8 349.5,125.8 349.8,125.8 350.1,125.8 350.4,125.8 350.7,125.8 351.0,125.8 351.3,125.8 351.6,125.8 351.9,125.8 352.2,125.8 352.5,125.8 352.8,125.8 353.1,125.8 353.4,125.8 353.7,125.8 354.1,125.8 354.4,125.8 354.7,125.8 355.0,125.8 355.3,125.8 355.6,125.8 355.9,125.8 356.2,125.8 356.5,125.8 356.8,125.8 357.1,125.8 357.4,125.8"/>
<rect x="-0.8" y="-0.8" width="359.1" height="127.4" fill="none" stroke="#808080" stroke-width="1.6"/>
<text class="tk" x="23.1" y="139.6" text-anchor="middle">31500</text>
<text class="tk" x="73.8" y="139.6" text-anchor="middle">31750</text>
<text class="tk" x="124.5" y="139.6" text-anchor="middle">32000</text>
<text class="tk" x="175.2" y="139.6" text-anchor="middle">32250</text>
<text class="tk" x="225.9" y="139.6" text-anchor="middle">32500</text>
<text class="tk" x="276.6" y="139.6" text-anchor="middle">32750</text>
<text class="tk" x="327.3" y="139.6" text-anchor="middle">33000</text>
<text class="tk" x="-4.4" y="129.6" text-anchor="end">0</text>
<text class="tk" x="-4.4" y="90.3" text-anchor="end">50</text>
<text class="tk" x="-4.4" y="51.0" text-anchor="end">100</text>
<text class="tk" x="-4.4" y="11.7" text-anchor="end">150</text>
<rect x="265.5" y="7.3" width="14" height="10.8" fill="#fff" stroke="#ccc" stroke-width="0.8"/>
<rect x="267.3" y="8.9" width="10.6" height="7.6" fill="#0000ff"/>
<text class="lg" x="283.2" y="17.1" fill="#8c8c8c">aida15 1.8.L</text>
<path d="M357.1,-9.9 l9.9,9.9 l-9.9,9.9 l-9.9,-9.9 z" fill="#ff0000"/>
</g></svg>
<svg class="ch" style="left:745.5px;top:680.6px" width="420" height="160" viewBox="0 0 420 160">
<g transform="translate(40,20)">
<line x1="23.00" y1="0" x2="23.00" y2="125.8" stroke="#cfcfcf" stroke-width="1"/>
<line x1="74.00" y1="0" x2="74.00" y2="125.8" stroke="#cfcfcf" stroke-width="1"/>
<line x1="125.00" y1="0" x2="125.00" y2="125.8" stroke="#cfcfcf" stroke-width="1"/>
<line x1="175.00" y1="0" x2="175.00" y2="125.8" stroke="#cfcfcf" stroke-width="1"/>
<line x1="226.00" y1="0" x2="226.00" y2="125.8" stroke="#cfcfcf" stroke-width="1"/>
<line x1="277.00" y1="0" x2="277.00" y2="125.8" stroke="#cfcfcf" stroke-width="1"/>
<line x1="327.00" y1="0" x2="327.00" y2="125.8" stroke="#cfcfcf" stroke-width="1"/>
<line x1="0" y1="86.90" x2="357.5" y2="86.90" stroke="#cfcfcf" stroke-width="1"/>
<line x1="0" y1="46.90" x2="357.5" y2="46.90" stroke="#cfcfcf" stroke-width="1"/>
<line x1="0" y1="7.90" x2="357.5" y2="7.90" stroke="#cfcfcf" stroke-width="1"/>
<clipPath id="cp7"><rect x="0" y="0" width="357.5" height="126.8"/></clipPath>
<polyline clip-path="url(#cp7)" fill="none" stroke="#0000ff" stroke-width="1.0" stroke-linejoin="round" points="0.0,125.8 0.3,125.8 0.6,125.8 0.9,125.8 1.2,125.8 1.5,125.8 1.8,125.8 2.1,125.8 2.4,125.8 2.7,125.8 3.0,125.8 3.3,125.8 3.7,125.8 4.0,125.8 4.3,125.8 4.6,125.8 4.9,125.8 5.2,125.8 5.5,125.8 5.8,125.8 6.1,125.8 6.4,125.8 6.7,125.8 7.0,125.8 7.3,125.8 7.6,125.8 7.9,125.8 8.2,125.8 8.5,125.8 8.8,125.8 9.1,125.8 9.4,125.8 9.7,125.8 10.0,125.8 10.3,125.8 10.6,125.8 11.0,125.8 11.3,125.8 11.6,125.8 11.9,125.8 12.2,125.8 12.5,125.8 12.8,125.8 13.1,125.8 13.4,125.8 13.7,125.8 14.0,125.8 14.3,125.8 14.6,125.8 14.9,125.8 15.2,125.8 15.5,125.8 15.8,125.8 16.1,125.8 16.4,125.8 16.7,125.8 17.0,125.8 17.3,125.8 17.6,125.8 17.9,125.8 18.3,125.8 18.6,125.8 18.9,125.8 19.2,125.8 19.5,125.8 19.8,125.8 20.1,125.8 20.4,125.8 20.7,125.8 21.0,125.8 21.3,125.8 21.6,125.8 21.9,125.8 22.2,125.8 22.5,125.8 22.8,125.8 23.1,125.8 23.4,125.8 23.7,125.8 24.0,125.8 24.3,125.8 24.6,125.8 24.9,125.8 25.2,125.8 25.6,125.8 25.9,125.8 26.2,125.8 26.5,125.8 26.8,125.8 27.1,125.8 27.4,125.8 27.7,125.0 28.0,125.8 28.3,125.8 28.6,125.8 28.9,125.8 29.2,125.8 29.5,125.8 29.8,125.8 30.1,125.8 30.4,125.8 30.7,125.8 31.0,125.8 31.3,125.8 31.6,125.8 31.9,125.8 32.2,125.8 32.5,125.8 32.9,125.8 33.2,125.8 33.5,125.8 33.8,125.8 34.1,125.8 34.4,125.8 34.7,125.8 35.0,125.8 35.3,125.8 35.6,125.8 35.9,125.8 36.2,125.8 36.5,125.8 36.8,125.8 37.1,125.8 37.4,125.8 37.7,125.8 38.0,125.8 38.3,125.8 38.6,125.8 38.9,125.8 39.2,125.8 39.5,125.8 39.8,125.8 40.2,125.8 40.5,125.8 40.8,125.8 41.1,125.8 41.4,125.8 41.7,125.8 42.0,125.8 42.3,125.8 42.6,125.8 42.9,125.8 43.2,125.8 43.5,125.8 43.8,125.8 44.1,125.8 44.4,125.8 44.7,125.8 45.0,125.8 45.3,125.8 45.6,125.8 45.9,125.0 46.2,125.8 46.5,125.8 46.8,125.8 47.1,125.8 47.5,125.8 47.8,125.8 48.1,125.8 48.4,125.8 48.7,125.8 49.0,125.8 49.3,125.8 49.6,125.8 49.9,125.8 50.2,125.8 50.5,125.8 50.8,125.8 51.1,125.8 51.4,125.0 51.7,125.8 52.0,125.8 52.3,125.8 52.6,125.8 52.9,125.8 53.2,125.8 53.5,125.8 53.8,125.8 54.1,125.8 54.4,125.8 54.8,125.8 55.1,125.8 55.4,125.8 55.7,125.8 56.0,125.8 56.3,125.8 56.6,125.8 56.9,125.8 57.2,125.8 57.5,125.0 57.8,125.8 58.1,125.8 58.4,125.8 58.7,125.8 59.0,125.8 59.3,125.8 59.6,125.8 59.9,125.8 60.2,125.8 60.5,125.8 60.8,125.8 61.1,125.8 61.4,125.0 61.7,125.8 62.1,125.0 62.4,125.8 62.7,125.8 63.0,125.8 63.3,125.8 63.6,125.8 63.9,125.8 64.2,125.0 64.5,125.8 64.8,125.8 65.1,125.0 65.4,125.8 65.7,125.8 66.0,125.8 66.3,125.8 66.6,125.0 66.9,125.8 67.2,125.8 67.5,125.8 67.8,125.8 68.1,125.0 68.4,125.0 68.7,125.8 69.0,125.8 69.4,125.8 69.7,125.8 70.0,125.0 70.3,125.8 70.6,125.0 70.9,125.8 71.2,125.0 71.5,125.0 71.8,125.0 72.1,124.2 72.4,125.8 72.7,125.0 73.0,124.2 73.3,125.0 73.6,125.8 73.9,125.8 74.2,125.0 74.5,125.8 74.8,125.0 75.1,125.0 75.4,125.0 75.7,125.0 76.0,125.8 76.3,125.0 76.7,124.2 77.0,125.0 77.3,125.8 77.6,124.2 77.9,125.8 78.2,124.2 78.5,125.0 78.8,125.0 79.1,125.0 79.4,125.0 79.7,125.0 80.0,125.0 80.3,125.8 80.6,125.8 80.9,125.8 81.2,125.8 81.5,125.0 81.8,125.8 82.1,125.8 82.4,125.0 82.7,125.0 83.0,125.0 83.3,125.8 83.6,125.0 84.0,125.8 84.3,125.8 84.6,125.8 84.9,123.4 85.2,123.4 85.5,125.0 85.8,125.8 86.1,125.0 86.4,125.8 86.7,125.8 87.0,124.2 87.3,124.2 87.6,125.8 87.9,125.0 88.2,124.2 88.5,125.0 88.8,124.2 89.1,124.2 89.4,124.2 89.7,124.2 90.0,124.2 90.3,125.8 90.6,125.0 90.9,125.8 91.3,122.7 91.6,124.2 91.9,124.2 92.2,124.2 92.5,122.7 92.8,124.2 93.1,122.7 93.4,125.0 93.7,122.7 94.0,125.0 94.3,124.2 94.6,121.9 94.9,125.8 95.2,123.4 95.5,125.0 95.8,125.0 96.1,125.0 96.4,123.4 96.7,125.0 97.0,125.8 97.3,125.0 97.6,123.4 97.9,125.0 98.2,125.8 98.6,122.7 98.9,124.2 99.2,124.2 99.5,124.2 99.8,123.4 100.1,122.7 100.4,125.0 100.7,123.4 101.0,124.2 101.3,125.8 101.6,123.4 101.9,121.9 102.2,123.4 102.5,121.1 102.8,124.2 103.1,122.7 103.4,122.7 103.7,125.0 104.0,123.4 104.3,122.7 104.6,124.2 104.9,122.7 105.2,120.3 105.5,125.0 105.9,124.2 106.2,125.0 106.5,123.4 106.8,122.7 107.1,122.7 107.4,121.9 107.7,121.9 108.0,120.3 108.3,121.9 108.6,121.1 108.9,120.3 109.2,123.4 109.5,123.4 109.8,122.7 110.1,120.3 110.4,120.3 110.7,122.7 111.0,121.9 111.3,121.1 111.6,121.9 111.9,122.7 112.2,118.7 112.5,120.3 112.8,121.1 113.2,122.7 113.5,121.1 113.8,121.1 114.1,121.1 114.4,120.3 114.7,122.7 115.0,121.1 115.3,125.0 115.6,121.1 115.9,121.1 116.2,118.7 116.5,116.4 116.8,117.9 117.1,121.9 117.4,121.1 117.7,120.3 118.0,116.4 118.3,121.1 118.6,118.7 118.9,117.2 119.2,114.0 119.5,114.8 119.8,117.2 120.1,114.0 120.5,111.6 120.8,117.2 121.1,114.8 121.4,113.2 121.7,115.6 122.0,120.3 122.3,111.6 122.6,111.6 122.9,110.9 123.2,109.3 123.5,116.4 123.8,108.5 124.1,108.5 124.4,105.4 124.7,105.4 125.0,103.0 125.3,101.4 125.6,106.9 125.9,99.9 126.2,104.6 126.5,107.7 126.8,101.4 127.1,103.0 127.4,109.3 127.8,95.9 128.1,105.4 128.4,100.6 128.7,106.1 129.0,99.1 129.3,97.5 129.6,87.3 129.9,92.0 130.2,100.6 130.5,91.2 130.8,84.9 131.1,92.0 131.4,84.9 131.7,92.0 132.0,95.1 132.3,84.9 132.6,84.9 132.9,77.1 133.2,79.4 133.5,84.1 133.8,92.0 134.1,84.1 134.4,77.8 134.7,73.9 135.1,89.6 135.4,77.8 135.7,81.8 136.0,83.3 136.3,69.2 136.6,75.5 136.9,80.2 137.2,82.6 137.5,87.3 137.8,88.1 138.1,73.1 138.4,62.9 138.7,65.3 139.0,60.5 139.3,75.5 139.6,59.0 139.9,69.2 140.2,78.6 140.5,65.3 140.8,69.2 141.1,63.7 141.4,71.5 141.7,62.9 142.0,73.9 142.4,72.3 142.7,60.5 143.0,72.3 143.3,68.4 143.6,44.8 143.9,54.3 144.2,55.0 144.5,51.9 144.8,54.3 145.1,74.7 145.4,53.5 145.7,57.4 146.0,62.9 146.3,60.5 146.6,48.7 146.9,48.7 147.2,60.5 147.5,55.0 147.8,47.2 148.1,66.0 148.4,69.2 148.7,62.1 149.0,40.9 149.3,57.4 149.7,43.2 150.0,62.9 150.3,49.5 150.6,56.6 150.9,60.5 151.2,54.3 151.5,59.0 151.8,68.4 152.1,70.8 152.4,55.8 152.7,69.2 153.0,68.4 153.3,83.3 153.6,62.1 153.9,68.4 154.2,83.3 154.5,76.3 154.8,83.3 155.1,66.8 155.4,81.0 155.7,79.4 156.0,76.3 156.3,82.6 156.6,77.1 157.0,82.6 157.3,88.1 157.6,90.4 157.9,103.0 158.2,103.8 158.5,96.7 158.8,92.8 159.1,107.7 159.4,92.8 159.7,99.1 160.0,100.6 160.3,102.2 160.6,100.6 160.9,108.5 161.2,99.9 161.5,97.5 161.8,106.1 162.1,114.8 162.4,105.4 162.7,102.2 163.0,105.4 163.3,110.9 163.6,109.3 163.9,112.4 164.3,115.6 164.6,118.7 164.9,106.1 165.2,114.8 165.5,112.4 165.8,110.1 166.1,111.6 166.4,116.4 166.7,113.2 167.0,114.8 167.3,109.3 167.6,115.6 167.9,115.6 168.2,116.4 168.5,116.4 168.8,114.0 169.1,119.5 169.4,114.0 169.7,111.6 170.0,119.5 170.3,110.9 170.6,110.9 170.9,115.6 171.2,114.8 171.6,111.6 171.9,116.4 172.2,109.3 172.5,116.4 172.8,118.7 173.1,121.1 173.4,107.7 173.7,109.3 174.0,114.8 174.3,116.4 174.6,117.2 174.9,117.9 175.2,115.6 175.5,117.9 175.8,121.1 176.1,117.2 176.4,117.9 176.7,111.6 177.0,119.5 177.3,112.4 177.6,115.6 177.9,110.1 178.2,110.1 178.5,121.1 178.9,111.6 179.2,118.7 179.5,113.2 179.8,112.4 180.1,110.1 180.4,116.4 180.7,121.1 181.0,112.4 181.3,114.0 181.6,110.9 181.9,115.6 182.2,110.9 182.5,110.1 182.8,112.4 183.1,113.2 183.4,107.7 183.7,117.2 184.0,117.9 184.3,108.5 184.6,111.6 184.9,117.2 185.2,116.4 185.5,108.5 185.8,114.8 186.2,117.2 186.5,111.6 186.8,110.9 187.1,117.9 187.4,110.9 187.7,117.9 188.0,110.9 188.3,113.2 188.6,114.8 188.9,113.2 189.2,114.0 189.5,120.3 189.8,116.4 190.1,113.2 190.4,114.0 190.7,115.6 191.0,113.2 191.3,112.4 191.6,115.6 191.9,114.8 192.2,115.6 192.5,113.2 192.8,117.2 193.1,119.5 193.5,116.4 193.8,115.6 194.1,114.8 194.4,115.6 194.7,117.9 195.0,117.2 195.3,109.3 195.6,117.2 195.9,116.4 196.2,113.2 196.5,120.3 196.8,114.8 197.1,114.0 197.4,114.0 197.7,117.9 198.0,120.3 198.3,111.6 198.6,109.3 198.9,114.0 199.2,114.0 199.5,117.9 199.8,114.8 200.1,120.3 200.4,115.6 200.8,115.6 201.1,117.2 201.4,114.8 201.7,116.4 202.0,111.6 202.3,109.3 202.6,110.1 202.9,116.4 203.2,117.2 203.5,120.3 203.8,114.0 204.1,114.8 204.4,113.2 204.7,117.9 205.0,113.2 205.3,115.6 205.6,116.4 205.9,113.2 206.2,112.4 206.5,114.8 206.8,114.8 207.1,112.4 207.4,117.9 207.7,113.2 208.1,110.9 208.4,115.6 208.7,117.9 209.0,114.8 209.3,115.6 209.6,114.8 209.9,121.1 210.2,119.5 210.5,112.4 210.8,116.4 211.1,117.9 211.4,114.0 211.7,117.2 212.0,117.9 212.3,116.4 212.6,115.6 212.9,121.1 213.2,114.0 213.5,115.6 213.8,116.4 214.1,109.3 214.4,117.2 214.7,107.7 215.0,110.1 215.4,110.9 215.7,110.9 216.0,118.7 216.3,114.0 216.6,111.6 216.9,111.6 217.2,115.6 217.5,116.4 217.8,121.1 218.1,118.7 218.4,113.2 218.7,121.1 219.0,113.2 219.3,113.2 219.6,110.1 219.9,114.0 220.2,114.8 220.5,113.2 220.8,114.8 221.1,117.2 221.4,113.2 221.7,111.6 222.0,120.3 222.3,113.2 222.7,111.6 223.0,114.8 223.3,118.7 223.6,114.0 223.9,117.9 224.2,119.5 224.5,116.4 224.8,114.0 225.1,117.9 225.4,117.9 225.7,116.4 226.0,117.2 226.3,110.9 226.6,116.4 226.9,118.7 227.2,110.9 227.5,115.6 227.8,114.8 228.1,115.6 228.4,108.5 228.7,113.2 229.0,117.9 229.3,112.4 229.6,116.4 230.0,107.7 230.3,115.6 230.6,111.6 230.9,115.6 231.2,114.8 231.5,109.3 231.8,112.4 232.1,114.0 232.4,111.6 232.7,114.0 233.0,116.4 233.3,115.6 233.6,115.6 233.9,115.6 234.2,110.1 234.5,117.9 234.8,114.8 235.1,113.2 235.4,115.6 235.7,113.2 236.0,117.9 236.3,117.2 236.6,114.0 236.9,121.9 237.3,114.0 237.6,114.8 237.9,111.6 238.2,114.0 238.5,114.0 238.8,114.0 239.1,117.9 239.4,113.2 239.7,117.2 240.0,115.6 240.3,116.4 240.6,114.8 240.9,120.3 241.2,118.7 241.5,121.1 241.8,114.8 242.1,116.4 242.4,120.3 242.7,119.5 243.0,113.2 243.3,121.1 243.6,117.2 243.9,116.4 244.2,119.5 244.6,118.7 244.9,121.9 245.2,116.4 245.5,116.4 245.8,119.5 246.1,119.5 246.4,118.7 246.7,119.5 247.0,119.5 247.3,121.1 247.6,117.2 247.9,120.3 248.2,119.5 248.5,120.3 248.8,119.5 249.1,124.2 249.4,121.9 249.7,121.1 250.0,123.4 250.3,124.2 250.6,125.8 250.9,122.7 251.2,122.7 251.5,122.7 251.9,123.4 252.2,125.8 252.5,125.0 252.8,122.7 253.1,125.0 253.4,124.2 253.7,124.2 254.0,122.7 254.3,124.2 254.6,123.4 254.9,122.7 255.2,124.2 255.5,124.2 255.8,125.8 256.1,124.2 256.4,125.0 256.7,125.8 257.0,125.0 257.3,124.2 257.6,124.2 257.9,125.8 258.2,125.8 258.5,125.8 258.8,125.8 259.2,125.0 259.5,125.8 259.8,125.8 260.1,125.8 260.4,125.8 260.7,125.0 261.0,125.8 261.3,125.0 261.6,125.8 261.9,125.0 262.2,125.8 262.5,125.0 262.8,125.0 263.1,124.2 263.4,125.8 263.7,125.8 264.0,125.0 264.3,125.0 264.6,125.8 264.9,125.8 265.2,125.8 265.5,125.8 265.8,125.8 266.1,125.8 266.5,125.8 266.8,125.8 267.1,125.8 267.4,125.8 267.7,125.8 268.0,125.8 268.3,125.8 268.6,125.8 268.9,125.8 269.2,125.8 269.5,125.8 269.8,125.0 270.1,125.8 270.4,125.8 270.7,125.8 271.0,125.8 271.3,125.8 271.6,125.8 271.9,125.8 272.2,125.8 272.5,125.8 272.8,125.8 273.1,125.8 273.4,125.8 273.8,125.8 274.1,125.8 274.4,125.8 274.7,125.8 275.0,125.8 275.3,125.8 275.6,125.8 275.9,125.8 276.2,125.8 276.5,125.8 276.8,125.8 277.1,125.8 277.4,125.8 277.7,125.8 278.0,125.8 278.3,125.8 278.6,125.8 278.9,125.8 279.2,125.8 279.5,125.8 279.8,125.8 280.1,125.8 280.4,125.8 280.7,125.8 281.1,125.8 281.4,125.8 281.7,125.8 282.0,125.8 282.3,125.8 282.6,125.8 282.9,125.8 283.2,125.8 283.5,125.8 283.8,125.8 284.1,125.8 284.4,125.8 284.7,125.8 285.0,125.8 285.3,125.8 285.6,125.8 285.9,125.8 286.2,125.8 286.5,125.8 286.8,125.8 287.1,125.8 287.4,125.8 287.7,125.8 288.0,125.8 288.4,125.8 288.7,125.8 289.0,125.8 289.3,125.8 289.6,125.8 289.9,125.8 290.2,125.8 290.5,125.8 290.8,125.8 291.1,125.8 291.4,125.8 291.7,125.8 292.0,125.8 292.3,125.8 292.6,125.8 292.9,125.8 293.2,125.8 293.5,125.8 293.8,125.8 294.1,125.8 294.4,125.8 294.7,125.8 295.0,125.8 295.3,125.8 295.7,125.8 296.0,125.8 296.3,125.8 296.6,125.8 296.9,125.8 297.2,125.8 297.5,125.8 297.8,125.8 298.1,125.8 298.4,125.8 298.7,125.8 299.0,125.8 299.3,125.8 299.6,125.8 299.9,125.8 300.2,125.8 300.5,125.8 300.8,125.8 301.1,125.8 301.4,125.8 301.7,125.8 302.0,125.8 302.3,125.8 302.6,125.8 303.0,125.8 303.3,125.8 303.6,125.8 303.9,125.8 304.2,125.8 304.5,125.8 304.8,125.8 305.1,125.8 305.4,125.8 305.7,125.8 306.0,125.8 306.3,125.8 306.6,125.8 306.9,125.8 307.2,125.8 307.5,125.8 307.8,125.8 308.1,125.8 308.4,125.8 308.7,125.8 309.0,125.8 309.3,125.8 309.6,125.8 309.9,125.8 310.3,125.8 310.6,125.8 310.9,125.8 311.2,125.8 311.5,125.8 311.8,125.8 312.1,125.8 312.4,125.8 312.7,125.8 313.0,125.8 313.3,125.8 313.6,125.8 313.9,125.8 314.2,125.8 314.5,125.8 314.8,125.8 315.1,125.8 315.4,125.8 315.7,125.8 316.0,125.8 316.3,125.8 316.6,125.8 316.9,125.8 317.2,125.8 317.6,125.8 317.9,125.8 318.2,125.8 318.5,125.8 318.8,125.8 319.1,125.8 319.4,125.8 319.7,125.8 320.0,125.8 320.3,125.8 320.6,125.8 320.9,125.8 321.2,125.8 321.5,125.8 321.8,125.8 322.1,125.8 322.4,125.8 322.7,125.8 323.0,125.8 323.3,125.8 323.6,125.8 323.9,125.8 324.2,125.8 324.5,125.8 324.9,125.8 325.2,125.8 325.5,125.8 325.8,125.8 326.1,125.8 326.4,125.8 326.7,125.8 327.0,125.8 327.3,125.8 327.6,125.8 327.9,125.8 328.2,125.8 328.5,125.8 328.8,125.8 329.1,125.8 329.4,125.8 329.7,125.8 330.0,125.8 330.3,125.8 330.6,125.8 330.9,125.8 331.2,125.8 331.5,125.8 331.8,125.8 332.2,125.8 332.5,125.8 332.8,125.8 333.1,125.8 333.4,125.8 333.7,125.8 334.0,125.8 334.3,125.8 334.6,125.8 334.9,125.8 335.2,125.8 335.5,125.8 335.8,125.8 336.1,125.8 336.4,125.8 336.7,125.8 337.0,125.8 337.3,125.8 337.6,125.8 337.9,125.8 338.2,125.8 338.5,125.8 338.8,125.8 339.1,125.8 339.5,125.8 339.8,125.8 340.1,125.8 340.4,125.8 340.7,125.8 341.0,125.8 341.3,125.8 341.6,125.8 341.9,125.8 342.2,125.8 342.5,125.8 342.8,125.8 343.1,125.8 343.4,125.8 343.7,125.8 344.0,125.8 344.3,125.8 344.6,125.8 344.9,125.8 345.2,125.8 345.5,125.8 345.8,125.8 346.1,125.8 346.4,125.8 346.8,125.8 347.1,125.8 347.4,125.8 347.7,125.8 348.0,125.8 348.3,125.8 348.6,125.8 348.9,125.8 349.2,125.8 349.5,125.8 349.8,125.8 350.1,125.8 350.4,125.8 350.7,125.8 351.0,125.8 351.3,125.8 351.6,125.8 351.9,125.8 352.2,125.8 352.5,125.8 352.8,125.8 353.1,125.8 353.4,125.8 353.7,125.8 354.1,125.8 354.4,125.8 354.7,125.8 355.0,125.8 355.3,125.8 355.6,125.8 355.9,125.8 356.2,125.8 356.5,125.8 356.8,125.8 357.1,125.8 357.4,125.8"/>
<rect x="-0.8" y="-0.8" width="359.1" height="127.4" fill="none" stroke="#000" stroke-width="1.6"/>
<text class="tk" x="23.1" y="139.6" text-anchor="middle">31500</text>
<text class="tk" x="73.8" y="139.6" text-anchor="middle">31750</text>
<text class="tk" x="124.5" y="139.6" text-anchor="middle">32000</text>
<text class="tk" x="175.2" y="139.6" text-anchor="middle">32250</text>
<text class="tk" x="225.9" y="139.6" text-anchor="middle">32500</text>
<text class="tk" x="276.6" y="139.6" text-anchor="middle">32750</text>
<text class="tk" x="327.3" y="139.6" text-anchor="middle">33000</text>
<text class="tk" x="-4.4" y="129.6" text-anchor="end">0</text>
<text class="tk" x="-4.4" y="90.3" text-anchor="end">50</text>
<text class="tk" x="-4.4" y="51.0" text-anchor="end">100</text>
<text class="tk" x="-4.4" y="11.7" text-anchor="end">150</text>
<rect x="265.5" y="7.3" width="14" height="10.8" fill="#fff" stroke="#ccc" stroke-width="0.8"/>
<rect x="267.3" y="8.9" width="10.6" height="7.6" fill="#0000ff"/>
<text class="lg" x="283.2" y="17.1" fill="#000">aida16 1.8.L</text>
<path d="M357.1,-9.9 l9.9,9.9 l-9.9,9.9 l-9.9,-9.9 z" fill="#00ff00"/>
</g></svg>

<div class="btn" style="left:6px;top:860.300px;width:99.500px">Empty Log Window</div>
<div class="btn" style="left:110px;top:860.300px;width:132px">Send Log Window to ELog</div>
<div class="btn" style="left:246px;top:860.300px;width:39.500px">Reload</div>
<div class="btn" style="left:290px;top:860.300px;width:35px">Reset</div>
<div class="btn" style="left:329px;top:860.300px;width:79.500px">Show Variables</div>
<div class="btn" style="left:413px;top:860.300px;width:96px">Show Log Window</div>
<div class="btn" style="left:513px;top:860.300px;width:79px">Enable Logging</div>
<div class="btn" style="left:1806px;top:860.300px;width:107.500px">How to use this page</div>
<div class="abs" style="right:6.300px;top:892px;line-height:16px">Last Updated: April 18, 2025 16:09:15</div>
<div class="hr" style="top:919.500px"></div>
<div class="abs" style="left:8px;top:919px;line-height:16px;color:#000;font-size:12.800px">.</div>
<div class="abs" style="left:8px;top:934px;line-height:16px"><a style="color:#0000ee;text-decoration:underline">Home</a></div>
</body></html>
